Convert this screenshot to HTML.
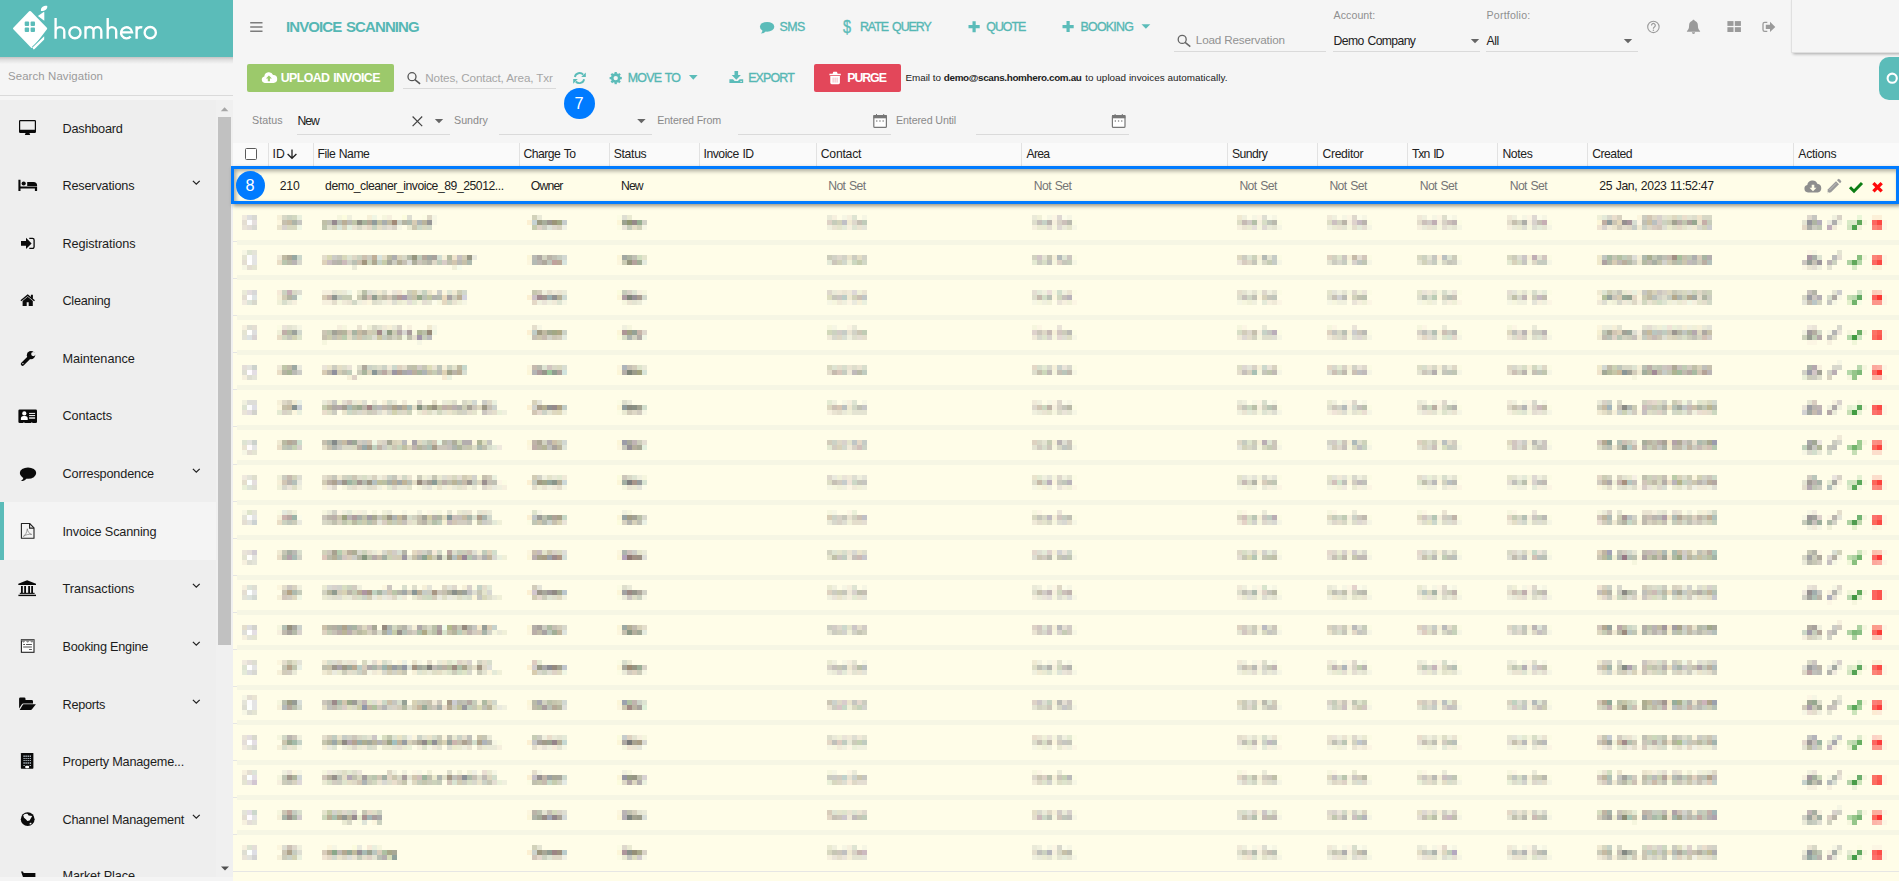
<!DOCTYPE html>
<html><head><meta charset="utf-8"><title>Invoice Scanning</title>
<style>
html,body{margin:0;padding:0;width:1899px;height:881px;overflow:hidden;}
body{background:#f5f5f5;font-family:"Liberation Sans",sans-serif;}
#root{position:absolute;left:0;top:0;width:1899px;height:881px;overflow:hidden;background:#f5f5f5;}
.t{position:absolute;white-space:nowrap;height:20px;line-height:20px;}
.a{position:absolute;}
svg{position:absolute;overflow:visible;}
</style></head><body><div id="root">
<div class="a" style="left:0;top:100px;width:233px;height:777px;background:#eeeeee;"></div>
<span class="t" style="left:8.00px;top:66.30px;font-size:11.4px;color:#9a9a9a;letter-spacing:0.116px;">Search Navigation</span>
<div class="a" style="left:0;top:95px;width:233px;height:1px;background:#dadada;"></div>
<div class="a" style="left:0;top:502px;width:217px;height:58px;background:#f4f4f4;"></div>
<div class="a" style="left:0;top:502px;width:4px;height:58px;background:#5bbcb9;"></div>
<div class="a" style="left:216px;top:100px;width:17px;height:777px;background:#f0f0f0;"></div>
<div class="a" style="left:218px;top:117px;width:13px;height:528px;background:#c1c1c1;"></div>
<svg style="left:220px;top:106px" width="10" height="6"><path d="M0.800 5.300L4.600 1.300L8.400 5.300Z" fill="#a6a6a6"/></svg>
<svg style="left:220px;top:866px" width="10" height="6"><path d="M1 0.5L5 4.5L9 0.5Z" fill="#505050"/></svg>
<span class="t" style="left:62.50px;top:118.60px;font-size:12.7px;color:#1c1c1c;letter-spacing:-0.213px;">Dashboard</span>
<span class="t" style="left:62.50px;top:175.90px;font-size:12.7px;color:#1c1c1c;letter-spacing:-0.188px;">Reservations</span>
<svg style="left:192px;top:180.1px" width="9" height="6"><path d="M0.9 0.9L4.3 4.1L7.7 0.9" fill="none" stroke="#222" stroke-width="1.3"/></svg>
<span class="t" style="left:62.50px;top:233.70px;font-size:12.7px;color:#1c1c1c;letter-spacing:-0.089px;">Registrations</span>
<span class="t" style="left:62.50px;top:290.90px;font-size:12.7px;color:#1c1c1c;letter-spacing:-0.295px;">Cleaning</span>
<span class="t" style="left:62.50px;top:348.80px;font-size:12.7px;color:#1c1c1c;letter-spacing:-0.037px;">Maintenance</span>
<span class="t" style="left:62.50px;top:406.30px;font-size:12.7px;color:#1c1c1c;letter-spacing:-0.066px;">Contacts</span>
<span class="t" style="left:62.50px;top:463.60px;font-size:12.7px;color:#1c1c1c;letter-spacing:-0.166px;">Correspondence</span>
<svg style="left:192px;top:467.8px" width="9" height="6"><path d="M0.9 0.9L4.3 4.1L7.7 0.9" fill="none" stroke="#222" stroke-width="1.3"/></svg>
<span class="t" style="left:62.50px;top:521.50px;font-size:12.7px;color:#1c1c1c;letter-spacing:-0.172px;">Invoice Scanning</span>
<span class="t" style="left:62.50px;top:578.90px;font-size:12.7px;color:#1c1c1c;letter-spacing:-0.024px;">Transactions</span>
<svg style="left:192px;top:583.1px" width="9" height="6"><path d="M0.9 0.9L4.3 4.1L7.7 0.9" fill="none" stroke="#222" stroke-width="1.3"/></svg>
<span class="t" style="left:62.50px;top:636.60px;font-size:12.7px;color:#1c1c1c;letter-spacing:-0.233px;">Booking Engine</span>
<svg style="left:192px;top:640.8px" width="9" height="6"><path d="M0.9 0.9L4.3 4.1L7.7 0.9" fill="none" stroke="#222" stroke-width="1.3"/></svg>
<span class="t" style="left:62.50px;top:694.50px;font-size:12.7px;color:#1c1c1c;letter-spacing:-0.258px;">Reports</span>
<svg style="left:192px;top:698.7px" width="9" height="6"><path d="M0.9 0.9L4.3 4.1L7.7 0.9" fill="none" stroke="#222" stroke-width="1.3"/></svg>
<span class="t" style="left:62.50px;top:751.90px;font-size:12.7px;color:#1c1c1c;letter-spacing:-0.200px;">Property Manageme...</span>
<span class="t" style="left:62.50px;top:809.50px;font-size:12.7px;color:#1c1c1c;letter-spacing:-0.175px;">Channel Management</span>
<svg style="left:192px;top:813.7px" width="9" height="6"><path d="M0.9 0.9L4.3 4.1L7.7 0.9" fill="none" stroke="#222" stroke-width="1.3"/></svg>
<span class="t" style="left:62.50px;top:866.40px;font-size:12.7px;color:#1c1c1c;letter-spacing:-0.143px;">Market Place</span>
<svg style="left:0;top:0" width="240" height="881" ><path d="M20.3 120h14.4a1.3 1.3 0 0 1 1.3 1.3v10.4a1.3 1.3 0 0 1-1.3 1.3h-14.4a1.3 1.3 0 0 1-1.3-1.3v-10.4a1.3 1.3 0 0 1 1.3-1.3zM20.2 121.2v8.6h14.6v-8.6z" fill="#0a0a0a" fill-rule="evenodd"/><path d="M25.6 133h3.8l0.8 1.9h-5.4z" fill="#0a0a0a"/><path d="M18.4 179.8h2.1v6.6h16.6v4.5h-2.2v-2.3h-14.4v2.3h-2.1z" fill="#0a0a0a"/><circle cx="23.7" cy="183.5" r="2.1" fill="#0a0a0a"/><path d="M27.2 182h6.3a3.6 3.6 0 0 1 3.6 3.6v0.5h-9.9z" fill="#0a0a0a"/><path d="M21 241h5v-3.2l5.6 5.6l-5.6 5.6v-3.2h-5z" fill="#0a0a0a"/><path d="M29.3 238.4h3.2a1.6 1.6 0 0 1 1.6 1.6v6.8a1.6 1.6 0 0 1-1.6 1.6h-3.2" fill="none" stroke="#0a0a0a" stroke-width="1.3"/><path d="M20.9 300.8l6.8-5.6l6.8 5.6" fill="none" stroke="#0a0a0a" stroke-width="1.4"/><path d="M22.6 300.9l5.1-4.2l5.1 4.2v5.1h-4.1v-3.8h-2v3.8h-4.1z" fill="#0a0a0a"/><path d="M30.9 294.8h2v4.2l-2-1.6z" fill="#0a0a0a"/><path d="M22.6 364l5.8-5.8" stroke="#0a0a0a" stroke-width="3.6" stroke-linecap="round" fill="none"/><circle cx="31" cy="355.150" r="4.150" fill="#0a0a0a"/><circle cx="33.300" cy="354.100" r="2.150" fill="#eee"/><circle cx="22.9" cy="363.6" r=".7" fill="#eee"/><rect x="18.4" y="409.4" width="18.6" height="13.7" rx="1.3" fill="#0a0a0a"/><circle cx="24.3" cy="413.4" r="2.1" fill="#fff"/><path d="M20.9 419.9v-1.4a2.6 2.6 0 0 1 2.6-2.6h1.6a2.6 2.6 0 0 1 2.6 2.6v1.4z" fill="#fff"/><path d="M29.1 413.4h6M29.1 415.6h6" stroke="#fff" stroke-width="1"/><path d="M29.1 418h6" stroke="#bbb" stroke-width="1.9"/><rect x="23.4" y="422.3" width="1" height="1" fill="#eee"/><rect x="31.3" y="422.3" width="1" height="1" fill="#eee"/><ellipse cx="28" cy="473.1" rx="8.2" ry="5.7" fill="#0a0a0a"/><path d="M23.5 476.5c0 2-1 3.6-2.7 4.5c2.6 0 4.6-1 6-2.6z" fill="#0a0a0a"/><path d="M21.4 523.5h8.2l4.4 4.4v10.3h-12.6z" fill="none" stroke="#222" stroke-width="1.1" stroke-linejoin="round"/><path d="M29.6 523.5v4.6h4.4" fill="none" stroke="#222" stroke-width="1.1"/><path d="M23.3 536.4c2.2-1.4 3.6-4 4-7.6c.4 3 2 5 4.4 5.6c-3-.4-5.6.2-8.4 2z" fill="none" stroke="#777" stroke-width=".7"/><path d="M27.1 580.2l8.9 3.6v1.2h-17.7v-1.2z" fill="#0a0a0a"/><path d="M21.9 586v7M25.1 586v7M29.1 586v7M32.1 586v7" stroke="#0a0a0a" stroke-width="1.8"/><rect x="19.8" y="592.8" width="14.8" height="1.1" fill="#0a0a0a"/><rect x="18.4" y="594.7" width="17.6" height="1.4" fill="#0a0a0a"/><rect x="21.4" y="639.7" width="12.6" height="12.6" fill="#fff" stroke="#222" stroke-width="1.1"/><path d="M21.4 639.7h12.6v1l-2.1 2l-2.1-2l-2.1 2l-2.1-2l-2.1 2l-2.1-2z" fill="#888"/><path d="M23.2 644.5h1.8M26.1 644.5h5.8" stroke="#444" stroke-width=".9"/><path d="M23.2 647h8.7" stroke="#999" stroke-width="1.7"/><path d="M29.1 649.5h2.8" stroke="#444" stroke-width=".9"/><path d="M19.1 698.7a1.3 1.3 0 0 1 1.3-1.3h3.8a1.3 1.3 0 0 1 1.3 1.3v1.2h6.2a1.3 1.3 0 0 1 1.3 1.3v2.2h-9.6a2 2 0 0 0-1.7 1l-2.6 4.2z" fill="#0a0a0a"/><path d="M23.6 704.2h12.3l-4.1 5.2a1.4 1.4 0 0 1-1 .5h-11.1l3-5a1.2 1.2 0 0 1 .9-.7z" fill="#0a0a0a"/><rect x="20.9" y="753" width="12.5" height="15.7" rx=".6" fill="#0a0a0a"/><rect x="23.5" y="755.5" width="1.2" height="1.4" fill="#d4e2ee"/><rect x="25.5" y="755.5" width="1.2" height="1.4" fill="#d4e2ee"/><rect x="27.6" y="755.5" width="1.2" height="1.4" fill="#d4e2ee"/><rect x="29.7" y="755.5" width="1.2" height="1.4" fill="#d4e2ee"/><rect x="23.5" y="758.0" width="1.2" height="0.9" fill="#d4e2ee"/><rect x="25.5" y="758.0" width="1.2" height="0.9" fill="#d4e2ee"/><rect x="27.6" y="758.0" width="1.2" height="0.9" fill="#d4e2ee"/><rect x="29.7" y="758.0" width="1.2" height="0.9" fill="#d4e2ee"/><rect x="23.5" y="760.1" width="1.2" height="0.9" fill="#d4e2ee"/><rect x="25.5" y="760.1" width="1.2" height="0.9" fill="#d4e2ee"/><rect x="27.6" y="760.1" width="1.2" height="0.9" fill="#d4e2ee"/><rect x="29.7" y="760.1" width="1.2" height="0.9" fill="#d4e2ee"/><rect x="23.5" y="762.3" width="1.2" height="1.4" fill="#d4e2ee"/><rect x="25.5" y="762.3" width="1.2" height="1.4" fill="#d4e2ee"/><rect x="27.6" y="762.3" width="1.2" height="1.4" fill="#d4e2ee"/><rect x="29.7" y="762.3" width="1.2" height="1.4" fill="#d4e2ee"/><rect x="23.5" y="765.0" width="1.2" height="0.9" fill="#d4e2ee"/><rect x="29.7" y="765.0" width="1.2" height="0.9" fill="#d4e2ee"/><rect x="25.2" y="765.7" width="3.9" height="2.6" rx="1" fill="#fff"/><circle cx="27.7" cy="819.2" r="6.9" fill="#0a0a0a"/><path d="M23.2 815.2c1.4-1.2 3-1.6 4.4-1.2l1 1.4l3.6 .6l-2.6 4.4l-2.2 .6l-1.6-1.8l-1.8-1.4z" fill="#f2f2f2"/><path d="M29.4 823.6l1.6-1l.6 .9l-1.6 1.3z" fill="#f2f2f2"/><path d="M21 871.4h2l.6 1.5h11.8v8h-11z" fill="#0a0a0a"/></svg>
<div class="a" style="left:0;top:876.5px;width:233px;height:5px;background:#f4f4f4;"></div>
<div class="a" style="left:0;top:0;width:233px;height:57px;background:#5bbcb9;"></div>
<div class="a" style="left:0;top:57px;width:233px;height:7px;background:linear-gradient(rgba(0,0,0,.2),rgba(0,0,0,.09) 40%,rgba(0,0,0,0));"></div>
<svg style="left:0;top:0" width="240" height="60"><path d="M14.2 28.5L30 12.2L46 28.6L32 46.8Z" fill="#fff" stroke="#fff" stroke-width="2.4" stroke-linejoin="round"/><rect x="24.7" y="21.6" width="4.4" height="4.4" rx=".9" fill="#5bbcb9"/><rect x="30.6" y="21.6" width="4.4" height="4.4" rx=".9" fill="#5bbcb9"/><rect x="24.7" y="27.6" width="4.4" height="4.4" rx=".9" fill="#5bbcb9"/><rect x="30.6" y="27.6" width="4.4" height="4.4" rx=".9" fill="#5bbcb9"/><path d="M44.6 35.2L32.2 47.4" stroke="#5bbcb9" stroke-width="1.1" fill="none"/><path d="M44.2 36.3v3.3L34.6 49a1 1 0 0 1-1.5-.1l-.5-1.300z" fill="#fff"/><path d="M37.900 15.900L43.600 12.100c.4-.2.700 0 .7.400v8.200z" fill="#fff"/><path d="M40.900 10.900C40.600 7.400 43.600 5.600 47.300 5.900C47.500 9.500 44.800 11.100 40.900 10.900Z" fill="#fff"/><path d="M55.6 17.9V38.8M55.6 31.4A4.35 4.35 0 0 1 64.3 31.4V38.8M80.55 32.65A5.6 5.6 0 1 1 69.35 32.65A5.6 5.6 0 1 1 80.55 32.65ZM85.5 26.2V38.8M85.5 31A4 4 0 0 1 93.5 31V38.8M93.5 31A3.9 3.9 0 0 1 101.3 31V38.8M107.7 17.9V38.8M107.7 31.3A4.25 4.25 0 0 1 116.2 31.3V38.8M121.2 32.3H132.1A5.55 5.55 0 1 0 130.7 36.5M136.6 26.2V38.8M136.6 31.2C136.6 28.4 139 26.7 142.3 27.4M155.85 32.65A5.6 5.6 0 1 1 144.65 32.65A5.6 5.6 0 1 1 155.85 32.65Z" fill="none" stroke="#fff" stroke-width="2.35"/></svg>
<svg style="left:250px;top:21px" width="13" height="12"><path d="M0.200 1.750h12.300M0.200 6h12.300M0.200 10.250h12.300" stroke="#7c7c7c" stroke-width="1.700"/></svg>
<span class="t" style="left:286.00px;top:16.60px;font-size:15px;color:#55b7b4;font-weight:bold;letter-spacing:-0.910px;word-spacing:1.46px;">INVOICE SCANNING</span>
<span class="t" style="left:779.60px;top:16.70px;font-size:12.4px;color:#55b7b4;-webkit-text-stroke:0.35px #55b7b4;letter-spacing:-0.604px;">SMS</span>
<span class="t" style="left:859.90px;top:16.70px;font-size:12.4px;color:#55b7b4;-webkit-text-stroke:0.35px #55b7b4;letter-spacing:-1.011px;word-spacing:1.62px;">RATE QUERY</span>
<span class="t" style="left:986.30px;top:16.70px;font-size:12.4px;color:#55b7b4;-webkit-text-stroke:0.35px #55b7b4;letter-spacing:-1.036px;">QUOTE</span>
<span class="t" style="left:1080.50px;top:16.70px;font-size:12.4px;color:#55b7b4;-webkit-text-stroke:0.35px #55b7b4;letter-spacing:-0.735px;">BOOKING</span>
<span class="t" style="left:1195.80px;top:29.60px;font-size:11.7px;color:#929292;letter-spacing:-0.162px;">Load Reservation</span>
<div class="a" style="left:1174px;top:51px;width:152px;height:1px;background:#dadada;"></div>
<span class="t" style="left:1333.60px;top:5.30px;font-size:10.6px;color:#8f8f8f;letter-spacing:0.067px;">Account:</span>
<span class="t" style="left:1333.60px;top:30.50px;font-size:12.2px;color:#212121;letter-spacing:-0.605px;word-spacing:0.97px;">Demo Company</span>
<div class="a" style="left:1333px;top:51px;width:147px;height:1px;background:#dadada;"></div>
<span class="t" style="left:1486.50px;top:5.30px;font-size:10.6px;color:#8f8f8f;letter-spacing:0.214px;">Portfolio:</span>
<span class="t" style="left:1486.50px;top:30.50px;font-size:12.2px;color:#212121;letter-spacing:-0.421px;">All</span>
<div class="a" style="left:1486px;top:51px;width:152px;height:1px;background:#dadada;"></div>
<svg style="left:0;top:0" width="1899" height="60"><ellipse cx="767.1" cy="26.8" rx="7.2" ry="4.9" fill="#5bbcb9"/><path d="M762.6 29.6c0 1.8-.6 3-1.8 4c2.2-.2 3.8-1 5-2.4z" fill="#5bbcb9"/><path d="M968.5 26.7h11.2M974.1 21.2v11" stroke="#5bbcb9" stroke-width="3.2"/><path d="M1062.5 26.6h11.2M1068.1 21.1v11" stroke="#5bbcb9" stroke-width="3.2"/><path d="M1141.5 24.2h8.8l-4.4 4.6z" fill="#5bbcb9"/><circle cx="1182.2" cy="39.4" r="4" fill="none" stroke="#666" stroke-width="1.3"/><path d="M1185.1 42.4l5.2 4.2" stroke="#666" stroke-width="1.5"/><path d="M1470.8 39h8.4l-4.2 4.2z" fill="#666"/><path d="M1623.8 39h8.4l-4.2 4.2z" fill="#666"/><circle cx="1653.4" cy="26.9" r="5.7" fill="none" stroke="#9a9a9a" stroke-width="1.1"/><path d="M1651.5 25.4a1.9 1.9 0 1 1 2.9 1.6c-.7.5-1 .8-1 1.7" fill="none" stroke="#9a9a9a" stroke-width="1.2"/><circle cx="1653.4" cy="30.3" r=".75" fill="#9a9a9a"/><path d="M1693.5 19.8c.7 0 1.1.4 1.1 1c2.2.6 3.3 2.4 3.3 4.8c0 2.8.8 4.4 2.2 5.6v.6h-13.2v-.6c1.4-1.2 2.2-2.8 2.2-5.6c0-2.4 1.100-4.200 3.300-4.800c0-.6.4-1 1.100-1z" fill="#9a9a9a"/><path d="M1691.9 32.300h3.200a1.600 1.600 0 0 1-3.200 0z" fill="#9a9a9a"/><rect x="1727.4" y="21.1" width="6.1" height="4.8" fill="#9a9a9a"/><rect x="1727.4" y="27.2" width="6.1" height="4.8" fill="#9a9a9a"/><rect x="1734.8" y="21.1" width="6.1" height="4.8" fill="#9a9a9a"/><rect x="1734.8" y="27.2" width="6.1" height="4.8" fill="#9a9a9a"/><path d="M1767.3 22.4h-2.600a1.700 1.700 0 0 0-1.700 1.700v5.600a1.700 1.700 0 0 0 1.700 1.700h2.600" fill="none" stroke="#9a9a9a" stroke-width="1.3"/><path d="M1765.8 24.700h4.200v-3l5.300 5.200l-5.300 5.200v-3h-4.200z" fill="#9a9a9a"/></svg><span class="t" style="left:843.2px;top:16.6px;font-size:17.5px;color:#5bbcb9;-webkit-text-stroke:.4px #5bbcb9;transform:scaleX(.82);transform-origin:0 0;">$</span>
<div class="a" style="left:1791px;top:-5px;width:120px;height:56px;background:#f5f5f5;border:1px solid #e0e0e0;box-shadow:0 3px 3px -2px rgba(0,0,0,.32);"></div>
<div class="a" style="left:1879px;top:57px;width:30px;height:43px;background:#5bbcb9;border-radius:10px;"></div>
<svg style="left:1885px;top:72px" width="13" height="13"><circle cx="7.2" cy="6.2" r="4.6" fill="none" stroke="#fff" stroke-width="2.1"/></svg>
<div class="a" style="left:247px;top:64px;width:147px;height:28px;background:#9cc96b;border-radius:2px;"></div>
<span class="t" style="left:280.70px;top:67.60px;font-size:12.4px;color:#fff;font-weight:bold;letter-spacing:-0.611px;word-spacing:0.98px;">UPLOAD INVOICE</span>
<span class="t" style="left:425.30px;top:68.00px;font-size:11.7px;color:#a6a6a6;letter-spacing:-0.144px;">Notes, Contact, Area, Txr</span>
<div class="a" style="left:403px;top:88px;width:153px;height:1px;background:#dadada;"></div>
<span class="t" style="left:627.80px;top:67.50px;font-size:12.4px;color:#55b7b4;-webkit-text-stroke:0.35px #55b7b4;letter-spacing:-0.794px;word-spacing:1.27px;">MOVE TO</span>
<span class="t" style="left:748.20px;top:67.50px;font-size:12.4px;color:#55b7b4;-webkit-text-stroke:0.35px #55b7b4;letter-spacing:-0.843px;">EXPORT</span>
<div class="a" style="left:814px;top:64px;width:87px;height:28px;background:#e3475a;border-radius:2px;"></div>
<span class="t" style="left:847.30px;top:67.60px;font-size:12.4px;color:#fff;font-weight:bold;letter-spacing:-1.111px;">PURGE</span>
<span class="t" style="left:905.50px;top:68.00px;font-size:9.9px;color:#212121;letter-spacing:-0.034px;">Email to</span>
<span class="t" style="left:943.80px;top:68.00px;font-size:9.9px;color:#212121;font-weight:bold;letter-spacing:-0.342px;">demo@scans.homhero.com.au</span>
<span class="t" style="left:1085.30px;top:68.00px;font-size:9.9px;color:#212121;letter-spacing:0.023px;">to upload invoices automatically.</span>
<svg style="left:0;top:0" width="1899" height="120"><path d="M264.800 82.900a3.300 3.300 0 0 1-.5-6.500a4.600 4.600 0 0 1 8.800-1.300a3.900 3.900 0 0 1 .4 7.800z" fill="#fff"/><path d="M268.900 75.400l3 3.100h-1.900v2.800h-2.200v-2.800h-1.900z" fill="#9cc96b"/><circle cx="412" cy="76.700" r="4" fill="none" stroke="#555" stroke-width="1.300"/><path d="M414.900 79.700l5.200 4.200" stroke="#555" stroke-width="1.500"/><path d="M574.900 77a4.800 4.800 0 0 1 8.300-2.300" fill="none" stroke="#5bbcb9" stroke-width="1.900"/><path d="M585.800 72.500v4.600h-4.600z" fill="#5bbcb9"/><path d="M584.100 79.200a4.800 4.800 0 0 1-8.300 2.300" fill="none" stroke="#5bbcb9" stroke-width="1.900"/><path d="M573.200 83.700v-4.600h4.600z" fill="#5bbcb9"/><circle cx="615.7" cy="78.1" r="3.500" fill="none" stroke="#5bbcb9" stroke-width="2.600"/><path d="M619.90 78.10L621.80 78.10" stroke="#5bbcb9" stroke-width="2.300"/><path d="M618.67 81.07L620.01 82.41" stroke="#5bbcb9" stroke-width="2.300"/><path d="M615.70 82.30L615.70 84.20" stroke="#5bbcb9" stroke-width="2.300"/><path d="M612.73 81.07L611.39 82.41" stroke="#5bbcb9" stroke-width="2.300"/><path d="M611.50 78.10L609.60 78.10" stroke="#5bbcb9" stroke-width="2.300"/><path d="M612.73 75.13L611.39 73.79" stroke="#5bbcb9" stroke-width="2.300"/><path d="M615.70 73.90L615.70 72.00" stroke="#5bbcb9" stroke-width="2.300"/><path d="M618.67 75.13L620.01 73.79" stroke="#5bbcb9" stroke-width="2.300"/><path d="M689 75.100h8.600l-4.300 4.700z" fill="#5bbcb9"/><path d="M734.500 71.100h3.600v4h2.800l-4.600 4.600l-4.600-4.600h2.800z" fill="#5bbcb9"/><path d="M729.400 79.300h3.600l1.700 1.700h3.200l1.700-1.700h3.600v3.600h-13.800z" fill="#5bbcb9"/><rect x="740.300" y="80.900" width="1.600" height=".9" fill="#f5f5f5"/><path d="M829.400 73.800h3.200l.6-1.700a.5.500 0 0 1 .5-.3h2.800a.5.500 0 0 1 .5.300l.6 1.700h3.200v1.400h-11.400z" fill="#fff"/><path d="M830.300 76.100h9.600v6.700a1.400 1.400 0 0 1-1.400 1.400h-6.800a1.400 1.400 0 0 1-1.400-1.400z" fill="#fff"/><path d="M833.100 77.600v5M835.100 77.600v5M837.100 77.600v5" stroke="#f1a3ad" stroke-width=".8"/></svg>
<div class="a" style="left:564.2px;top:88px;width:30.8px;height:30.8px;border-radius:16px;background:#007bff;"></div>
<span class="t" style="left:574.60px;top:93.20px;font-size:16.3px;color:#fff;">7</span>
<span class="t" style="left:252.00px;top:110.20px;font-size:10.7px;color:#8a8a8a;letter-spacing:0.084px;">Status</span>
<span class="t" style="left:297.40px;top:110.60px;font-size:12.2px;color:#212121;letter-spacing:-0.961px;">New</span>
<div class="a" style="left:297px;top:134px;width:153px;height:1px;background:#dadada;"></div>
<span class="t" style="left:454.00px;top:110.20px;font-size:10.7px;color:#8a8a8a;letter-spacing:0.016px;">Sundry</span>
<div class="a" style="left:499px;top:134px;width:153px;height:1px;background:#dadada;"></div>
<span class="t" style="left:657.30px;top:110.20px;font-size:10.7px;color:#8a8a8a;letter-spacing:-0.125px;">Entered From</span>
<div class="a" style="left:738px;top:134px;width:153px;height:1px;background:#dadada;"></div>
<span class="t" style="left:896.00px;top:110.20px;font-size:10.7px;color:#8a8a8a;letter-spacing:-0.137px;">Entered Until</span>
<div class="a" style="left:976px;top:134px;width:153px;height:1px;background:#dadada;"></div>
<svg style="left:0;top:0" width="1899" height="140"><path d="M412.600 116.500l9.600 9.600M422.200 116.500l-9.600 9.600" stroke="#444" stroke-width="1.200"/><path d="M434.800 119h8.400l-4.200 4.200z" fill="#666"/><path d="M637.200 119h8.400l-4.200 4.200z" fill="#666"/><rect x="873.8000000000001" y="115.600" width="12.600" height="11.800" rx="1" fill="#fff" stroke="#777" stroke-width="1.200"/><rect x="873.4000000000001" y="115" width="13.400" height="3.300" fill="#777"/><rect x="876.0" y="114" width="1" height="1.200" fill="#777"/><rect x="883.2" y="114" width="1" height="1.200" fill="#777"/><rect x="876.1" y="120.300" width="1.300" height="1.400" fill="#888"/><rect x="879.3" y="120.300" width="1.300" height="1.400" fill="#888"/><rect x="882.5" y="120.300" width="1.300" height="1.400" fill="#888"/><rect x="1112.3999999999999" y="115.600" width="12.600" height="11.800" rx="1" fill="#fff" stroke="#777" stroke-width="1.200"/><rect x="1112.0" y="115" width="13.400" height="3.300" fill="#777"/><rect x="1114.6" y="114" width="1" height="1.200" fill="#777"/><rect x="1121.8" y="114" width="1" height="1.200" fill="#777"/><rect x="1114.7" y="120.300" width="1.300" height="1.400" fill="#888"/><rect x="1117.9" y="120.300" width="1.300" height="1.400" fill="#888"/><rect x="1121.1" y="120.300" width="1.300" height="1.400" fill="#888"/></svg>
<div class="a" style="left:233px;top:143px;width:1666px;height:23px;background:#fafafa;"></div>
<span class="t" style="left:272.60px;top:143.80px;font-size:12.2px;color:#212121;">ID</span>
<span class="t" style="left:317.60px;top:143.80px;font-size:12.2px;color:#212121;letter-spacing:-0.521px;word-spacing:0.83px;">File Name</span>
<span class="t" style="left:523.60px;top:143.80px;font-size:12.2px;color:#212121;letter-spacing:-0.550px;word-spacing:0.88px;">Charge To</span>
<span class="t" style="left:613.70px;top:143.80px;font-size:12.2px;color:#212121;letter-spacing:-0.305px;">Status</span>
<span class="t" style="left:703.60px;top:143.80px;font-size:12.2px;color:#212121;letter-spacing:-0.499px;word-spacing:0.80px;">Invoice ID</span>
<span class="t" style="left:820.80px;top:143.80px;font-size:12.2px;color:#212121;letter-spacing:-0.232px;">Contact</span>
<span class="t" style="left:1026.50px;top:143.80px;font-size:12.2px;color:#212121;letter-spacing:-0.721px;">Area</span>
<span class="t" style="left:1232.00px;top:143.80px;font-size:12.2px;color:#212121;letter-spacing:-0.535px;">Sundry</span>
<span class="t" style="left:1322.40px;top:143.80px;font-size:12.2px;color:#212121;letter-spacing:-0.305px;">Creditor</span>
<span class="t" style="left:1411.90px;top:143.80px;font-size:12.2px;color:#212121;letter-spacing:-0.991px;word-spacing:1.58px;">Txn ID</span>
<span class="t" style="left:1502.40px;top:143.80px;font-size:12.2px;color:#212121;letter-spacing:-0.335px;">Notes</span>
<span class="t" style="left:1592.30px;top:143.80px;font-size:12.2px;color:#212121;letter-spacing:-0.522px;">Created</span>
<span class="t" style="left:1798.30px;top:143.80px;font-size:12.2px;color:#212121;letter-spacing:-0.286px;">Actions</span>
<div class="a" style="left:268px;top:143px;width:1px;height:23px;background:#e2e2e2;"></div>
<div class="a" style="left:312.6px;top:143px;width:1px;height:23px;background:#e2e2e2;"></div>
<div class="a" style="left:518.8px;top:143px;width:1px;height:23px;background:#e2e2e2;"></div>
<div class="a" style="left:609px;top:143px;width:1px;height:23px;background:#e2e2e2;"></div>
<div class="a" style="left:699.1px;top:143px;width:1px;height:23px;background:#e2e2e2;"></div>
<div class="a" style="left:816px;top:143px;width:1px;height:23px;background:#e2e2e2;"></div>
<div class="a" style="left:1021.3px;top:143px;width:1px;height:23px;background:#e2e2e2;"></div>
<div class="a" style="left:1227.2px;top:143px;width:1px;height:23px;background:#e2e2e2;"></div>
<div class="a" style="left:1317.2px;top:143px;width:1px;height:23px;background:#e2e2e2;"></div>
<div class="a" style="left:1407.2px;top:143px;width:1px;height:23px;background:#e2e2e2;"></div>
<div class="a" style="left:1497.1px;top:143px;width:1px;height:23px;background:#e2e2e2;"></div>
<div class="a" style="left:1587.1px;top:143px;width:1px;height:23px;background:#e2e2e2;"></div>
<div class="a" style="left:1793.1px;top:143px;width:1px;height:23px;background:#e2e2e2;"></div>
<div class="a" style="left:245px;top:148px;width:9.6px;height:9.6px;border:1.2px solid #5a5a5a;background:#fff;border-radius:1.5px;"></div>
<svg style="left:286px;top:149px" width="12" height="11"><path d="M6 0.5v8.6M1.6 5L6 9.3L10.4 5" fill="none" stroke="#212121" stroke-width="1.3"/></svg>
<div class="a" style="left:233px;top:166px;width:1666px;height:715px;background:#fffde8;"></div>
<div class="a" style="left:233px;top:871px;width:1666px;height:1px;background:#e6e6e4;"></div>
<div class="a" style="left:233px;top:241px;width:6px;height:1px;background:#e6e6e4;"></div>
<div class="a" style="left:233px;top:278px;width:6px;height:1px;background:#e6e6e4;"></div>
<div class="a" style="left:233px;top:315px;width:6px;height:1px;background:#e6e6e4;"></div>
<div class="a" style="left:233px;top:352px;width:6px;height:1px;background:#e6e6e4;"></div>
<div class="a" style="left:233px;top:389px;width:6px;height:1px;background:#e6e6e4;"></div>
<div class="a" style="left:233px;top:426px;width:6px;height:1px;background:#e6e6e4;"></div>
<div class="a" style="left:233px;top:464px;width:6px;height:1px;background:#e6e6e4;"></div>
<div class="a" style="left:233px;top:501px;width:6px;height:1px;background:#e6e6e4;"></div>
<div class="a" style="left:233px;top:538px;width:6px;height:1px;background:#e6e6e4;"></div>
<div class="a" style="left:233px;top:575px;width:6px;height:1px;background:#e6e6e4;"></div>
<div class="a" style="left:233px;top:612px;width:6px;height:1px;background:#e6e6e4;"></div>
<div class="a" style="left:233px;top:649px;width:6px;height:1px;background:#e6e6e4;"></div>
<div class="a" style="left:233px;top:686px;width:6px;height:1px;background:#e6e6e4;"></div>
<div class="a" style="left:233px;top:723px;width:6px;height:1px;background:#e6e6e4;"></div>
<div class="a" style="left:233px;top:760px;width:6px;height:1px;background:#e6e6e4;"></div>
<div class="a" style="left:233px;top:797px;width:6px;height:1px;background:#e6e6e4;"></div>
<div class="a" style="left:233px;top:834px;width:6px;height:1px;background:#e6e6e4;"></div>
<!--MOSAIC-->
<svg style="left:0;top:0" width="1899" height="881" shape-rendering="crispEdges"><path fill="#f0eade" d="M242 215h5v5h-5zM242 300h5v5h-5zM1807 325h5v5h-5zM497 445h5v5h-5zM242 475h5v5h-5zM327 485h5v5h-5zM1342 485h5v5h-5zM1812 510h5v5h-5zM1802 590h5v5h-5zM242 660h5v5h-5zM1832 670h5v5h-5zM242 745h5v5h-5zM1252 745h5v5h-5zM1602 745h5v5h-5zM1627 745h5v5h-5zM327 770h5v5h-5z"/><path fill="#dedede" d="M247 215h5v5h-5zM252 330h5v5h-5zM247 625h5v5h-5zM247 670h5v5h-5z"/><path fill="#d8d8d2" d="M252 215h5v5h-5zM252 225h5v5h-5zM402 330h5v5h-5zM1062 520h5v5h-5zM1272 520h5v5h-5zM852 550h5v5h-5zM492 555h5v5h-5zM327 585h5v5h-5zM487 590h5v5h-5zM252 670h5v5h-5zM642 740h5v5h-5zM252 745h5v5h-5zM382 780h5v5h-5z"/><path fill="#f6f0d8" d="M277 215h5v5h-5zM367 215h5v5h-5zM442 255h5v5h-5zM1052 255h5v5h-5zM1257 255h5v5h-5zM1347 255h5v5h-5zM1527 255h5v5h-5zM1637 255h5v5h-5zM1637 290h5v5h-5zM277 295h5v5h-5zM857 300h5v5h-5zM387 325h5v5h-5zM1612 325h5v5h-5zM1682 325h5v5h-5zM1697 325h5v5h-5zM1052 330h5v5h-5zM1347 330h5v5h-5zM1437 330h5v5h-5zM1527 330h5v5h-5zM442 365h5v5h-5zM1052 365h5v5h-5zM1257 365h5v5h-5zM1347 365h5v5h-5zM1437 365h5v5h-5zM1527 365h5v5h-5zM1637 365h5v5h-5zM347 375h5v5h-5zM277 400h5v5h-5zM382 400h5v5h-5zM1612 410h5v5h-5zM1052 440h5v5h-5zM1257 440h5v5h-5zM1347 440h5v5h-5zM1437 440h5v5h-5zM1527 440h5v5h-5zM277 480h5v5h-5zM322 485h5v5h-5zM447 485h5v5h-5zM1042 485h5v5h-5zM1702 510h5v5h-5zM277 515h5v5h-5zM1052 515h5v5h-5zM1257 515h5v5h-5zM377 550h5v5h-5zM477 550h5v5h-5zM1052 550h5v5h-5zM1257 550h5v5h-5zM1347 550h5v5h-5zM1437 550h5v5h-5zM1527 550h5v5h-5zM422 585h5v5h-5zM462 585h5v5h-5zM277 595h5v5h-5zM1612 595h5v5h-5zM412 625h5v5h-5zM1052 625h5v5h-5zM1257 625h5v5h-5zM1347 625h5v5h-5zM1437 625h5v5h-5zM1527 625h5v5h-5zM277 670h5v5h-5zM377 670h5v5h-5zM412 670h5v5h-5zM1612 670h5v5h-5zM477 700h5v5h-5zM1052 700h5v5h-5zM1257 700h5v5h-5zM1437 700h5v5h-5zM277 705h5v5h-5zM277 745h5v5h-5zM322 745h5v5h-5zM1052 775h5v5h-5zM1257 775h5v5h-5zM1437 775h5v5h-5zM1527 775h5v5h-5zM1052 810h5v5h-5zM1257 810h5v5h-5zM1347 810h5v5h-5zM1437 810h5v5h-5zM1527 810h5v5h-5zM277 815h5v5h-5zM277 855h5v5h-5zM847 855h5v5h-5zM1612 855h5v5h-5z"/><path fill="#d8d8c6" d="M282 215h5v5h-5zM1702 215h10v5h-10zM357 225h5v5h-5zM402 255h5v5h-5zM1262 260h5v5h-5zM1442 260h5v5h-5zM292 290h5v5h-5zM1612 290h5v5h-5zM1802 295h5v5h-5zM372 325h5v5h-5zM1337 330h5v5h-5zM1832 335h5v5h-5zM552 365h5v5h-5zM1432 365h5v5h-5zM1622 365h10v5h-10zM462 400h5v5h-5zM1617 400h5v5h-5zM1442 405h5v5h-5zM287 410h5v5h-5zM397 410h5v5h-5zM1652 410h5v5h-5zM1037 440h5v5h-5zM342 445h10v5h-10zM1057 445h5v5h-5zM1247 445h5v5h-5zM1532 445h5v5h-5zM627 475h5v5h-5zM1247 480h5v5h-5zM1042 515h5v5h-5zM1517 515h5v5h-5zM322 520h5v5h-5zM1047 520h5v5h-5zM1342 520h5v5h-5zM1702 520h5v5h-5zM1432 550h5v5h-5zM1452 550h5v5h-5zM1507 550h5v5h-5zM1522 550h5v5h-5zM1802 555h5v5h-5zM1647 585h5v5h-5zM427 625h5v5h-5zM1442 630h5v5h-5zM1812 635h5v5h-5zM1707 660h5v5h-5zM1807 660h5v5h-5zM1672 670h5v5h-5zM352 705h5v5h-5zM1042 705h5v5h-5zM1057 705h5v5h-5zM1262 705h5v5h-5zM1337 705h5v5h-5zM357 735h5v5h-5zM1427 740h5v5h-5zM397 775h5v5h-5zM1432 780h5v5h-5zM1682 780h5v5h-5zM1272 810h5v5h-5zM1522 810h5v5h-5zM1517 815h5v5h-5zM347 820h5v5h-5zM1617 845h5v5h-5zM1812 845h5v5h-5zM1057 850h5v5h-5zM1352 850h5v5h-5z"/><path fill="#ccd2c0" d="M287 215h5v5h-5zM1662 220h5v5h-5zM357 255h5v5h-5zM1422 255h5v5h-5zM1832 260h5v5h-5zM282 290h5v5h-5zM832 330h5v5h-5zM447 365h5v5h-5zM1337 370h5v5h-5zM347 475h5v5h-5zM282 520h5v5h-5zM347 585h5v5h-5zM637 595h5v5h-5zM542 670h5v5h-5zM1332 705h5v5h-5zM1422 705h5v5h-5zM1657 735h5v5h-5zM1687 735h5v5h-5zM377 810h5v5h-5zM377 820h5v5h-5zM1042 850h5v5h-5zM542 855h5v5h-5z"/><path fill="#d2d8c0" d="M292 215h5v5h-5zM1057 295h5v5h-5zM1642 300h5v5h-5zM282 335h5v5h-5zM1532 365h5v5h-5zM437 410h5v5h-5zM1677 410h5v5h-5zM387 445h5v5h-5zM1337 555h5v5h-5zM1427 555h5v5h-5zM1057 590h5v5h-5zM422 595h5v5h-5zM392 625h5v5h-5zM1057 665h5v5h-5zM1517 665h5v5h-5zM372 780h5v5h-5zM1627 780h5v5h-5zM1642 845h5v5h-5z"/><path fill="#eaf0de" d="M297 215h5v5h-5zM1632 290h5v5h-5zM862 300h5v5h-5zM1662 325h5v5h-5zM447 375h5v5h-5zM492 400h5v5h-5zM297 410h5v5h-5zM492 475h5v5h-5zM497 555h5v5h-5zM397 595h5v5h-5zM1517 735h5v5h-5zM642 780h5v5h-5zM372 845h5v5h-5zM297 855h5v5h-5z"/><path fill="#f6f6de" d="M337 215h5v5h-5zM382 215h5v5h-5zM1862 220h5v5h-5zM1052 225h5v5h-5zM1257 225h5v5h-5zM1347 225h5v5h-5zM1437 225h5v5h-5zM1527 225h5v5h-5zM1862 255h5v5h-5zM1052 260h5v5h-5zM1257 260h5v5h-5zM1347 260h5v5h-5zM1437 260h5v5h-5zM1527 260h5v5h-5zM402 290h5v5h-5zM642 290h5v5h-5zM1052 290h5v5h-5zM1257 290h5v5h-5zM1347 290h5v5h-5zM1437 290h5v5h-5zM1527 290h5v5h-5zM337 300h5v5h-5zM417 300h5v5h-5zM437 300h5v5h-5zM622 300h5v5h-5zM832 300h5v5h-5zM1037 300h5v5h-5zM1242 300h5v5h-5zM1332 300h5v5h-5zM1422 300h5v5h-5zM1512 300h5v5h-5zM1607 300h5v5h-5zM342 325h5v5h-5zM627 325h5v5h-5zM827 325h5v5h-5zM1032 325h5v5h-5zM1237 325h5v5h-5zM1327 325h5v5h-5zM1417 325h5v5h-5zM1507 325h5v5h-5zM412 330h5v5h-5zM1847 330h5v5h-5zM1862 330h5v5h-5zM1052 335h5v5h-5zM1257 335h5v5h-5zM1347 335h5v5h-5zM1437 335h5v5h-5zM1527 335h5v5h-5zM322 340h5v5h-5zM1862 365h5v5h-5zM1052 370h5v5h-5zM1257 370h5v5h-5zM1347 370h5v5h-5zM1437 370h5v5h-5zM1527 370h5v5h-5zM1632 375h5v5h-5zM1847 375h5v5h-5zM1857 400h5v5h-5zM1862 405h5v5h-5zM1052 410h5v5h-5zM1257 410h5v5h-5zM1347 410h5v5h-5zM1437 410h5v5h-5zM1527 410h5v5h-5zM1862 440h5v5h-5zM1052 445h5v5h-5zM1257 445h5v5h-5zM1347 445h5v5h-5zM1437 445h5v5h-5zM1527 445h5v5h-5zM642 475h5v5h-5zM1052 475h5v5h-5zM1257 475h5v5h-5zM1347 475h5v5h-5zM1437 475h5v5h-5zM1527 475h5v5h-5zM1862 480h5v5h-5zM342 485h5v5h-5zM417 485h5v5h-5zM432 485h5v5h-5zM467 485h5v5h-5zM622 485h5v5h-5zM832 485h5v5h-5zM1037 485h5v5h-5zM1242 485h5v5h-5zM1332 485h5v5h-5zM1422 485h5v5h-5zM1512 485h5v5h-5zM322 510h5v5h-5zM352 510h5v5h-5zM372 510h5v5h-5zM437 510h5v5h-5zM627 510h5v5h-5zM827 510h5v5h-5zM1032 510h5v5h-5zM1237 510h5v5h-5zM1327 510h5v5h-5zM1417 510h5v5h-5zM1507 510h5v5h-5zM1597 510h5v5h-5zM1862 515h5v5h-5zM1052 520h5v5h-5zM1257 520h5v5h-5zM1347 520h5v5h-5zM1437 520h5v5h-5zM1527 520h5v5h-5zM1667 520h5v5h-5zM1862 550h5v5h-5zM1052 555h5v5h-5zM1257 555h5v5h-5zM1347 555h5v5h-5zM1437 555h5v5h-5zM1527 555h5v5h-5zM1632 560h5v5h-5zM1852 590h5v5h-5zM1862 590h5v5h-5zM1052 595h5v5h-5zM1257 595h5v5h-5zM1347 595h5v5h-5zM1437 595h5v5h-5zM1527 595h5v5h-5zM1852 600h5v5h-5zM277 625h5v5h-5zM1862 625h5v5h-5zM492 630h5v5h-5zM1052 630h5v5h-5zM1257 630h5v5h-5zM1347 630h5v5h-5zM1437 630h5v5h-5zM1527 630h5v5h-5zM1862 665h5v5h-5zM1052 670h5v5h-5zM1257 670h5v5h-5zM1347 670h5v5h-5zM1437 670h5v5h-5zM1527 670h5v5h-5zM277 700h5v5h-5zM1862 700h5v5h-5zM1052 705h5v5h-5zM1257 705h5v5h-5zM1347 705h5v5h-5zM1437 705h5v5h-5zM1527 705h5v5h-5zM277 735h5v5h-5zM642 735h5v5h-5zM1052 735h5v5h-5zM1257 735h5v5h-5zM1347 735h5v5h-5zM1437 735h5v5h-5zM1527 735h5v5h-5zM1837 740h5v5h-5zM622 745h5v5h-5zM832 745h5v5h-5zM1037 745h5v5h-5zM1242 745h5v5h-5zM1332 745h5v5h-5zM1422 745h5v5h-5zM1512 745h5v5h-5zM322 770h5v5h-5zM627 770h5v5h-5zM827 770h5v5h-5zM1032 770h5v5h-5zM1237 770h5v5h-5zM1327 770h5v5h-5zM1417 770h5v5h-5zM1507 770h5v5h-5zM1597 770h5v5h-5zM277 775h5v5h-5zM1862 775h5v5h-5zM1052 780h5v5h-5zM1257 780h5v5h-5zM1347 780h5v5h-5zM1437 780h5v5h-5zM1527 780h5v5h-5zM1667 780h5v5h-5zM277 810h5v5h-5zM1862 810h5v5h-5zM1052 815h5v5h-5zM1257 815h5v5h-5zM1347 815h5v5h-5zM1437 815h5v5h-5zM1527 815h5v5h-5zM1632 820h5v5h-5zM1847 820h5v5h-5zM377 845h5v5h-5zM1862 850h5v5h-5zM1052 855h5v5h-5zM1257 855h5v5h-5zM1347 855h5v5h-5zM1437 855h5v5h-5zM1527 855h5v5h-5z"/><path fill="#fcfcde" d="M342 215h5v5h-5zM402 215h5v5h-5zM617 290h5v5h-5zM617 335h5v5h-5zM477 475h5v5h-5zM617 475h5v5h-5zM617 520h5v5h-5zM617 735h5v5h-5zM617 780h5v5h-5zM352 845h5v5h-5z"/><path fill="#f0f0de" d="M347 215h5v5h-5zM1242 215h5v5h-5zM1332 215h5v5h-5zM1422 215h5v5h-5zM1512 215h5v5h-5zM1832 215h5v5h-5zM1837 220h5v5h-5zM827 225h5v5h-5zM1327 225h5v5h-5zM1817 265h5v5h-5zM542 290h5v5h-5zM1042 290h5v5h-5zM1062 290h5v5h-5zM1247 290h5v5h-5zM1267 290h5v5h-5zM1337 290h5v5h-5zM1447 290h5v5h-5zM1537 290h5v5h-5zM357 300h5v5h-5zM382 300h5v5h-5zM537 300h5v5h-5zM547 300h5v5h-5zM842 300h5v5h-5zM1042 300h5v5h-5zM1252 300h5v5h-5zM1337 300h10v5h-10zM1432 300h5v5h-5zM1517 300h10v5h-10zM1542 300h5v5h-5zM1672 300h5v5h-5zM622 325h5v5h-5zM1602 325h10v5h-10zM1687 325h5v5h-5zM1802 330h5v5h-5zM847 335h5v5h-5zM242 400h5v5h-5zM832 400h5v5h-5zM1037 400h5v5h-5zM1242 400h5v5h-5zM1332 400h5v5h-5zM1422 400h5v5h-5zM1512 400h5v5h-5zM1827 405h5v5h-5zM1837 405h5v5h-5zM502 410h5v5h-5zM562 410h5v5h-5zM1032 410h5v5h-5zM1237 410h5v5h-5zM1417 410h5v5h-5zM1692 410h5v5h-5zM377 475h5v5h-5zM542 475h5v5h-5zM637 475h5v5h-5zM857 475h5v5h-5zM1042 475h5v5h-5zM1062 475h5v5h-5zM1247 475h5v5h-5zM1267 475h5v5h-5zM1357 475h5v5h-5zM1447 475h5v5h-5zM1517 475h5v5h-5zM1537 475h5v5h-5zM297 485h5v5h-5zM377 485h5v5h-5zM442 485h5v5h-5zM497 485h5v5h-5zM547 485h5v5h-5zM842 485h5v5h-5zM862 485h5v5h-5zM1047 485h5v5h-5zM1252 485h5v5h-5zM1272 485h5v5h-5zM1362 485h5v5h-5zM1427 485h10v5h-10zM1452 485h5v5h-5zM1517 485h10v5h-10zM1542 485h5v5h-5zM1682 485h5v5h-5zM1707 485h5v5h-5zM1832 485h5v5h-5zM342 510h5v5h-5zM362 510h5v5h-5zM417 510h5v5h-5zM622 510h5v5h-5zM1687 510h5v5h-5zM1807 525h5v5h-5zM297 585h5v5h-5zM357 585h5v5h-5zM832 585h5v5h-5zM1037 585h5v5h-5zM1242 585h5v5h-5zM1332 585h5v5h-5zM1422 585h5v5h-5zM1682 585h5v5h-5zM562 595h5v5h-5zM827 595h5v5h-5zM1327 595h5v5h-5zM1507 595h5v5h-5zM1692 595h5v5h-5zM1817 625h5v5h-5zM832 660h5v5h-5zM1037 660h5v5h-5zM1242 660h5v5h-5zM1332 660h5v5h-5zM1422 660h5v5h-5zM1512 660h5v5h-5zM1832 660h5v5h-5zM1837 665h5v5h-5zM827 670h5v5h-5zM1032 670h5v5h-5zM1237 670h5v5h-5zM1327 670h5v5h-5zM1417 670h5v5h-5zM1507 670h5v5h-5zM1692 670h5v5h-5zM502 705h5v5h-5zM1817 710h5v5h-5zM297 735h5v5h-5zM542 735h5v5h-5zM1062 735h5v5h-5zM1247 735h5v5h-5zM1267 735h5v5h-5zM1337 735h5v5h-5zM1357 735h5v5h-5zM1427 735h5v5h-5zM1447 735h5v5h-5zM1537 735h5v5h-5zM1632 735h5v5h-5zM342 745h5v5h-5zM462 745h5v5h-5zM547 745h5v5h-5zM842 745h5v5h-5zM857 745h10v5h-10zM1047 745h5v5h-5zM1067 745h5v5h-5zM1272 745h5v5h-5zM1342 745h5v5h-5zM1432 745h5v5h-5zM1517 745h10v5h-10zM1542 745h5v5h-5zM1682 745h5v5h-5zM282 770h5v5h-5zM392 770h5v5h-5zM402 770h5v5h-5zM622 770h5v5h-5zM1697 770h5v5h-5zM1807 770h5v5h-5zM502 780h5v5h-5zM297 845h5v5h-5zM832 845h5v5h-5zM1037 845h5v5h-5zM1242 845h5v5h-5zM1332 845h5v5h-5zM1422 845h5v5h-5zM1512 845h5v5h-5zM1682 845h5v5h-5zM1032 855h5v5h-5zM1237 855h5v5h-5zM1327 855h5v5h-5zM1507 855h5v5h-5z"/><path fill="#f0f6e4" d="M372 215h5v5h-5zM297 225h5v5h-5zM347 290h5v5h-5zM1687 300h5v5h-5zM432 330h5v5h-5zM642 335h5v5h-5zM372 440h5v5h-5zM297 595h5v5h-5zM1682 660h5v5h-5zM562 670h5v5h-5z"/><path fill="#f6f0de" d="M387 215h5v5h-5zM832 215h5v5h-5zM847 215h5v5h-5zM1052 220h5v5h-5zM1257 220h5v5h-5zM1347 220h5v5h-5zM1437 220h5v5h-5zM1527 220h5v5h-5zM847 225h5v5h-5zM1032 225h5v5h-5zM1237 225h5v5h-5zM1417 225h5v5h-5zM1507 225h5v5h-5zM322 290h10v5h-10zM637 290h5v5h-5zM292 300h5v5h-5zM322 300h10v5h-10zM362 300h5v5h-5zM387 300h5v5h-5zM1062 300h5v5h-5zM1267 300h5v5h-5zM1357 300h5v5h-5zM1447 300h5v5h-5zM1537 300h5v5h-5zM1637 300h5v5h-5zM1692 300h5v5h-5zM242 325h5v5h-5zM337 325h5v5h-5zM407 325h5v5h-5zM1257 330h5v5h-5zM1637 330h5v5h-5zM1827 340h5v5h-5zM1817 365h5v5h-5zM242 375h5v5h-5zM847 400h5v5h-5zM1832 400h5v5h-5zM1052 405h5v5h-5zM1257 405h5v5h-5zM1347 405h5v5h-5zM1437 405h5v5h-5zM1527 405h5v5h-5zM827 410h5v5h-5zM1327 410h5v5h-5zM1507 410h5v5h-5zM1837 480h5v5h-5zM502 485h5v5h-5zM1062 485h5v5h-5zM1267 485h5v5h-5zM1357 485h5v5h-5zM1447 485h5v5h-5zM1537 485h5v5h-5zM357 510h5v5h-5zM1652 510h5v5h-5zM1347 515h5v5h-5zM1437 515h5v5h-5zM1527 515h5v5h-5zM242 560h5v5h-5zM242 585h5v5h-5zM847 585h5v5h-5zM1052 590h5v5h-5zM1257 590h5v5h-5zM1347 590h5v5h-5zM1437 590h5v5h-5zM1527 590h5v5h-5zM1827 590h5v5h-5zM847 595h5v5h-5zM1032 595h5v5h-5zM1237 595h5v5h-5zM1417 595h5v5h-5zM1837 620h5v5h-5zM277 630h5v5h-5zM242 635h5v5h-5zM1802 635h5v5h-5zM847 660h5v5h-5zM1052 665h5v5h-5zM1257 665h5v5h-5zM1347 665h5v5h-5zM1437 665h5v5h-5zM1527 665h5v5h-5zM847 670h5v5h-5zM1347 700h5v5h-5zM1527 700h5v5h-5zM637 735h5v5h-5zM417 745h5v5h-5zM497 745h5v5h-5zM537 745h5v5h-5zM1062 745h5v5h-5zM1267 745h5v5h-5zM1357 745h5v5h-5zM1447 745h5v5h-5zM1537 745h5v5h-5zM1832 745h5v5h-5zM242 770h5v5h-5zM1652 770h5v5h-5zM1347 775h5v5h-5zM1802 775h5v5h-5zM277 780h5v5h-5zM1807 785h10v5h-10zM1827 785h5v5h-5zM1817 810h5v5h-5zM242 820h5v5h-5zM242 845h5v5h-5zM847 845h5v5h-5zM1052 850h5v5h-5zM1257 850h5v5h-5zM1347 850h5v5h-5zM1437 850h5v5h-5zM1527 850h5v5h-5zM1827 850h5v5h-5zM827 855h5v5h-5zM1417 855h5v5h-5z"/><path fill="#deded2" d="M407 215h5v5h-5zM622 215h5v5h-5zM1262 215h5v5h-5zM1522 225h5v5h-5zM1532 225h5v5h-5zM1662 225h5v5h-5zM1517 255h5v5h-5zM297 290h5v5h-5zM367 290h5v5h-5zM392 300h5v5h-5zM1602 300h5v5h-5zM247 325h5v5h-5zM1632 330h5v5h-5zM372 335h5v5h-5zM1062 335h5v5h-5zM1272 335h5v5h-5zM1352 335h5v5h-5zM1662 335h5v5h-5zM242 370h5v5h-5zM1327 370h5v5h-5zM247 375h5v5h-5zM362 400h5v5h-5zM377 410h5v5h-5zM1272 410h5v5h-5zM1342 410h5v5h-5zM1062 440h5v5h-5zM1537 440h5v5h-5zM297 475h5v5h-5zM442 475h5v5h-5zM852 475h5v5h-5zM252 485h5v5h-5zM1712 485h5v5h-5zM842 520h5v5h-5zM1057 520h5v5h-5zM1267 520h5v5h-5zM1447 520h5v5h-5zM1517 520h5v5h-5zM1537 520h5v5h-5zM472 550h5v5h-5zM1037 550h5v5h-5zM1032 555h5v5h-5zM1507 555h5v5h-5zM247 560h5v5h-5zM252 585h5v5h-5zM1697 585h5v5h-5zM472 590h5v5h-5zM337 595h5v5h-5zM1057 595h5v5h-5zM1262 595h5v5h-5zM1627 595h5v5h-5zM1357 625h5v5h-5zM1517 625h5v5h-5zM252 660h5v5h-5zM332 660h5v5h-5zM1697 660h5v5h-5zM547 670h5v5h-5zM1262 670h5v5h-5zM1432 670h5v5h-5zM1627 670h5v5h-5zM372 700h5v5h-5zM1042 700h5v5h-5zM1247 700h5v5h-5zM1517 700h5v5h-5zM1837 700h5v5h-5zM242 705h5v5h-5zM247 710h5v5h-5zM852 735h5v5h-5zM447 745h5v5h-5zM1712 745h5v5h-5zM842 780h5v5h-5zM1537 780h5v5h-5zM562 810h5v5h-5zM1237 815h5v5h-5zM1817 820h5v5h-5zM282 845h5v5h-5zM1262 845h5v5h-5zM1532 845h5v5h-5zM1697 845h5v5h-5zM242 850h5v5h-5zM297 850h5v5h-5zM1352 855h5v5h-5zM1442 855h5v5h-5z"/><path fill="#fcfce4" d="M422 215h5v5h-5zM617 215h5v5h-5zM1072 220h5v5h-5zM1277 220h5v5h-5zM1367 220h5v5h-5zM1457 220h5v5h-5zM1547 220h5v5h-5zM617 225h5v5h-5zM1072 255h5v5h-5zM1277 255h5v5h-5zM1367 255h5v5h-5zM1457 255h5v5h-5zM1547 255h5v5h-5zM1072 290h5v5h-5zM1277 290h5v5h-5zM1367 290h5v5h-5zM1457 290h5v5h-5zM1547 290h5v5h-5zM1862 290h5v5h-5zM1862 295h5v5h-5zM277 325h5v5h-5zM1072 330h5v5h-5zM1277 330h5v5h-5zM1367 330h5v5h-5zM1457 330h5v5h-5zM1547 330h5v5h-5zM1852 330h5v5h-5zM527 335h5v5h-5zM1072 365h5v5h-5zM1277 365h5v5h-5zM1367 365h5v5h-5zM1457 365h5v5h-5zM1547 365h5v5h-5zM357 375h5v5h-5zM617 400h5v5h-5zM1667 400h5v5h-5zM1692 400h5v5h-5zM1072 405h5v5h-5zM1277 405h5v5h-5zM1367 405h5v5h-5zM1457 405h5v5h-5zM1547 405h5v5h-5zM1612 405h5v5h-5zM477 410h5v5h-5zM617 410h5v5h-5zM1667 410h5v5h-5zM1072 440h5v5h-5zM1277 440h5v5h-5zM1367 440h5v5h-5zM1457 440h5v5h-5zM1547 440h5v5h-5zM1637 440h5v5h-5zM1072 475h5v5h-5zM1277 475h5v5h-5zM1367 475h5v5h-5zM1457 475h5v5h-5zM1547 475h5v5h-5zM1637 475h5v5h-5zM502 480h5v5h-5zM1612 485h5v5h-5zM277 510h5v5h-5zM1682 510h5v5h-5zM1072 515h5v5h-5zM1277 515h5v5h-5zM1367 515h5v5h-5zM1457 515h5v5h-5zM1547 515h5v5h-5zM1637 515h5v5h-5zM472 520h5v5h-5zM527 520h5v5h-5zM442 550h5v5h-5zM1072 550h5v5h-5zM1277 550h5v5h-5zM1367 550h5v5h-5zM1457 550h5v5h-5zM1547 550h5v5h-5zM1637 550h5v5h-5zM472 585h5v5h-5zM617 585h5v5h-5zM1667 585h5v5h-5zM1692 585h5v5h-5zM1072 590h5v5h-5zM1277 590h5v5h-5zM1367 590h5v5h-5zM1457 590h5v5h-5zM1547 590h5v5h-5zM1612 590h5v5h-5zM617 595h5v5h-5zM1667 595h5v5h-5zM1072 625h5v5h-5zM1277 625h5v5h-5zM1367 625h5v5h-5zM1457 625h5v5h-5zM1547 625h5v5h-5zM1637 625h5v5h-5zM1847 635h5v5h-5zM617 660h5v5h-5zM1667 660h5v5h-5zM1692 660h5v5h-5zM1072 665h5v5h-5zM1277 665h5v5h-5zM1367 665h5v5h-5zM1457 665h5v5h-5zM1547 665h5v5h-5zM1612 665h5v5h-5zM617 670h5v5h-5zM1667 670h5v5h-5zM442 700h5v5h-5zM1072 700h5v5h-5zM1277 700h5v5h-5zM1367 700h5v5h-5zM1457 700h5v5h-5zM1547 700h5v5h-5zM1637 700h5v5h-5zM1802 700h5v5h-5zM1072 735h5v5h-5zM1277 735h5v5h-5zM1367 735h5v5h-5zM1457 735h5v5h-5zM1547 735h5v5h-5zM1637 735h5v5h-5zM1862 735h5v5h-5zM497 740h5v5h-5zM1862 740h5v5h-5zM377 745h5v5h-5zM1612 745h5v5h-5zM1682 770h5v5h-5zM1072 775h5v5h-5zM1277 775h5v5h-5zM1367 775h5v5h-5zM1457 775h5v5h-5zM1547 775h5v5h-5zM1637 775h5v5h-5zM1847 775h10v5h-10zM527 780h5v5h-5zM357 810h5v5h-5zM1072 810h5v5h-5zM1277 810h5v5h-5zM1367 810h5v5h-5zM1457 810h5v5h-5zM1547 810h5v5h-5zM1637 810h5v5h-5zM357 820h5v5h-5zM617 845h5v5h-5zM1667 845h5v5h-5zM1692 845h5v5h-5zM1857 845h5v5h-5zM1072 850h5v5h-5zM1277 850h5v5h-5zM1367 850h5v5h-5zM1457 850h5v5h-5zM1547 850h5v5h-5zM1612 850h5v5h-5zM617 855h5v5h-5zM1667 855h5v5h-5z"/><path fill="#ded8c6" d="M427 215h5v5h-5zM1652 215h5v5h-5zM1627 225h5v5h-5zM1647 225h5v5h-5zM352 255h5v5h-5zM432 260h5v5h-5zM1247 260h5v5h-5zM1532 260h5v5h-5zM1697 290h5v5h-5zM1632 300h5v5h-5zM1042 330h5v5h-5zM837 335h5v5h-5zM1452 365h5v5h-5zM1507 365h5v5h-5zM1542 365h5v5h-5zM282 400h5v5h-5zM487 400h5v5h-5zM1677 400h5v5h-5zM1237 405h5v5h-5zM1507 405h5v5h-5zM362 410h5v5h-5zM402 410h5v5h-5zM632 410h5v5h-5zM377 440h5v5h-5zM837 440h5v5h-5zM1237 440h5v5h-5zM1687 485h5v5h-5zM1237 550h5v5h-5zM442 585h5v5h-5zM1057 585h5v5h-5zM1677 585h5v5h-5zM352 595h5v5h-5zM392 595h5v5h-5zM417 595h5v5h-5zM1647 595h5v5h-5zM1507 625h5v5h-5zM1247 630h5v5h-5zM1532 630h5v5h-5zM337 660h5v5h-5zM1647 660h5v5h-5zM1687 660h5v5h-5zM482 665h5v5h-5zM1417 665h5v5h-5zM1802 670h5v5h-5zM837 700h5v5h-5zM1352 705h5v5h-5zM1532 705h5v5h-5zM1517 740h5v5h-5zM387 770h5v5h-5zM1712 770h5v5h-5zM1417 775h5v5h-5zM1427 775h5v5h-5zM352 780h5v5h-5zM622 780h5v5h-5zM837 780h5v5h-5zM852 780h5v5h-5zM1037 780h5v5h-5zM1332 780h5v5h-5zM1047 810h5v5h-5zM342 855h5v5h-5zM552 855h10v5h-10z"/><path fill="#f6f6e4" d="M432 215h5v5h-5zM842 215h5v5h-5zM862 215h5v5h-5zM1047 215h5v5h-5zM1067 215h5v5h-5zM1252 215h5v5h-5zM1272 215h5v5h-5zM1342 215h5v5h-5zM1362 215h5v5h-5zM1432 215h5v5h-5zM1452 215h5v5h-5zM1522 215h5v5h-5zM1542 215h5v5h-5zM432 220h5v5h-5zM397 225h5v5h-5zM642 225h5v5h-5zM1072 225h5v5h-5zM1277 225h5v5h-5zM1367 225h5v5h-5zM1457 225h5v5h-5zM1547 225h5v5h-5zM237 240h1665v5h-1665zM242 250h5v5h-5zM1812 250h5v5h-5zM1072 260h5v5h-5zM1277 260h5v5h-5zM1367 260h5v5h-5zM1457 260h5v5h-5zM1547 260h5v5h-5zM242 265h5v5h-5zM237 275h1665v5h-1665zM1837 295h5v5h-5zM462 300h5v5h-5zM562 300h5v5h-5zM827 300h5v5h-5zM1032 300h5v5h-5zM1237 300h5v5h-5zM1327 300h5v5h-5zM1417 300h5v5h-5zM1507 300h5v5h-5zM1832 300h5v5h-5zM237 315h1665v5h-1665zM297 325h5v5h-5zM432 325h5v5h-5zM537 325h5v5h-5zM832 325h5v5h-5zM1827 330h5v5h-5zM1072 335h5v5h-5zM1277 335h5v5h-5zM1367 335h5v5h-5zM1457 335h5v5h-5zM1547 335h5v5h-5zM417 340h5v5h-5zM237 350h1665v5h-1665zM1837 360h5v5h-5zM1072 370h5v5h-5zM1277 370h5v5h-5zM1367 370h5v5h-5zM1457 370h5v5h-5zM1547 370h5v5h-5zM237 385h1665v5h-1665zM842 400h5v5h-5zM862 400h5v5h-5zM1047 400h5v5h-5zM1067 400h5v5h-5zM1252 400h5v5h-5zM1272 400h5v5h-5zM1342 400h5v5h-5zM1362 400h5v5h-5zM1432 400h5v5h-5zM1452 400h5v5h-5zM1522 400h5v5h-5zM1542 400h5v5h-5zM642 410h5v5h-5zM1072 410h5v5h-5zM1277 410h5v5h-5zM1367 410h5v5h-5zM1457 410h5v5h-5zM1547 410h5v5h-5zM237 425h1665v5h-1665zM1072 445h5v5h-5zM1277 445h5v5h-5zM1367 445h5v5h-5zM1457 445h5v5h-5zM1547 445h5v5h-5zM242 450h5v5h-5zM1802 450h5v5h-5zM237 460h1665v5h-1665zM562 485h5v5h-5zM827 485h5v5h-5zM1032 485h5v5h-5zM1237 485h5v5h-5zM1327 485h5v5h-5zM1417 485h5v5h-5zM1507 485h5v5h-5zM237 500h1665v5h-1665zM242 510h5v5h-5zM402 510h5v5h-5zM432 510h5v5h-5zM537 510h5v5h-5zM832 510h5v5h-5zM1807 510h5v5h-5zM1802 515h5v5h-5zM1072 520h5v5h-5zM1277 520h5v5h-5zM1367 520h5v5h-5zM1457 520h5v5h-5zM1547 520h5v5h-5zM1817 525h5v5h-5zM237 535h1665v5h-1665zM1072 555h5v5h-5zM1277 555h5v5h-5zM1367 555h5v5h-5zM1457 555h5v5h-5zM1547 555h5v5h-5zM1837 555h5v5h-5zM1832 560h5v5h-5zM237 575h1665v5h-1665zM842 585h5v5h-5zM862 585h5v5h-5zM1047 585h5v5h-5zM1067 585h5v5h-5zM1252 585h5v5h-5zM1272 585h5v5h-5zM1342 585h5v5h-5zM1362 585h5v5h-5zM1432 585h5v5h-5zM1452 585h5v5h-5zM1522 585h5v5h-5zM1542 585h5v5h-5zM1832 585h5v5h-5zM642 595h5v5h-5zM1072 595h5v5h-5zM1277 595h5v5h-5zM1367 595h5v5h-5zM1457 595h5v5h-5zM1547 595h5v5h-5zM237 610h1665v5h-1665zM1072 630h5v5h-5zM1277 630h5v5h-5zM1367 630h5v5h-5zM1457 630h5v5h-5zM1547 630h5v5h-5zM237 645h1665v5h-1665zM367 660h5v5h-5zM417 660h5v5h-5zM842 660h5v5h-5zM862 660h5v5h-5zM1047 660h5v5h-5zM1067 660h5v5h-5zM1252 660h5v5h-5zM1272 660h5v5h-5zM1342 660h5v5h-5zM1362 660h5v5h-5zM1432 660h5v5h-5zM1452 660h5v5h-5zM1522 660h5v5h-5zM1542 660h5v5h-5zM367 670h5v5h-5zM642 670h5v5h-5zM1072 670h5v5h-5zM1277 670h5v5h-5zM1367 670h5v5h-5zM1457 670h5v5h-5zM1547 670h5v5h-5zM237 685h1665v5h-1665zM242 695h5v5h-5zM1812 695h5v5h-5zM1072 705h5v5h-5zM1277 705h5v5h-5zM1367 705h5v5h-5zM1457 705h5v5h-5zM1547 705h5v5h-5zM242 710h5v5h-5zM1802 710h5v5h-5zM237 720h1665v5h-1665zM492 740h5v5h-5zM297 745h5v5h-5zM427 745h5v5h-5zM562 745h5v5h-5zM827 745h5v5h-5zM1032 745h5v5h-5zM1237 745h5v5h-5zM1327 745h5v5h-5zM1417 745h5v5h-5zM1507 745h5v5h-5zM237 760h1665v5h-1665zM297 770h5v5h-5zM417 770h5v5h-5zM492 770h5v5h-5zM537 770h5v5h-5zM832 770h5v5h-5zM1827 775h5v5h-5zM407 780h5v5h-5zM1072 780h5v5h-5zM1277 780h5v5h-5zM1367 780h5v5h-5zM1457 780h5v5h-5zM1547 780h5v5h-5zM237 795h1665v5h-1665zM1837 805h5v5h-5zM1072 815h5v5h-5zM1277 815h5v5h-5zM1367 815h5v5h-5zM1457 815h5v5h-5zM1547 815h5v5h-5zM237 830h1665v5h-1665zM332 845h5v5h-5zM842 845h5v5h-5zM862 845h5v5h-5zM1047 845h5v5h-5zM1067 845h5v5h-5zM1252 845h5v5h-5zM1272 845h5v5h-5zM1342 845h5v5h-5zM1362 845h5v5h-5zM1432 845h5v5h-5zM1452 845h5v5h-5zM1522 845h5v5h-5zM1542 845h5v5h-5zM1832 845h5v5h-5zM642 855h5v5h-5zM1072 855h5v5h-5zM1277 855h5v5h-5zM1367 855h5v5h-5zM1457 855h5v5h-5zM1547 855h5v5h-5z"/><path fill="#d2d2ba" d="M532 215h5v5h-5zM837 220h5v5h-5zM332 225h5v5h-5zM637 225h5v5h-5zM1702 225h5v5h-5zM837 260h5v5h-5zM1422 260h5v5h-5zM852 295h5v5h-5zM1352 295h5v5h-5zM1422 440h5v5h-5zM1242 445h5v5h-5zM292 475h5v5h-5zM1657 475h5v5h-5zM427 520h5v5h-5zM1657 520h5v5h-5zM1707 520h5v5h-5zM322 550h5v5h-5zM1837 550h5v5h-5zM1647 735h5v5h-5zM337 810h5v5h-5zM532 845h5v5h-5z"/><path fill="#eaead8" d="M537 215h5v5h-5zM827 215h5v5h-5zM1032 215h5v5h-5zM1062 225h5v5h-5zM1267 225h5v5h-5zM1422 225h5v5h-5zM1447 225h5v5h-5zM1512 225h5v5h-5zM1687 225h5v5h-5zM352 265h5v5h-5zM242 290h5v5h-5zM342 290h5v5h-5zM562 290h5v5h-5zM832 290h5v5h-5zM287 300h5v5h-5zM637 300h5v5h-5zM1442 300h5v5h-5zM1627 300h5v5h-5zM292 325h5v5h-5zM392 325h5v5h-5zM852 325h5v5h-5zM1262 325h5v5h-5zM1442 325h5v5h-5zM1532 325h5v5h-5zM1652 325h5v5h-5zM1677 325h5v5h-5zM1702 325h5v5h-5zM642 365h5v5h-5zM1447 365h5v5h-5zM322 400h5v5h-5zM352 400h5v5h-5zM372 400h5v5h-5zM392 400h5v5h-5zM442 400h5v5h-5zM627 400h5v5h-5zM1237 400h5v5h-5zM1417 400h5v5h-5zM1597 400h5v5h-5zM432 410h5v5h-5zM842 410h5v5h-5zM1037 410h5v5h-5zM1267 410h5v5h-5zM1447 410h5v5h-5zM1832 410h5v5h-5zM1817 450h5v5h-5zM427 475h5v5h-5zM552 475h5v5h-5zM362 485h5v5h-5zM397 485h10v5h-10zM422 485h5v5h-5zM452 485h5v5h-5zM472 485h5v5h-5zM1262 485h5v5h-5zM1442 485h5v5h-5zM1627 485h5v5h-5zM327 510h5v5h-5zM387 510h5v5h-5zM487 510h5v5h-5zM1262 510h5v5h-5zM1352 510h5v5h-5zM1602 510h5v5h-5zM1657 510h5v5h-5zM1707 510h5v5h-5zM827 520h5v5h-5zM1327 520h5v5h-5zM372 550h5v5h-5zM642 550h5v5h-5zM1357 550h5v5h-5zM1447 550h5v5h-5zM1802 560h5v5h-5zM627 585h5v5h-5zM1032 585h5v5h-5zM1327 585h5v5h-5zM1507 585h5v5h-5zM1837 590h5v5h-5zM347 595h5v5h-5zM452 595h5v5h-5zM492 595h5v5h-5zM622 595h5v5h-5zM842 595h5v5h-5zM1037 595h5v5h-5zM1062 595h5v5h-5zM1267 595h5v5h-5zM1447 595h5v5h-5zM1512 595h5v5h-5zM1537 595h5v5h-5zM497 630h5v5h-5zM342 660h5v5h-5zM387 660h5v5h-5zM437 660h5v5h-5zM1417 660h5v5h-5zM1507 660h5v5h-5zM292 670h5v5h-5zM427 670h5v5h-5zM622 670h5v5h-5zM832 670h5v5h-5zM1247 670h5v5h-5zM1267 670h5v5h-5zM1357 670h5v5h-5zM1537 670h5v5h-5zM1837 695h5v5h-5zM487 735h5v5h-5zM552 735h5v5h-5zM832 735h5v5h-5zM847 740h5v5h-5zM487 745h10v5h-10zM1532 745h5v5h-5zM1647 745h5v5h-5zM332 770h5v5h-5zM852 770h5v5h-5zM1057 770h5v5h-5zM1262 770h5v5h-5zM1442 770h5v5h-5zM1532 770h5v5h-5zM1657 770h5v5h-5zM1707 770h5v5h-5zM1327 780h5v5h-5zM642 810h5v5h-5zM1042 810h5v5h-5zM1062 810h5v5h-5zM1357 810h5v5h-5zM1447 810h5v5h-5zM1537 810h5v5h-5zM1802 820h5v5h-5zM1032 845h5v5h-5zM1417 845h5v5h-5zM1802 850h5v5h-5zM1037 855h5v5h-5zM1267 855h5v5h-5z"/><path fill="#eaead2" d="M627 215h5v5h-5zM407 225h5v5h-5zM1037 225h10v5h-10zM1247 225h5v5h-5zM1332 225h5v5h-5zM1517 225h5v5h-5zM337 290h5v5h-5zM357 290h5v5h-5zM1622 290h5v5h-5zM397 300h5v5h-5zM1677 300h5v5h-5zM447 400h5v5h-5zM1327 400h5v5h-5zM417 410h5v5h-5zM622 410h5v5h-5zM1357 410h5v5h-5zM1512 410h5v5h-5zM1507 445h5v5h-5zM437 475h5v5h-5zM1627 475h5v5h-5zM632 485h5v5h-5zM1352 485h5v5h-5zM1652 485h5v5h-5zM1672 485h5v5h-5zM457 510h5v5h-5zM1337 550h5v5h-5zM322 585h5v5h-5zM827 585h5v5h-5zM1417 585h5v5h-5zM322 595h5v5h-5zM342 595h5v5h-5zM412 595h5v5h-5zM1242 595h5v5h-5zM1337 595h5v5h-5zM1357 595h5v5h-5zM1422 595h5v5h-5zM627 660h5v5h-5zM827 660h5v5h-5zM337 670h5v5h-5zM442 670h5v5h-5zM1042 670h5v5h-5zM1242 670h5v5h-5zM1332 670h5v5h-5zM1427 670h5v5h-5zM1447 670h5v5h-5zM452 735h5v5h-5zM1362 735h5v5h-5zM347 745h5v5h-5zM357 745h5v5h-5zM382 745h10v5h-10zM402 745h5v5h-5zM457 745h5v5h-5zM482 745h5v5h-5zM1057 745h5v5h-5zM1672 745h5v5h-5zM487 770h5v5h-5zM1352 770h5v5h-5zM322 780h5v5h-5zM342 820h5v5h-5zM627 845h5v5h-5zM827 845h5v5h-5zM622 855h5v5h-5zM1042 855h5v5h-5z"/><path fill="#dee4d2" d="M852 215h5v5h-5zM852 225h5v5h-5zM247 250h5v5h-5zM347 255h5v5h-5zM1062 255h5v5h-5zM1247 255h5v5h-5zM1447 255h5v5h-5zM1817 255h5v5h-5zM447 290h5v5h-5zM632 290h5v5h-5zM1602 290h5v5h-5zM557 300h5v5h-5zM1662 300h5v5h-5zM1537 335h5v5h-5zM542 365h5v5h-5zM832 365h5v5h-5zM1632 365h5v5h-5zM852 400h5v5h-5zM242 405h5v5h-5zM1262 410h5v5h-5zM1522 410h5v5h-5zM1682 410h5v5h-5zM242 440h5v5h-5zM1267 440h5v5h-5zM1337 440h5v5h-5zM632 475h5v5h-5zM832 550h5v5h-5zM852 585h5v5h-5zM462 595h5v5h-5zM547 595h5v5h-5zM1682 595h5v5h-5zM1042 625h5v5h-5zM242 665h5v5h-5zM417 670h5v5h-5zM1047 670h5v5h-5zM1522 670h5v5h-5zM642 700h5v5h-5zM1267 700h5v5h-5zM1537 700h5v5h-5zM392 735h5v5h-5zM332 745h5v5h-5zM1247 780h5v5h-5zM1517 780h5v5h-5zM832 810h5v5h-5zM852 810h5v5h-5zM247 845h5v5h-5zM852 845h5v5h-5zM547 855h5v5h-5zM1252 855h5v5h-5zM1627 855h5v5h-5z"/><path fill="#f0f0d8" d="M1037 215h5v5h-5zM1597 215h5v5h-5zM1857 225h5v5h-5zM847 260h5v5h-5zM452 265h5v5h-5zM857 290h5v5h-5zM1357 290h5v5h-5zM1517 290h5v5h-5zM277 300h5v5h-5zM402 300h5v5h-5zM457 300h5v5h-5zM1047 300h5v5h-5zM1067 300h5v5h-5zM1247 300h5v5h-5zM1362 300h5v5h-5zM1427 300h5v5h-5zM1452 300h5v5h-5zM1612 300h5v5h-5zM1667 300h5v5h-5zM367 325h5v5h-5zM1657 325h5v5h-5zM1692 325h5v5h-5zM277 330h5v5h-5zM847 410h5v5h-5zM277 475h5v5h-5zM422 475h5v5h-5zM837 475h5v5h-5zM1612 480h5v5h-5zM277 485h5v5h-5zM537 485h5v5h-5zM837 485h5v5h-5zM857 485h5v5h-5zM1067 485h5v5h-5zM1247 485h5v5h-5zM1337 485h5v5h-5zM1602 485h5v5h-5zM292 510h5v5h-5zM382 510h5v5h-5zM1697 510h5v5h-5zM497 520h5v5h-5zM847 520h5v5h-5zM1827 525h5v5h-5zM502 555h5v5h-5zM1512 585h5v5h-5zM497 595h5v5h-5zM502 630h5v5h-5zM847 630h5v5h-5zM497 670h5v5h-5zM847 705h5v5h-5zM837 735h5v5h-5zM1042 735h5v5h-5zM1612 740h5v5h-5zM1042 745h5v5h-5zM1247 745h5v5h-5zM1337 745h5v5h-5zM1427 745h5v5h-5zM1452 745h5v5h-5zM1702 745h10v5h-10zM427 770h5v5h-5zM457 770h5v5h-5zM467 770h5v5h-5zM1687 770h5v5h-5zM1702 770h5v5h-5zM1837 850h5v5h-5z"/><path fill="#fcf6e4" d="M1052 215h5v5h-5zM1257 215h5v5h-5zM1347 215h5v5h-5zM1437 215h5v5h-5zM1527 215h5v5h-5zM1637 220h5v5h-5zM1882 220h5v5h-5zM1882 225h5v5h-5zM1807 250h5v5h-5zM1882 255h5v5h-5zM1882 260h5v5h-5zM1802 265h5v5h-5zM387 290h5v5h-5zM1882 295h5v5h-5zM847 300h5v5h-5zM1072 300h5v5h-5zM1277 300h5v5h-5zM1367 300h5v5h-5zM1457 300h5v5h-5zM1547 300h5v5h-5zM1882 300h5v5h-5zM847 325h5v5h-5zM1037 325h5v5h-5zM1242 325h5v5h-5zM1332 325h5v5h-5zM1422 325h5v5h-5zM1512 325h5v5h-5zM1882 330h5v5h-5zM1882 335h5v5h-5zM1807 340h10v5h-10zM1882 365h5v5h-5zM1882 375h5v5h-5zM1052 400h5v5h-5zM1257 400h5v5h-5zM1347 400h5v5h-5zM1437 400h5v5h-5zM1527 400h5v5h-5zM1882 405h5v5h-5zM1882 410h5v5h-5zM1882 440h5v5h-5zM1882 445h5v5h-5zM497 480h5v5h-5zM1882 480h5v5h-5zM847 485h5v5h-5zM1072 485h5v5h-5zM1277 485h5v5h-5zM1367 485h5v5h-5zM1457 485h5v5h-5zM1547 485h5v5h-5zM1637 485h5v5h-5zM1882 485h5v5h-5zM337 510h5v5h-5zM427 510h5v5h-5zM847 510h5v5h-5zM1037 510h5v5h-5zM1242 510h5v5h-5zM1332 510h5v5h-5zM1422 510h5v5h-5zM1512 510h5v5h-5zM1827 515h5v5h-5zM1882 515h5v5h-5zM1882 520h5v5h-5zM1817 550h5v5h-5zM1882 550h5v5h-5zM1882 560h5v5h-5zM1052 585h5v5h-5zM1257 585h5v5h-5zM1347 585h5v5h-5zM1437 585h5v5h-5zM1527 585h5v5h-5zM1882 590h5v5h-5zM1882 595h5v5h-5zM1827 600h5v5h-5zM1882 625h5v5h-5zM1052 660h5v5h-5zM1257 660h5v5h-5zM1347 660h5v5h-5zM1437 660h5v5h-5zM1527 660h5v5h-5zM1882 665h5v5h-5zM1882 670h5v5h-5zM1807 695h5v5h-5zM1882 700h5v5h-5zM1882 705h5v5h-5zM1882 740h5v5h-5zM847 745h5v5h-5zM1072 745h5v5h-5zM1277 745h5v5h-5zM1367 745h5v5h-5zM1457 745h5v5h-5zM1547 745h5v5h-5zM1637 745h5v5h-5zM1882 745h5v5h-5zM412 770h5v5h-5zM847 770h5v5h-5zM1037 770h5v5h-5zM1242 770h5v5h-5zM1332 770h5v5h-5zM1422 770h5v5h-5zM1512 770h5v5h-5zM1882 775h5v5h-5zM1882 780h5v5h-5zM1882 810h5v5h-5zM1882 820h5v5h-5zM1052 845h5v5h-5zM1257 845h5v5h-5zM1347 845h5v5h-5zM1437 845h5v5h-5zM1527 845h5v5h-5zM1872 845h10v5h-10zM1882 850h5v5h-5zM1882 855h5v5h-5z"/><path fill="#ded8d2" d="M1057 215h5v5h-5zM1532 215h5v5h-5zM1057 225h5v5h-5zM1262 225h5v5h-5zM1242 335h5v5h-5zM1357 335h5v5h-5zM1242 365h5v5h-5zM1517 440h5v5h-5zM1532 475h5v5h-5zM1357 520h5v5h-5zM1827 555h5v5h-5zM837 670h5v5h-5zM1422 810h5v5h-5z"/><path fill="#fcfcea" d="M1062 215h5v5h-5zM1267 215h5v5h-5zM1357 215h5v5h-5zM1447 215h5v5h-5zM1537 215h5v5h-5zM432 300h5v5h-5zM642 300h5v5h-5zM1062 400h5v5h-5zM1267 400h5v5h-5zM1357 400h5v5h-5zM1447 400h5v5h-5zM1537 400h5v5h-5zM642 485h5v5h-5zM297 515h5v5h-5zM1062 585h5v5h-5zM1267 585h5v5h-5zM1357 585h5v5h-5zM1447 585h5v5h-5zM1537 585h5v5h-5zM1062 660h5v5h-5zM1267 660h5v5h-5zM1357 660h5v5h-5zM1447 660h5v5h-5zM1537 660h5v5h-5zM642 745h5v5h-5zM1062 845h5v5h-5zM1267 845h5v5h-5zM1357 845h5v5h-5zM1447 845h5v5h-5zM1537 845h5v5h-5z"/><path fill="#f0ead2" d="M1237 215h5v5h-5zM847 220h5v5h-5zM1637 225h5v5h-5zM1692 225h5v5h-5zM1637 260h5v5h-5zM377 290h5v5h-5zM452 290h5v5h-5zM1597 290h5v5h-5zM847 295h5v5h-5zM427 325h5v5h-5zM1597 335h5v5h-5zM1637 335h5v5h-5zM1637 370h5v5h-5zM292 400h5v5h-5zM357 400h5v5h-5zM847 405h5v5h-5zM1597 410h5v5h-5zM277 440h5v5h-5zM1612 445h5v5h-5zM337 475h5v5h-5zM1612 520h5v5h-5zM277 550h5v5h-5zM1692 550h5v5h-5zM1332 595h5v5h-5zM1597 595h5v5h-5zM1612 630h5v5h-5zM322 660h5v5h-5zM442 660h5v5h-5zM1032 660h5v5h-5zM1597 660h5v5h-5zM847 665h5v5h-5zM322 670h5v5h-5zM1037 670h5v5h-5zM1647 770h5v5h-5zM1612 780h5v5h-5zM1692 810h5v5h-5zM1597 845h5v5h-5zM847 850h5v5h-5zM1242 855h5v5h-5z"/><path fill="#f0ead8" d="M1327 215h5v5h-5zM1417 215h5v5h-5zM1507 215h5v5h-5zM1607 225h5v5h-5zM1832 225h5v5h-5zM277 255h5v5h-5zM552 290h5v5h-5zM837 290h5v5h-5zM847 290h5v5h-5zM1427 290h5v5h-5zM1627 290h5v5h-5zM342 300h5v5h-5zM552 300h5v5h-5zM837 300h5v5h-5zM1272 300h5v5h-5zM1597 300h5v5h-5zM1622 300h5v5h-5zM1682 300h5v5h-5zM382 325h5v5h-5zM827 335h5v5h-5zM1032 335h5v5h-5zM1237 335h5v5h-5zM1327 335h5v5h-5zM1417 335h5v5h-5zM1507 335h5v5h-5zM277 365h5v5h-5zM387 365h5v5h-5zM847 370h5v5h-5zM402 400h5v5h-5zM1032 400h5v5h-5zM1507 400h5v5h-5zM382 410h5v5h-5zM1837 435h5v5h-5zM847 445h5v5h-5zM397 475h5v5h-5zM562 475h5v5h-5zM847 475h5v5h-5zM1337 475h5v5h-5zM357 485h5v5h-5zM552 485h5v5h-5zM852 485h5v5h-5zM1697 485h10v5h-10zM1032 520h5v5h-5zM1237 520h5v5h-5zM1417 520h5v5h-5zM1507 520h5v5h-5zM1812 525h5v5h-5zM847 555h5v5h-5zM1237 585h5v5h-5zM847 590h5v5h-5zM402 595h5v5h-5zM1237 660h5v5h-5zM1327 660h5v5h-5zM372 670h5v5h-5zM1597 670h5v5h-5zM432 700h5v5h-5zM847 735h5v5h-5zM857 735h5v5h-5zM362 745h5v5h-5zM432 745h5v5h-5zM837 745h5v5h-5zM1362 745h5v5h-5zM1697 745h5v5h-5zM1032 780h5v5h-5zM847 815h5v5h-5zM1237 845h5v5h-5zM1327 845h5v5h-5zM1507 845h5v5h-5zM1597 855h5v5h-5z"/><path fill="#ded8cc" d="M1352 215h5v5h-5zM1807 215h5v5h-5zM852 220h5v5h-5zM552 225h5v5h-5zM837 255h5v5h-5zM827 290h5v5h-5zM1262 290h5v5h-5zM1352 290h5v5h-5zM642 330h5v5h-5zM1247 330h5v5h-5zM1517 330h5v5h-5zM1542 335h5v5h-5zM1362 365h5v5h-5zM417 400h5v5h-5zM1057 400h5v5h-5zM1352 400h5v5h-5zM1442 400h5v5h-5zM1032 405h5v5h-5zM487 410h5v5h-5zM1632 440h5v5h-5zM1337 445h5v5h-5zM827 475h5v5h-5zM1057 475h5v5h-5zM332 485h5v5h-5zM392 485h5v5h-5zM482 485h5v5h-5zM1657 485h5v5h-5zM1262 520h5v5h-5zM1332 520h5v5h-5zM1452 520h5v5h-5zM1332 550h5v5h-5zM1512 550h5v5h-5zM452 585h5v5h-5zM1442 585h5v5h-5zM1532 585h5v5h-5zM1837 585h5v5h-5zM837 625h5v5h-5zM1337 625h5v5h-5zM1517 630h5v5h-5zM1352 660h5v5h-5zM1247 705h5v5h-5zM1352 735h5v5h-5zM352 745h5v5h-5zM1837 770h5v5h-5zM1032 775h5v5h-5zM1242 780h5v5h-5zM1362 780h5v5h-5zM1532 780h5v5h-5zM342 810h5v5h-5zM862 810h5v5h-5zM1327 810h5v5h-5zM292 845h5v5h-5zM622 845h5v5h-5z"/><path fill="#dedecc" d="M1442 215h5v5h-5zM1692 215h5v5h-5zM1032 220h5v5h-5zM327 225h5v5h-5zM382 290h5v5h-5zM1032 295h5v5h-5zM1237 295h5v5h-5zM1327 295h5v5h-5zM1417 295h5v5h-5zM1507 295h5v5h-5zM1662 295h5v5h-5zM372 300h5v5h-5zM852 335h5v5h-5zM1262 335h10v5h-10zM1337 335h5v5h-5zM1362 335h5v5h-5zM1512 335h5v5h-5zM1532 335h5v5h-5zM342 365h5v5h-5zM357 365h5v5h-5zM377 365h5v5h-5zM852 365h5v5h-5zM1032 370h5v5h-5zM1817 375h5v5h-5zM452 400h5v5h-5zM622 400h5v5h-5zM1327 405h5v5h-5zM1057 410h5v5h-5zM1357 440h5v5h-5zM1427 440h5v5h-5zM252 475h5v5h-5zM357 475h5v5h-5zM1682 475h5v5h-5zM1032 480h5v5h-5zM1237 480h5v5h-5zM1327 480h5v5h-5zM367 485h5v5h-5zM1622 485h5v5h-5zM1632 485h5v5h-5zM1352 520h5v5h-5zM1422 520h5v5h-5zM1442 520h5v5h-5zM1532 520h5v5h-5zM1542 520h5v5h-5zM452 550h5v5h-5zM862 550h5v5h-5zM407 555h5v5h-5zM412 585h5v5h-5zM622 585h5v5h-5zM1652 585h5v5h-5zM1032 590h5v5h-5zM1237 590h5v5h-5zM1417 590h5v5h-5zM332 595h5v5h-5zM487 595h5v5h-5zM552 595h5v5h-5zM1442 595h5v5h-5zM1532 595h5v5h-5zM1657 595h5v5h-5zM1247 625h5v5h-5zM1267 625h5v5h-5zM1427 625h5v5h-5zM377 630h5v5h-5zM1057 660h5v5h-5zM1262 660h5v5h-5zM1532 660h5v5h-5zM352 670h5v5h-5zM1602 670h5v5h-5zM1817 700h5v5h-5zM407 705h5v5h-5zM827 735h5v5h-5zM1682 735h5v5h-5zM1032 740h5v5h-5zM372 745h5v5h-5zM1622 745h5v5h-5zM1657 745h5v5h-5zM352 770h5v5h-5zM447 770h5v5h-5zM477 775h5v5h-5zM387 780h5v5h-5zM1067 780h5v5h-5zM1267 780h5v5h-5zM1352 780h5v5h-5zM1422 780h5v5h-5zM1452 780h5v5h-5zM1512 780h5v5h-5zM1237 810h5v5h-5zM1652 845h5v5h-5zM1237 850h5v5h-5zM1327 850h5v5h-5zM1647 855h5v5h-5z"/><path fill="#e4ead8" d="M1602 215h5v5h-5zM842 225h5v5h-5zM1357 225h5v5h-5zM1537 225h5v5h-5zM827 260h5v5h-5zM1037 290h5v5h-5zM1542 290h5v5h-5zM1262 300h5v5h-5zM1537 365h5v5h-5zM1247 410h5v5h-5zM492 445h5v5h-5zM1522 475h5v5h-5zM1532 485h5v5h-5zM347 510h5v5h-5zM492 520h5v5h-5zM1042 550h5v5h-5zM1267 550h5v5h-5zM487 585h5v5h-5zM242 670h5v5h-5zM492 670h5v5h-5zM842 670h5v5h-5zM562 735h5v5h-5zM1832 735h5v5h-5zM1262 745h5v5h-5zM1442 745h5v5h-5zM1267 810h5v5h-5zM1062 855h5v5h-5zM1447 855h5v5h-5z"/><path fill="#d8d8cc" d="M1607 215h5v5h-5zM382 225h5v5h-5zM1697 225h5v5h-5zM297 260h5v5h-5zM1337 260h5v5h-5zM1427 260h5v5h-5zM1687 290h5v5h-5zM1517 295h5v5h-5zM252 300h5v5h-5zM1617 300h5v5h-5zM1837 325h5v5h-5zM1427 330h5v5h-5zM832 335h5v5h-5zM1037 335h5v5h-5zM1432 335h5v5h-5zM1047 365h5v5h-5zM1067 365h5v5h-5zM1332 365h5v5h-5zM1512 365h5v5h-5zM1832 365h10v5h-10zM1532 400h5v5h-5zM1687 400h5v5h-5zM357 410h5v5h-5zM387 410h5v5h-5zM1837 440h5v5h-5zM1427 445h5v5h-5zM1517 445h5v5h-5zM1807 450h5v5h-5zM1262 475h5v5h-5zM1352 475h5v5h-5zM1427 480h5v5h-5zM282 485h5v5h-5zM642 515h5v5h-5zM1427 515h5v5h-5zM832 520h5v5h-5zM357 550h5v5h-5zM382 550h5v5h-5zM1272 550h5v5h-5zM1362 550h5v5h-5zM1422 550h5v5h-5zM1542 550h5v5h-5zM1617 585h5v5h-5zM407 625h5v5h-5zM562 625h5v5h-5zM1042 630h5v5h-5zM1617 660h5v5h-5zM1237 665h5v5h-5zM382 670h5v5h-5zM467 670h5v5h-5zM537 670h5v5h-5zM1427 705h5v5h-5zM252 735h5v5h-5zM1057 735h5v5h-5zM1337 740h5v5h-5zM472 780h5v5h-5zM1272 780h5v5h-5zM1692 780h5v5h-5zM1702 780h5v5h-5zM1037 810h5v5h-5zM1432 810h5v5h-5zM1512 810h5v5h-5zM1542 810h5v5h-5zM1057 845h5v5h-5zM1837 845h5v5h-5z"/><path fill="#eadecc" d="M1612 215h5v5h-5zM1682 215h5v5h-5zM322 410h5v5h-5zM422 410h5v5h-5zM1702 410h5v5h-5zM442 705h5v5h-5zM547 735h5v5h-5zM1032 735h5v5h-5zM1417 735h5v5h-5zM1597 735h5v5h-5zM392 780h5v5h-5zM1702 845h5v5h-5z"/><path fill="#d8d2c0" d="M1617 215h5v5h-5zM557 225h5v5h-5zM1272 365h5v5h-5zM1247 370h5v5h-5zM1827 375h5v5h-5zM1422 445h5v5h-5zM327 475h5v5h-5zM372 475h5v5h-5zM1617 475h5v5h-5zM1237 515h5v5h-5zM337 520h5v5h-5zM622 520h5v5h-5zM1647 520h5v5h-5zM292 585h5v5h-5zM1602 585h5v5h-5zM1672 585h5v5h-5zM1327 625h5v5h-5zM367 630h5v5h-5zM1807 635h5v5h-5zM1247 665h5v5h-5zM1337 665h5v5h-5zM1677 670h5v5h-5zM1507 700h5v5h-5zM292 780h5v5h-5zM397 780h5v5h-5zM1362 810h5v5h-5zM1262 850h5v5h-5z"/><path fill="#fcf6de" d="M1637 215h5v5h-5zM277 220h5v5h-5zM527 260h5v5h-5zM617 260h5v5h-5zM432 290h5v5h-5zM442 290h5v5h-5zM1052 295h5v5h-5zM1257 295h5v5h-5zM1347 295h5v5h-5zM1437 295h5v5h-5zM1527 295h5v5h-5zM1597 295h5v5h-5zM1637 295h5v5h-5zM367 300h5v5h-5zM1597 325h5v5h-5zM527 365h5v5h-5zM617 365h5v5h-5zM1872 400h10v5h-10zM277 405h5v5h-5zM292 410h5v5h-5zM1637 410h5v5h-5zM407 440h5v5h-5zM472 440h5v5h-5zM527 445h5v5h-5zM617 445h5v5h-5zM1637 445h5v5h-5zM1667 475h5v5h-5zM1692 475h5v5h-5zM1052 480h5v5h-5zM1257 480h5v5h-5zM1347 480h5v5h-5zM1437 480h5v5h-5zM1527 480h5v5h-5zM382 485h5v5h-5zM1597 485h5v5h-5zM1637 520h5v5h-5zM1877 525h5v5h-5zM527 550h5v5h-5zM617 550h5v5h-5zM1637 555h5v5h-5zM277 585h5v5h-5zM382 585h5v5h-5zM1637 595h5v5h-5zM527 630h5v5h-5zM617 630h5v5h-5zM1637 630h5v5h-5zM277 660h5v5h-5zM397 660h5v5h-5zM487 670h5v5h-5zM1637 670h5v5h-5zM527 705h5v5h-5zM617 705h5v5h-5zM1637 705h5v5h-5zM412 735h5v5h-5zM442 735h5v5h-5zM1667 735h5v5h-5zM1692 735h5v5h-5zM1052 740h5v5h-5zM1257 740h5v5h-5zM1347 740h5v5h-5zM1437 740h5v5h-5zM1527 740h5v5h-5zM1597 745h5v5h-5zM292 770h5v5h-5zM1637 780h5v5h-5zM527 810h5v5h-5zM617 810h5v5h-5zM1637 815h5v5h-5zM372 820h5v5h-5zM277 845h5v5h-5zM327 845h5v5h-5zM1637 855h5v5h-5z"/><path fill="#ccccc0" d="M1642 215h5v5h-5zM542 225h5v5h-5zM1812 225h5v5h-5zM367 255h5v5h-5zM852 255h5v5h-5zM1242 255h5v5h-5zM392 260h5v5h-5zM1037 260h5v5h-5zM1332 260h5v5h-5zM1452 260h5v5h-5zM1632 260h5v5h-5zM1707 295h5v5h-5zM1447 330h5v5h-5zM1532 330h10v5h-10zM332 365h5v5h-5zM1812 375h5v5h-5zM332 410h5v5h-5zM1662 410h5v5h-5zM1832 440h5v5h-5zM1252 445h5v5h-5zM1452 445h5v5h-5zM1692 445h5v5h-5zM282 475h5v5h-5zM1057 480h5v5h-5zM1687 480h5v5h-5zM1817 485h5v5h-5zM1447 515h5v5h-5zM1662 585h5v5h-5zM427 590h5v5h-5zM832 590h5v5h-5zM1617 590h5v5h-5zM1607 595h5v5h-5zM542 625h5v5h-5zM827 625h5v5h-5zM1332 625h5v5h-5zM832 630h5v5h-5zM1252 630h5v5h-5zM1272 630h5v5h-5zM1362 630h5v5h-5zM1542 630h5v5h-5zM1692 630h5v5h-5zM1672 660h5v5h-5zM1687 670h5v5h-5zM1712 670h5v5h-5zM862 700h5v5h-5zM1252 700h5v5h-5zM452 705h5v5h-5zM832 705h5v5h-5zM1067 705h5v5h-5zM1692 705h5v5h-5zM537 735h5v5h-5zM1677 735h5v5h-5zM827 775h5v5h-5zM337 780h5v5h-5zM462 780h5v5h-5zM1672 845h5v5h-5zM1607 855h5v5h-5z"/><path fill="#d2c6b4" d="M1647 215h5v5h-5zM387 295h5v5h-5zM1612 330h5v5h-5zM1647 335h5v5h-5zM1697 370h5v5h-5zM1037 405h5v5h-5zM532 410h5v5h-5zM367 440h5v5h-5zM432 440h5v5h-5zM282 480h5v5h-5zM452 520h5v5h-5zM387 590h5v5h-5zM1597 700h5v5h-5zM377 775h5v5h-5zM357 780h5v5h-5z"/><path fill="#d8d2cc" d="M1657 215h5v5h-5zM1532 220h5v5h-5zM282 225h5v5h-5zM1602 225h5v5h-5zM1352 260h5v5h-5zM1047 335h5v5h-5zM1837 400h5v5h-5zM842 440h5v5h-5zM297 445h5v5h-5zM1532 480h5v5h-5zM1342 550h5v5h-5zM332 585h5v5h-5zM467 585h5v5h-5zM1707 585h5v5h-5zM852 590h5v5h-5zM297 630h5v5h-5zM1057 630h5v5h-5zM467 660h5v5h-5zM1837 660h5v5h-5zM1067 810h5v5h-5zM1332 810h5v5h-5zM1832 810h5v5h-5zM1657 845h5v5h-5z"/><path fill="#e4e4d2" d="M1662 215h5v5h-5zM1687 215h5v5h-5zM1802 220h5v5h-5zM1272 225h5v5h-5zM1342 225h5v5h-5zM1432 225h5v5h-5zM1452 225h5v5h-5zM1542 225h5v5h-5zM1837 250h5v5h-5zM242 255h5v5h-5zM1042 255h5v5h-5zM1267 255h5v5h-5zM1427 255h5v5h-5zM1537 255h5v5h-5zM1327 260h5v5h-5zM1417 260h5v5h-5zM252 265h5v5h-5zM1827 265h5v5h-5zM332 290h5v5h-5zM372 290h5v5h-5zM417 290h5v5h-5zM1242 290h5v5h-5zM1252 290h5v5h-5zM1272 290h5v5h-5zM1342 290h5v5h-5zM1432 290h5v5h-5zM1522 290h5v5h-5zM1832 290h5v5h-5zM377 300h5v5h-5zM427 300h5v5h-5zM632 300h5v5h-5zM287 325h5v5h-5zM377 325h5v5h-5zM1617 325h5v5h-5zM1642 325h5v5h-5zM242 330h5v5h-5zM1517 365h5v5h-5zM1417 370h5v5h-5zM1807 400h5v5h-5zM442 410h5v5h-5zM547 410h5v5h-5zM852 410h15v5h-15zM1067 410h5v5h-5zM1252 410h5v5h-5zM1352 410h5v5h-5zM1432 410h5v5h-5zM1542 410h5v5h-5zM1042 440h5v5h-5zM1032 445h5v5h-5zM1417 445h5v5h-5zM252 450h5v5h-5zM367 475h5v5h-5zM1067 475h5v5h-5zM1362 475h5v5h-5zM1432 475h5v5h-5zM1452 475h5v5h-5zM1512 475h5v5h-5zM1542 475h5v5h-5zM1622 475h5v5h-5zM1802 480h5v5h-5zM347 485h5v5h-5zM1617 485h5v5h-5zM287 510h5v5h-5zM447 510h5v5h-5zM462 510h5v5h-5zM477 510h5v5h-5zM1617 510h5v5h-5zM1662 510h5v5h-5zM1247 550h5v5h-5zM1632 550h5v5h-5zM242 555h5v5h-5zM327 595h5v5h-5zM1252 595h5v5h-5zM1272 595h5v5h-5zM1342 595h5v5h-5zM1432 595h5v5h-5zM1702 595h5v5h-5zM827 630h5v5h-5zM1237 630h5v5h-5zM252 635h5v5h-5zM1817 635h5v5h-5zM852 660h5v5h-5zM1702 660h5v5h-5zM482 670h5v5h-5zM852 670h5v5h-5zM1362 670h5v5h-5zM1452 670h5v5h-5zM1682 670h5v5h-5zM1702 670h5v5h-5zM1032 705h5v5h-5zM1237 705h5v5h-5zM1417 705h5v5h-5zM1507 705h5v5h-5zM252 710h5v5h-5zM1827 710h5v5h-5zM367 735h5v5h-5zM422 735h5v5h-5zM557 735h5v5h-5zM632 735h5v5h-5zM862 735h5v5h-5zM1252 735h5v5h-5zM1422 735h5v5h-5zM1432 735h5v5h-5zM1507 735h5v5h-5zM1622 735h5v5h-5zM1827 740h5v5h-5zM392 745h5v5h-5zM437 745h5v5h-5zM557 745h5v5h-5zM1802 745h5v5h-5zM337 770h5v5h-5zM407 775h5v5h-5zM242 780h5v5h-5zM542 810h5v5h-5zM637 810h5v5h-5zM1507 815h5v5h-5zM537 845h5v5h-5zM372 855h5v5h-5zM852 855h10v5h-10zM1047 855h5v5h-5zM1057 855h5v5h-5zM1067 855h5v5h-5zM1272 855h5v5h-5zM1342 855h5v5h-5zM1362 855h5v5h-5zM1432 855h5v5h-5zM1522 855h5v5h-5zM1542 855h5v5h-5zM1682 855h5v5h-5zM1702 855h5v5h-5z"/><path fill="#e4e4cc" d="M1667 215h5v5h-5zM837 225h5v5h-5zM1067 225h5v5h-5zM1682 225h5v5h-5zM642 255h5v5h-5zM1327 290h5v5h-5zM1417 290h5v5h-5zM1697 300h5v5h-5zM452 365h5v5h-5zM467 400h5v5h-5zM1702 400h5v5h-5zM472 410h5v5h-5zM1047 410h5v5h-5zM847 440h5v5h-5zM547 475h5v5h-5zM1237 475h5v5h-5zM1327 475h5v5h-5zM1507 475h5v5h-5zM407 485h5v5h-5zM457 485h5v5h-5zM1677 485h5v5h-5zM412 520h5v5h-5zM1042 520h5v5h-5zM542 550h5v5h-5zM637 550h5v5h-5zM837 550h5v5h-5zM827 555h5v5h-5zM1702 585h5v5h-5zM482 590h5v5h-5zM1352 595h5v5h-5zM847 625h5v5h-5zM422 670h5v5h-5zM1442 670h5v5h-5zM492 705h5v5h-5zM292 745h5v5h-5zM322 810h5v5h-5zM837 810h5v5h-5zM1262 855h5v5h-5z"/><path fill="#ded8c0" d="M1672 215h5v5h-5zM1237 255h5v5h-5zM1667 290h5v5h-5zM1507 330h5v5h-5zM1697 330h5v5h-5zM1667 335h5v5h-5zM477 405h5v5h-5zM827 405h5v5h-5zM552 410h5v5h-5zM397 440h5v5h-5zM417 440h5v5h-5zM1507 440h5v5h-5zM467 475h5v5h-5zM477 480h5v5h-5zM1327 515h5v5h-5zM1417 515h5v5h-5zM292 595h5v5h-5zM557 595h5v5h-5zM1677 595h5v5h-5zM362 625h5v5h-5zM1597 630h5v5h-5zM557 670h5v5h-5zM1237 700h5v5h-5zM487 775h5v5h-5zM1327 775h5v5h-5zM412 780h5v5h-5zM632 780h5v5h-5zM1442 850h5v5h-5z"/><path fill="#d8decc" d="M1677 215h5v5h-5zM1442 290h5v5h-5zM1532 290h5v5h-5zM1427 295h5v5h-5zM1827 295h5v5h-5zM282 300h5v5h-5zM842 365h5v5h-5zM862 365h5v5h-5zM1037 365h5v5h-5zM1422 365h5v5h-5zM387 400h5v5h-5zM1262 400h5v5h-5zM487 445h5v5h-5zM1042 445h5v5h-5zM1827 450h5v5h-5zM1442 475h5v5h-5zM1517 480h5v5h-5zM407 515h5v5h-5zM472 515h5v5h-5zM297 550h5v5h-5zM842 550h5v5h-5zM402 585h5v5h-5zM1657 585h5v5h-5zM467 595h5v5h-5zM1672 595h5v5h-5zM1632 625h5v5h-5zM1337 630h5v5h-5zM327 660h5v5h-5zM382 660h5v5h-5zM487 660h5v5h-5zM622 660h5v5h-5zM1442 660h5v5h-5zM1657 660h5v5h-5zM397 700h5v5h-5zM362 735h5v5h-5zM402 735h5v5h-5zM432 735h5v5h-5zM1262 735h5v5h-5zM282 745h5v5h-5zM367 745h5v5h-5zM1662 745h5v5h-5zM1337 775h5v5h-5zM1447 780h5v5h-5zM297 810h5v5h-5zM1242 810h5v5h-5zM1352 845h5v5h-5z"/><path fill="#f0e4cc" d="M1697 215h5v5h-5zM452 255h5v5h-5zM1597 370h5v5h-5zM1667 555h5v5h-5zM1667 815h5v5h-5z"/><path fill="#c6c6c0" d="M1812 215h5v5h-5zM297 220h5v5h-5zM1432 255h5v5h-5zM1522 260h5v5h-5zM1642 290h5v5h-5zM1827 300h5v5h-5zM1267 330h5v5h-5zM1332 330h5v5h-5zM332 400h5v5h-5zM362 440h5v5h-5zM487 440h5v5h-5zM337 445h5v5h-5zM1657 445h5v5h-5zM1812 445h5v5h-5zM862 480h5v5h-5zM1702 480h5v5h-5zM1817 590h5v5h-5zM477 595h5v5h-5zM472 625h5v5h-5zM1542 625h5v5h-5zM1267 630h5v5h-5zM1357 630h5v5h-5zM1707 630h5v5h-5zM392 700h5v5h-5zM852 700h5v5h-5zM1452 705h5v5h-5zM1807 735h5v5h-5zM1062 740h5v5h-5zM862 775h5v5h-5zM1447 775h5v5h-5zM1617 775h5v5h-5zM627 855h5v5h-5z"/><path fill="#d8d2c6" d="M1837 215h5v5h-5zM1057 220h5v5h-5zM1442 220h5v5h-5zM392 225h5v5h-5zM627 290h5v5h-5zM1662 290h5v5h-5zM397 325h5v5h-5zM1417 330h5v5h-5zM1342 335h5v5h-5zM1522 335h5v5h-5zM1252 365h5v5h-5zM1342 365h5v5h-5zM1602 400h5v5h-5zM1057 405h5v5h-5zM1532 405h5v5h-5zM282 410h5v5h-5zM382 440h5v5h-5zM852 445h5v5h-5zM1837 475h5v5h-5zM1607 510h5v5h-5zM837 515h5v5h-5zM837 520h5v5h-5zM1692 520h5v5h-5zM552 550h5v5h-5zM1442 590h5v5h-5zM1632 595h5v5h-5zM1602 660h5v5h-5zM642 665h5v5h-5zM827 665h5v5h-5zM852 665h5v5h-5zM1352 665h5v5h-5zM1327 700h5v5h-5zM392 705h5v5h-5zM1442 705h5v5h-5zM557 810h5v5h-5zM1252 810h5v5h-5zM1452 810h5v5h-5zM1337 815h5v5h-5zM1707 845h5v5h-5zM642 850h5v5h-5zM852 850h5v5h-5zM1247 850h5v5h-5zM1532 850h5v5h-5z"/><path fill="#eaf6d8" d="M1857 215h5v5h-5zM1852 405h5v5h-5z"/><path fill="#fcf0d8" d="M1872 215h10v5h-10zM1437 255h5v5h-5zM1872 265h10v5h-10zM377 660h5v5h-5zM1872 660h10v5h-10z"/><path fill="#e4ded2" d="M242 220h5v5h-5zM387 225h5v5h-5zM1047 225h5v5h-5zM1362 225h5v5h-5zM1442 225h5v5h-5zM1357 255h5v5h-5zM1837 255h5v5h-5zM242 260h5v5h-5zM247 265h5v5h-5zM1812 265h5v5h-5zM1032 290h5v5h-5zM1507 290h5v5h-5zM242 295h5v5h-5zM422 300h5v5h-5zM252 325h5v5h-5zM1647 325h5v5h-5zM857 335h5v5h-5zM1427 335h5v5h-5zM342 400h5v5h-5zM1532 410h5v5h-5zM642 440h5v5h-5zM247 450h5v5h-5zM457 475h5v5h-5zM1507 480h5v5h-5zM1672 510h5v5h-5zM242 520h5v5h-5zM862 520h5v5h-5zM1362 520h5v5h-5zM1237 555h5v5h-5zM1327 555h5v5h-5zM1417 555h5v5h-5zM1812 585h5v5h-5zM242 590h5v5h-5zM1522 595h5v5h-5zM1832 595h5v5h-5zM1062 625h5v5h-5zM372 660h5v5h-5zM1067 670h5v5h-5zM1252 670h5v5h-5zM1342 670h5v5h-5zM1352 670h5v5h-5zM1532 670h5v5h-5zM1542 670h5v5h-5zM247 695h5v5h-5zM1062 700h5v5h-5zM1237 740h5v5h-5zM1417 740h5v5h-5zM1507 740h5v5h-5zM397 745h5v5h-5zM1607 745h5v5h-5zM247 770h5v5h-5zM1662 770h5v5h-5zM1672 770h5v5h-5zM242 775h5v5h-5zM492 780h5v5h-5zM857 780h10v5h-10zM242 815h5v5h-5zM1417 815h5v5h-5zM1452 855h5v5h-5z"/><path fill="#fcfcfc" d="M247 220h5v5h-5zM247 255h5v5h-5zM247 405h5v5h-5zM247 515h5v5h-5zM247 700h5v5h-5z"/><path fill="#e4dede" d="M252 220h5v5h-5zM247 290h5v5h-5zM247 410h5v5h-5zM252 480h5v5h-5zM247 735h5v5h-5zM247 780h5v5h-5z"/><path fill="#c6c0ae" d="M282 220h5v5h-5zM1512 220h5v5h-5zM1682 255h5v5h-5zM1252 330h5v5h-5zM322 335h5v5h-5zM1707 365h5v5h-5zM1037 370h5v5h-5zM1512 405h5v5h-5zM322 440h5v5h-5zM327 445h5v5h-5zM482 475h5v5h-5zM417 515h5v5h-5zM372 520h5v5h-5zM417 520h5v5h-5zM552 520h5v5h-5zM1422 555h5v5h-5zM282 590h5v5h-5zM442 590h5v5h-5zM1037 590h5v5h-5zM622 630h5v5h-5zM1692 665h5v5h-5zM427 700h5v5h-5zM412 740h5v5h-5zM457 740h5v5h-5zM1512 740h5v5h-5zM1242 815h5v5h-5zM1357 850h5v5h-5zM1692 850h5v5h-5z"/><path fill="#c6baa2" d="M287 220h5v5h-5zM357 330h5v5h-5zM287 405h5v5h-5zM1602 405h5v5h-5zM342 440h5v5h-5zM462 515h5v5h-5zM1677 550h5v5h-5zM1602 590h5v5h-5zM1602 665h5v5h-5zM1602 850h5v5h-5z"/><path fill="#aeb4a8" d="M292 220h5v5h-5zM1657 255h5v5h-5zM1807 365h5v5h-5zM327 440h5v5h-5zM1662 445h5v5h-5zM1642 630h5v5h-5zM437 665h5v5h-5zM532 815h5v5h-5z"/><path fill="#c0c0a8" d="M322 220h5v5h-5zM1657 260h5v5h-5zM1512 295h5v5h-5zM412 365h5v5h-5zM1692 365h5v5h-5zM362 515h5v5h-5zM832 555h5v5h-5zM1272 555h5v5h-5zM1647 555h5v5h-5zM1622 625h5v5h-5zM437 740h5v5h-5zM1272 775h5v5h-5zM1632 815h5v5h-5z"/><path fill="#c0c0b4" d="M327 220h5v5h-5zM1642 220h5v5h-5zM552 255h5v5h-5zM632 255h5v5h-5zM1662 255h5v5h-5zM407 295h5v5h-5zM1252 295h5v5h-5zM332 335h5v5h-5zM1692 335h5v5h-5zM857 405h5v5h-5zM1422 405h5v5h-5zM492 480h5v5h-5zM1067 515h5v5h-5zM637 520h5v5h-5zM1687 520h5v5h-5zM427 550h5v5h-5zM1617 550h5v5h-5zM1697 550h5v5h-5zM1447 555h5v5h-5zM1242 590h5v5h-5zM1332 590h5v5h-5zM1357 590h5v5h-5zM1037 665h5v5h-5zM462 700h5v5h-5zM1832 700h5v5h-5zM482 705h5v5h-5zM447 735h5v5h-5zM1642 735h5v5h-5zM1672 735h5v5h-5zM1242 740h5v5h-5zM1332 740h5v5h-5zM1432 740h5v5h-5zM1537 740h5v5h-5zM1662 780h5v5h-5zM1687 810h5v5h-5zM1537 850h5v5h-5z"/><path fill="#968a90" d="M332 220h5v5h-5zM352 815h5v5h-5z"/><path fill="#bac0b4" d="M337 220h5v5h-5zM352 260h5v5h-5zM422 295h5v5h-5zM1047 295h5v5h-5zM1422 295h5v5h-5zM1447 295h5v5h-5zM1342 330h5v5h-5zM1607 335h5v5h-5zM1642 365h5v5h-5zM287 445h5v5h-5zM1607 445h5v5h-5zM407 480h5v5h-5zM1542 555h5v5h-5zM1702 625h5v5h-5zM1672 630h5v5h-5zM547 705h5v5h-5zM337 775h5v5h-5zM1702 775h5v5h-5zM1047 815h5v5h-5zM1542 815h5v5h-5zM1272 850h5v5h-5zM377 855h5v5h-5z"/><path fill="#baae96" d="M342 220h5v5h-5zM457 295h5v5h-5zM457 370h5v5h-5zM402 405h5v5h-5zM392 480h5v5h-5zM357 590h5v5h-5zM417 590h5v5h-5zM447 705h5v5h-5zM327 815h5v5h-5zM327 850h5v5h-5z"/><path fill="#babab4" d="M347 220h5v5h-5zM532 255h5v5h-5zM457 260h5v5h-5zM1692 260h5v5h-5zM1342 295h5v5h-5zM1067 330h5v5h-5zM1362 330h5v5h-5zM1452 330h5v5h-5zM1827 335h5v5h-5zM292 370h5v5h-5zM437 370h5v5h-5zM1532 440h5v5h-5zM1452 480h5v5h-5zM1542 515h5v5h-5zM1657 515h5v5h-5zM292 550h5v5h-5zM1432 555h5v5h-5zM1832 630h5v5h-5zM1252 665h5v5h-5zM1817 670h5v5h-5zM1057 700h5v5h-5zM1652 700h5v5h-5zM1697 705h5v5h-5zM1432 775h5v5h-5zM1342 815h5v5h-5z"/><path fill="#c0c6a8" d="M352 220h5v5h-5zM282 365h5v5h-5zM1652 850h5v5h-5z"/><path fill="#909084" d="M357 220h5v5h-5z"/><path fill="#a8b49c" d="M362 220h5v5h-5zM362 370h5v5h-5zM417 370h5v5h-5z"/><path fill="#b4a896" d="M367 220h5v5h-5zM287 440h5v5h-5zM1677 515h5v5h-5zM552 705h5v5h-5z"/><path fill="#909c9c" d="M372 220h5v5h-5zM1607 220h5v5h-5zM622 405h5v5h-5z"/><path fill="#c0c0a2" d="M377 220h5v5h-5zM437 405h5v5h-5zM402 445h5v5h-5zM382 515h5v5h-5zM337 740h5v5h-5z"/><path fill="#a8aeae" d="M382 220h5v5h-5z"/><path fill="#c0baa2" d="M387 220h5v5h-5zM282 255h5v5h-5zM1647 295h5v5h-5zM542 330h5v5h-5zM457 365h5v5h-5zM1657 625h5v5h-5z"/><path fill="#a28a78" d="M392 220h5v5h-5z"/><path fill="#ccd2c6" d="M397 220h5v5h-5zM1642 225h5v5h-5zM562 330h5v5h-5zM367 365h5v5h-5zM382 365h5v5h-5zM1607 400h5v5h-5zM542 410h5v5h-5zM832 440h5v5h-5zM862 445h5v5h-5zM1682 445h5v5h-5zM387 475h5v5h-5zM832 515h5v5h-5zM1352 515h5v5h-5zM1607 585h5v5h-5zM362 595h5v5h-5zM1512 625h5v5h-5zM1682 630h5v5h-5zM1042 665h5v5h-5zM357 670h5v5h-5zM637 700h5v5h-5zM417 735h5v5h-5zM457 735h5v5h-5zM1262 740h5v5h-5zM1657 740h5v5h-5zM482 780h5v5h-5zM1427 850h5v5h-5zM287 855h5v5h-5z"/><path fill="#b4b4a2" d="M402 220h5v5h-5zM287 295h5v5h-5zM1677 330h5v5h-5zM282 370h5v5h-5zM1622 520h5v5h-5zM357 555h5v5h-5zM327 625h5v5h-5z"/><path fill="#aebaae" d="M407 220h5v5h-5zM1642 255h5v5h-5zM467 260h5v5h-5zM1697 440h5v5h-5zM477 445h5v5h-5zM337 555h5v5h-5zM292 590h5v5h-5zM1252 590h5v5h-5z"/><path fill="#d8ccb4" d="M412 220h5v5h-5zM1612 260h5v5h-5zM322 295h5v5h-5zM1617 295h5v5h-5zM322 370h5v5h-5zM827 515h5v5h-5zM487 625h5v5h-5z"/><path fill="#aeb4b4" d="M417 220h5v5h-5zM422 370h5v5h-5zM392 515h5v5h-5zM362 780h5v5h-5z"/><path fill="#bab49c" d="M422 220h5v5h-5zM327 405h5v5h-5zM557 445h5v5h-5zM1687 555h5v5h-5zM487 705h5v5h-5zM372 740h5v5h-5zM347 815h5v5h-5z"/><path fill="#969696" d="M427 220h5v5h-5z"/><path fill="#fcf0d2" d="M527 220h5v5h-5zM527 295h5v5h-5zM527 330h5v5h-5zM527 405h5v5h-5zM527 480h5v5h-5zM527 515h5v5h-5zM527 590h5v5h-5zM527 665h5v5h-5zM527 740h5v5h-5zM527 775h5v5h-5zM527 850h5v5h-5z"/><path fill="#c6d2d2" d="M532 220h5v5h-5z"/><path fill="#9c9c84" d="M537 220h5v5h-5zM287 700h5v5h-5z"/><path fill="#a8ae9c" d="M542 220h5v5h-5zM1642 440h5v5h-5z"/><path fill="#9c9690" d="M547 220h5v5h-5zM1672 330h5v5h-5zM467 480h5v5h-5z"/><path fill="#9c9678" d="M552 220h5v5h-5z"/><path fill="#a2a884" d="M557 220h5v5h-5zM552 330h5v5h-5z"/><path fill="#c6cccc" d="M562 220h5v5h-5zM842 480h5v5h-5zM622 735h5v5h-5z"/><path fill="#fcf6d8" d="M617 220h5v5h-5zM1597 220h5v5h-5zM527 255h5v5h-5zM617 255h5v5h-5zM617 295h5v5h-5zM617 330h5v5h-5zM527 370h5v5h-5zM617 370h5v5h-5zM617 405h5v5h-5zM527 440h5v5h-5zM617 440h5v5h-5zM617 480h5v5h-5zM617 515h5v5h-5zM527 555h5v5h-5zM617 555h5v5h-5zM617 590h5v5h-5zM472 595h5v5h-5zM527 625h5v5h-5zM617 625h5v5h-5zM617 665h5v5h-5zM527 700h5v5h-5zM617 700h5v5h-5zM617 740h5v5h-5zM617 775h5v5h-5zM527 815h5v5h-5zM617 815h5v5h-5zM617 850h5v5h-5z"/><path fill="#9ca290" d="M622 220h5v5h-5zM547 740h5v5h-5zM367 850h5v5h-5z"/><path fill="#909672" d="M627 220h5v5h-5z"/><path fill="#968a8a" d="M632 220h5v5h-5zM552 405h5v5h-5z"/><path fill="#96ae90" d="M637 220h5v5h-5z"/><path fill="#d2d2c6" d="M642 220h5v5h-5zM832 255h5v5h-5zM842 255h5v5h-5zM862 255h5v5h-5zM347 260h5v5h-5zM1657 295h5v5h-5zM852 330h5v5h-5zM547 335h5v5h-5zM1352 365h5v5h-5zM1442 365h5v5h-5zM1427 370h5v5h-5zM1802 370h5v5h-5zM1827 370h5v5h-5zM1662 400h5v5h-5zM1337 405h5v5h-5zM462 410h5v5h-5zM1327 440h5v5h-5zM537 475h5v5h-5zM1702 475h5v5h-5zM332 510h5v5h-5zM1632 515h5v5h-5zM487 520h5v5h-5zM1832 520h5v5h-5zM422 550h5v5h-5zM1252 550h5v5h-5zM1442 550h5v5h-5zM297 555h5v5h-5zM1517 555h5v5h-5zM642 590h5v5h-5zM1247 590h5v5h-5zM1337 590h5v5h-5zM1532 590h5v5h-5zM1802 595h5v5h-5zM487 630h5v5h-5zM852 630h5v5h-5zM1512 630h5v5h-5zM1827 635h5v5h-5zM1607 660h5v5h-5zM1262 665h5v5h-5zM1427 665h5v5h-5zM392 670h5v5h-5zM387 705h5v5h-5zM347 735h5v5h-5zM1532 740h5v5h-5zM1647 780h5v5h-5zM1352 810h5v5h-5zM1442 810h5v5h-5zM1532 810h5v5h-5zM1837 810h5v5h-5zM1247 815h5v5h-5zM1802 815h5v5h-5zM1712 845h5v5h-5zM1517 850h5v5h-5zM1652 855h5v5h-5zM1802 855h5v5h-5z"/><path fill="#ded2c6" d="M827 220h5v5h-5zM537 225h5v5h-5zM1057 260h5v5h-5zM1612 335h5v5h-5zM352 375h5v5h-5zM1647 400h5v5h-5zM1657 410h5v5h-5zM1262 590h5v5h-5zM1032 625h5v5h-5zM457 660h5v5h-5zM552 670h5v5h-5zM1032 700h5v5h-5zM1042 775h5v5h-5zM1342 780h5v5h-5zM1827 815h5v5h-5zM1647 845h5v5h-5zM367 855h5v5h-5z"/><path fill="#c6ccba" d="M832 220h5v5h-5zM1707 220h5v5h-5zM627 225h5v5h-5zM1067 260h5v5h-5zM622 290h5v5h-5zM352 335h5v5h-5zM362 335h5v5h-5zM422 335h5v5h-5zM1652 365h5v5h-5zM1657 405h5v5h-5zM1332 515h5v5h-5zM1537 515h5v5h-5zM392 520h5v5h-5zM1672 520h5v5h-5zM1802 520h5v5h-5zM457 550h5v5h-5zM297 590h5v5h-5zM1362 625h5v5h-5zM1812 630h5v5h-5zM1632 665h5v5h-5zM472 700h5v5h-5zM1332 700h5v5h-5zM337 705h5v5h-5zM1252 705h5v5h-5zM1657 705h5v5h-5zM1647 740h5v5h-5zM1702 740h5v5h-5zM417 780h5v5h-5zM437 780h5v5h-5zM1657 810h5v5h-5zM1702 810h5v5h-5zM357 855h5v5h-5z"/><path fill="#c0c0c6" d="M842 220h5v5h-5zM862 515h5v5h-5z"/><path fill="#c6c0b4" d="M857 220h5v5h-5zM1537 220h5v5h-5zM402 260h5v5h-5zM1812 260h5v5h-5zM1332 295h5v5h-5zM1452 295h5v5h-5zM532 335h5v5h-5zM627 365h5v5h-5zM1057 370h5v5h-5zM1532 370h5v5h-5zM487 405h5v5h-5zM1617 405h5v5h-5zM1662 475h5v5h-5zM487 480h5v5h-5zM832 480h5v5h-5zM1662 520h5v5h-5zM1332 555h5v5h-5zM862 590h5v5h-5zM357 625h5v5h-5zM552 625h5v5h-5zM332 630h5v5h-5zM407 630h5v5h-5zM377 665h5v5h-5zM1242 665h5v5h-5zM1037 740h5v5h-5zM1422 740h5v5h-5zM472 775h5v5h-5zM1697 780h5v5h-5zM547 810h5v5h-5zM1617 810h5v5h-5zM832 815h5v5h-5zM1422 815h5v5h-5zM1267 850h5v5h-5zM1617 850h5v5h-5z"/><path fill="#c0ccba" d="M862 220h5v5h-5zM417 255h5v5h-5zM1622 255h5v5h-5zM437 260h5v5h-5zM347 370h5v5h-5zM437 520h5v5h-5zM1712 520h5v5h-5zM482 550h5v5h-5zM1662 595h5v5h-5zM467 705h5v5h-5zM1627 705h5v5h-5zM1682 775h5v5h-5zM862 815h5v5h-5zM1447 850h5v5h-5z"/><path fill="#c6c0ba" d="M1037 220h5v5h-5zM1807 290h5v5h-5zM1062 295h5v5h-5zM1242 295h5v5h-5zM1632 335h5v5h-5zM1677 365h5v5h-5zM1242 370h5v5h-5zM1357 405h5v5h-5zM447 445h5v5h-5zM1342 445h5v5h-5zM1632 480h5v5h-5zM457 515h5v5h-5zM402 520h5v5h-5zM1812 520h5v5h-5zM1652 550h5v5h-5zM852 555h5v5h-5zM1597 590h5v5h-5zM832 665h5v5h-5zM1062 665h5v5h-5zM1537 705h5v5h-5zM1827 705h5v5h-5zM1812 740h5v5h-5z"/><path fill="#c6d2c6" d="M1042 220h5v5h-5zM377 260h5v5h-5zM1262 330h5v5h-5zM477 585h5v5h-5zM297 740h5v5h-5zM1607 845h5v5h-5z"/><path fill="#bab4ae" d="M1047 220h5v5h-5zM1362 220h5v5h-5zM332 260h5v5h-5zM537 260h5v5h-5zM1522 370h5v5h-5zM1812 405h5v5h-5zM1642 445h5v5h-5zM287 480h5v5h-5zM1697 480h5v5h-5zM1812 480h5v5h-5zM1652 515h5v5h-5zM1832 515h5v5h-5zM1652 630h5v5h-5zM287 735h5v5h-5zM1817 855h5v5h-5z"/><path fill="#ccc0ba" d="M1062 220h5v5h-5zM1422 220h5v5h-5zM1447 220h5v5h-5zM1667 365h5v5h-5zM1432 445h5v5h-5zM452 515h5v5h-5zM627 550h5v5h-5zM1062 590h5v5h-5zM367 625h5v5h-5zM1537 665h5v5h-5zM1442 815h5v5h-5zM1687 850h5v5h-5z"/><path fill="#babaae" d="M1067 220h5v5h-5zM1272 220h5v5h-5zM1642 330h5v5h-5zM537 365h5v5h-5zM377 370h5v5h-5zM1272 405h5v5h-5zM337 440h5v5h-5zM1687 440h5v5h-5zM422 445h5v5h-5zM1047 555h5v5h-5zM1807 560h5v5h-5zM1362 590h5v5h-5zM1697 630h5v5h-5zM327 700h5v5h-5zM457 700h5v5h-5zM1262 700h5v5h-5zM487 740h5v5h-5zM1542 775h5v5h-5zM1522 815h5v5h-5zM1067 850h5v5h-5z"/><path fill="#dedec6" d="M1237 220h5v5h-5zM1327 220h5v5h-5zM1672 225h5v5h-5zM1652 300h5v5h-5zM1067 335h5v5h-5zM1237 365h5v5h-5zM1417 365h5v5h-5zM1657 400h5v5h-5zM327 410h5v5h-5zM427 410h5v5h-5zM452 410h5v5h-5zM1647 410h5v5h-5zM472 445h5v5h-5zM1597 445h5v5h-5zM827 480h5v5h-5zM292 485h5v5h-5zM1327 590h5v5h-5zM442 595h5v5h-5zM457 595h5v5h-5zM632 595h5v5h-5zM1427 630h5v5h-5zM292 660h5v5h-5zM1032 665h5v5h-5zM1327 665h5v5h-5zM1507 665h5v5h-5zM432 670h5v5h-5zM1442 735h5v5h-5zM342 770h5v5h-5zM442 775h5v5h-5zM1057 780h5v5h-5zM372 810h5v5h-5zM1657 855h5v5h-5z"/><path fill="#c6bab4" d="M1242 220h5v5h-5zM1047 330h5v5h-5zM1652 335h5v5h-5zM1687 405h5v5h-5zM1697 445h5v5h-5zM1242 480h5v5h-5zM1647 550h5v5h-5zM1262 815h5v5h-5z"/><path fill="#d2ccc6" d="M1247 220h5v5h-5zM1427 220h5v5h-5zM837 330h5v5h-5zM1707 335h5v5h-5zM417 365h5v5h-5zM1332 440h5v5h-5zM392 550h5v5h-5zM1682 550h5v5h-5zM1042 590h5v5h-5zM832 625h5v5h-5zM862 625h5v5h-5zM1067 625h5v5h-5zM1422 625h5v5h-5zM352 810h5v5h-5zM1057 810h5v5h-5z"/><path fill="#b4c0a8" d="M1252 220h5v5h-5zM352 480h5v5h-5zM432 520h5v5h-5z"/><path fill="#d8dec6" d="M1262 220h5v5h-5zM1042 260h5v5h-5zM1517 260h5v5h-5zM1237 330h5v5h-5zM622 335h5v5h-5zM1682 335h5v5h-5zM1522 365h5v5h-5zM362 475h5v5h-5zM1247 515h5v5h-5zM1242 550h5v5h-5zM357 595h5v5h-5zM1632 700h5v5h-5zM1532 735h5v5h-5zM1042 740h5v5h-5zM1247 740h5v5h-5zM1247 775h5v5h-5zM1517 775h5v5h-5zM327 780h5v5h-5zM467 780h5v5h-5z"/><path fill="#c0c6ba" d="M1267 220h5v5h-5zM547 260h5v5h-5zM337 295h5v5h-5zM1272 295h5v5h-5zM437 365h5v5h-5zM1617 365h5v5h-5zM1447 370h5v5h-5zM1537 370h5v5h-5zM1062 480h5v5h-5zM287 520h5v5h-5zM1607 520h5v5h-5zM1522 625h5v5h-5zM1702 665h5v5h-5zM1697 810h5v5h-5zM1062 815h5v5h-5zM1692 815h5v5h-5zM1807 820h5v5h-5z"/><path fill="#ccc0c0" d="M1332 220h5v5h-5zM327 260h5v5h-5zM1047 630h5v5h-5zM1342 705h5v5h-5zM1442 775h5v5h-5zM1352 815h5v5h-5z"/><path fill="#d2d2c0" d="M1337 220h5v5h-5zM1517 220h5v5h-5zM542 255h5v5h-5zM1032 255h5v5h-5zM1332 255h5v5h-5zM1677 290h5v5h-5zM1817 300h5v5h-5zM392 335h5v5h-5zM632 335h5v5h-5zM1252 335h5v5h-5zM1622 335h5v5h-5zM1677 335h5v5h-5zM1697 335h5v5h-5zM1517 370h5v5h-5zM1642 400h5v5h-5zM1262 405h5v5h-5zM352 410h5v5h-5zM457 410h5v5h-5zM1607 410h5v5h-5zM542 440h5v5h-5zM342 475h5v5h-5zM1607 475h5v5h-5zM1442 480h5v5h-5zM412 515h5v5h-5zM852 515h5v5h-5zM327 520h5v5h-5zM827 550h5v5h-5zM322 590h5v5h-5zM1352 590h5v5h-5zM1517 590h5v5h-5zM837 630h5v5h-5zM862 630h5v5h-5zM1332 630h5v5h-5zM477 660h5v5h-5zM1617 670h5v5h-5zM542 700h5v5h-5zM1037 705h5v5h-5zM1702 735h5v5h-5zM1352 740h5v5h-5zM557 780h5v5h-5zM1657 780h5v5h-5zM1827 820h5v5h-5zM1337 850h5v5h-5zM1617 855h5v5h-5z"/><path fill="#bab4a8" d="M1342 220h5v5h-5zM547 255h5v5h-5zM327 370h5v5h-5zM452 370h5v5h-5zM362 405h5v5h-5zM327 515h5v5h-5zM422 520h5v5h-5zM347 590h5v5h-5zM1817 595h5v5h-5zM1607 630h5v5h-5zM1817 665h5v5h-5zM1657 700h5v5h-5zM1697 700h5v5h-5zM467 740h5v5h-5zM532 810h5v5h-5zM1687 815h5v5h-5zM1832 815h5v5h-5z"/><path fill="#ded2cc" d="M1352 220h5v5h-5zM1032 330h5v5h-5zM1817 515h5v5h-5zM1047 550h5v5h-5zM1687 845h5v5h-5z"/><path fill="#c6bac0" d="M1357 220h5v5h-5zM1537 295h5v5h-5zM1827 745h5v5h-5z"/><path fill="#e4decc" d="M1417 220h5v5h-5zM1507 220h5v5h-5zM1352 225h5v5h-5zM1622 225h5v5h-5zM322 255h5v5h-5zM547 290h5v5h-5zM1237 290h5v5h-5zM1697 295h5v5h-5zM332 300h5v5h-5zM1702 300h5v5h-5zM532 325h5v5h-5zM412 335h5v5h-5zM862 335h5v5h-5zM1247 335h5v5h-5zM1332 335h5v5h-5zM402 365h5v5h-5zM837 365h5v5h-5zM827 370h5v5h-5zM1237 370h5v5h-5zM1507 370h5v5h-5zM327 400h5v5h-5zM1417 405h5v5h-5zM467 410h5v5h-5zM492 410h5v5h-5zM837 410h5v5h-5zM1707 410h5v5h-5zM1447 440h5v5h-5zM1692 440h5v5h-5zM322 475h5v5h-5zM447 475h5v5h-5zM1417 475h5v5h-5zM242 480h5v5h-5zM352 485h5v5h-5zM372 485h5v5h-5zM532 485h5v5h-5zM557 485h5v5h-5zM1607 485h5v5h-5zM1802 485h5v5h-5zM1837 510h5v5h-5zM407 520h5v5h-5zM852 520h10v5h-10zM1037 520h5v5h-5zM1067 520h5v5h-5zM1337 520h5v5h-5zM367 550h5v5h-5zM282 585h5v5h-5zM482 585h5v5h-5zM1507 590h5v5h-5zM1452 595h5v5h-5zM242 625h5v5h-5zM642 625h5v5h-5zM857 625h5v5h-5zM1447 625h5v5h-5zM282 660h5v5h-5zM427 660h5v5h-5zM462 660h5v5h-5zM482 660h5v5h-5zM1652 660h5v5h-5zM347 670h5v5h-5zM1647 670h5v5h-5zM1707 670h5v5h-5zM1337 700h5v5h-5zM1427 700h5v5h-5zM1812 710h5v5h-5zM322 735h5v5h-5zM462 735h5v5h-5zM1237 735h5v5h-5zM1327 740h5v5h-5zM477 745h5v5h-5zM532 745h5v5h-5zM1632 745h5v5h-5zM1677 745h5v5h-5zM532 770h5v5h-5zM1262 780h5v5h-5zM1337 780h5v5h-5zM1427 780h5v5h-5zM1542 780h5v5h-5zM1597 780h5v5h-5zM1032 815h5v5h-5zM1327 815h5v5h-5zM1032 850h5v5h-5zM1507 850h5v5h-5zM362 855h5v5h-5zM837 855h5v5h-5zM1602 855h5v5h-5zM1707 855h5v5h-5z"/><path fill="#c0aeb4" d="M1432 220h5v5h-5zM1532 255h5v5h-5z"/><path fill="#c0b4b4" d="M1452 220h5v5h-5zM1522 295h5v5h-5zM1817 405h5v5h-5zM632 440h5v5h-5zM1047 590h5v5h-5zM1272 665h5v5h-5zM1332 665h5v5h-5zM362 700h5v5h-5zM1807 810h5v5h-5z"/><path fill="#aeaea8" d="M1522 220h5v5h-5zM1807 225h5v5h-5zM457 405h5v5h-5zM417 555h5v5h-5zM1677 775h5v5h-5z"/><path fill="#c6aeb4" d="M1542 220h5v5h-5zM287 290h5v5h-5z"/><path fill="#c0aea2" d="M1602 220h5v5h-5z"/><path fill="#ccc6b4" d="M1612 220h5v5h-5zM322 330h5v5h-5zM857 330h5v5h-5zM1667 330h5v5h-5zM552 335h5v5h-5zM1657 335h5v5h-5zM392 445h5v5h-5zM352 475h5v5h-5zM1682 515h5v5h-5zM1652 520h5v5h-5zM1677 520h5v5h-5zM1037 555h5v5h-5zM1597 555h5v5h-5zM407 590h5v5h-5zM1647 590h5v5h-5zM352 630h5v5h-5zM362 670h5v5h-5zM827 700h5v5h-5zM1707 735h5v5h-5zM1632 740h5v5h-5zM1692 740h5v5h-5zM1037 775h5v5h-5zM282 810h5v5h-5zM282 850h5v5h-5zM1642 850h5v5h-5zM1642 855h5v5h-5z"/><path fill="#e4d8ba" d="M1617 220h5v5h-5z"/><path fill="#969090" d="M1622 220h5v5h-5zM1807 590h5v5h-5zM537 775h5v5h-5z"/><path fill="#a8969c" d="M1627 220h5v5h-5z"/><path fill="#d8ded2" d="M1632 220h5v5h-5zM842 335h5v5h-5zM562 365h5v5h-5zM462 370h5v5h-5zM1627 410h5v5h-5zM1662 485h5v5h-5zM397 550h5v5h-5zM1832 550h5v5h-5zM407 665h5v5h-5zM1357 780h5v5h-5zM1832 780h5v5h-5z"/><path fill="#ccc0a2" d="M1647 220h5v5h-5z"/><path fill="#bac0c0" d="M1652 220h5v5h-5zM1442 255h5v5h-5zM842 405h5v5h-5zM1442 440h5v5h-5zM1447 480h5v5h-5zM1627 515h5v5h-5zM862 665h5v5h-5zM1672 665h5v5h-5zM1442 700h5v5h-5zM1672 705h5v5h-5z"/><path fill="#d8ccc6" d="M1657 220h5v5h-5zM442 260h5v5h-5zM1642 485h5v5h-5zM342 705h5v5h-5zM1512 705h5v5h-5z"/><path fill="#ccccb4" d="M1667 220h5v5h-5zM622 260h5v5h-5zM457 290h5v5h-5zM1607 290h5v5h-5zM357 295h5v5h-5zM1642 295h5v5h-5zM372 330h5v5h-5zM392 330h5v5h-5zM1672 400h5v5h-5zM462 405h5v5h-5zM1632 405h5v5h-5zM557 440h5v5h-5zM1602 475h5v5h-5zM1687 475h5v5h-5zM1647 480h5v5h-5zM1617 515h5v5h-5zM432 555h5v5h-5zM837 590h5v5h-5zM287 660h5v5h-5zM557 700h5v5h-5zM1357 705h5v5h-5zM1542 705h5v5h-5zM1707 705h5v5h-5zM1537 775h5v5h-5zM1622 810h5v5h-5z"/><path fill="#a2a290" d="M1672 220h5v5h-5zM637 405h5v5h-5zM457 590h5v5h-5zM557 665h5v5h-5zM632 815h5v5h-5z"/><path fill="#baaea8" d="M1677 220h5v5h-5zM1647 365h5v5h-5zM1657 440h5v5h-5zM442 480h5v5h-5zM332 515h5v5h-5zM337 630h5v5h-5zM532 630h5v5h-5zM1652 740h5v5h-5z"/><path fill="#c0c6ae" d="M1682 220h5v5h-5zM322 225h5v5h-5zM327 330h5v5h-5zM1267 370h5v5h-5zM1542 370h5v5h-5zM342 520h5v5h-5zM1267 555h5v5h-5zM292 665h5v5h-5zM387 735h5v5h-5zM1332 815h5v5h-5z"/><path fill="#aea29c" d="M1687 220h5v5h-5zM557 370h5v5h-5z"/><path fill="#96a890" d="M1692 220h5v5h-5zM1812 700h5v5h-5z"/><path fill="#eae4cc" d="M1697 220h5v5h-5zM277 225h5v5h-5zM1612 225h5v5h-5zM847 255h5v5h-5zM427 290h5v5h-5zM327 365h5v5h-5zM342 410h5v5h-5zM447 410h5v5h-5zM1032 475h5v5h-5zM437 485h5v5h-5zM857 550h5v5h-5zM377 595h5v5h-5zM837 595h5v5h-5zM1697 595h5v5h-5zM1692 625h5v5h-5zM1327 630h5v5h-5zM412 660h5v5h-5zM1697 670h5v5h-5zM847 700h5v5h-5zM1692 700h5v5h-5zM337 735h5v5h-5zM427 735h5v5h-5zM1617 770h5v5h-5zM1642 770h5v5h-5zM477 780h5v5h-5zM337 855h5v5h-5zM1697 855h5v5h-5z"/><path fill="#c6aea8" d="M1702 220h5v5h-5z"/><path fill="#96969c" d="M1807 220h5v5h-5zM462 705h5v5h-5z"/><path fill="#aeb4a2" d="M1812 220h5v5h-5zM627 255h5v5h-5zM1702 295h5v5h-5zM1697 405h5v5h-5zM437 515h5v5h-5zM422 665h5v5h-5zM1812 850h5v5h-5z"/><path fill="#b4aeba" d="M1817 220h5v5h-5z"/><path fill="#eaeade" d="M1827 220h5v5h-5zM472 255h5v5h-5zM852 300h5v5h-5zM297 365h5v5h-5zM832 475h5v5h-5zM297 480h5v5h-5zM492 485h5v5h-5zM297 520h5v5h-5zM372 595h5v5h-5zM382 595h5v5h-5zM437 595h5v5h-5zM447 595h5v5h-5zM1827 665h5v5h-5zM332 670h5v5h-5zM497 705h5v5h-5zM327 745h5v5h-5zM1237 780h5v5h-5zM357 845h5v5h-5z"/><path fill="#aeaeae" d="M1832 220h5v5h-5zM392 255h5v5h-5zM1692 255h5v5h-5zM482 555h5v5h-5zM1617 815h5v5h-5zM1342 850h5v5h-5zM1712 850h5v5h-5z"/><path fill="#d8eac6" d="M1847 220h5v5h-5zM1852 265h5v5h-5zM1857 595h5v5h-5z"/><path fill="#deeacc" d="M1852 220h5v5h-5zM1847 485h5v5h-5zM1847 665h5v5h-5zM1857 735h5v5h-5z"/><path fill="#60a85a" d="M1857 220h5v5h-5zM1852 260h5v5h-5zM1857 590h5v5h-5z"/><path fill="#fc6660" d="M1872 220h5v5h-5zM1872 260h5v5h-5zM1872 370h5v5h-5zM1877 410h5v5h-5zM1877 515h5v5h-5zM1872 555h5v5h-5zM1872 590h5v5h-5zM1872 595h5v5h-5zM1872 630h5v5h-5zM1872 665h5v5h-5zM1872 740h5v5h-5zM1872 850h5v5h-5zM1877 855h5v5h-5z"/><path fill="#fc4842" d="M1877 220h5v5h-5zM1877 260h5v5h-5zM1877 405h5v5h-5zM1877 520h5v5h-5zM1877 665h5v5h-5z"/><path fill="#eae4d8" d="M242 225h5v5h-5zM622 225h5v5h-5zM1237 260h5v5h-5zM392 290h5v5h-5zM1362 290h5v5h-5zM1422 290h5v5h-5zM1452 290h5v5h-5zM542 300h5v5h-5zM1057 300h5v5h-5zM1352 300h5v5h-5zM282 325h5v5h-5zM1057 325h5v5h-5zM1352 325h5v5h-5zM1812 325h5v5h-5zM1837 330h5v5h-5zM322 365h5v5h-5zM347 365h5v5h-5zM1062 365h5v5h-5zM1267 365h5v5h-5zM1357 365h5v5h-5zM1802 405h5v5h-5zM242 410h5v5h-5zM1062 410h5v5h-5zM1422 410h5v5h-5zM1537 410h5v5h-5zM842 475h5v5h-5zM287 485h5v5h-5zM1057 485h5v5h-5zM1647 485h5v5h-5zM1057 510h5v5h-5zM1532 510h5v5h-5zM562 520h5v5h-5zM242 550h5v5h-5zM1062 550h5v5h-5zM1537 550h5v5h-5zM1807 585h5v5h-5zM387 595h5v5h-5zM832 595h5v5h-5zM1042 595h5v5h-5zM1427 595h5v5h-5zM1417 630h5v5h-5zM1507 630h5v5h-5zM352 660h5v5h-5zM1062 670h5v5h-5zM1422 670h5v5h-5zM242 735h5v5h-5zM842 735h5v5h-5zM1047 735h5v5h-5zM1332 735h5v5h-5zM542 745h5v5h-5zM287 770h5v5h-5zM357 770h5v5h-5zM1812 770h5v5h-5zM1837 775h5v5h-5zM1337 810h5v5h-5zM242 855h5v5h-5zM832 855h5v5h-5zM842 855h5v5h-5zM1332 855h5v5h-5zM1357 855h5v5h-5zM1422 855h5v5h-5z"/><path fill="#e4ded8" d="M247 225h5v5h-5zM1252 225h5v5h-5zM407 300h5v5h-5zM242 365h5v5h-5zM247 550h5v5h-5zM1047 595h5v5h-5zM1542 595h5v5h-5zM247 660h5v5h-5zM242 740h5v5h-5zM247 820h5v5h-5zM252 845h5v5h-5z"/><path fill="#d8d8c0" d="M287 225h10v5h-10zM422 225h5v5h-5zM1417 255h5v5h-5zM1507 255h5v5h-5zM1682 290h5v5h-5zM557 365h5v5h-5zM827 365h5v5h-5zM1707 400h5v5h-5zM352 445h5v5h-5zM1262 445h5v5h-5zM1352 445h5v5h-5zM452 475h5v5h-5zM1657 480h5v5h-5zM1032 515h5v5h-5zM557 550h5v5h-5zM1427 590h5v5h-5zM1262 630h5v5h-5zM362 660h5v5h-5zM1677 660h5v5h-5zM1442 665h5v5h-5zM1652 670h5v5h-5zM852 705h5v5h-5zM1597 705h5v5h-5zM357 775h5v5h-5zM1507 775h5v5h-5zM832 780h5v5h-5zM1627 810h5v5h-5zM1602 845h5v5h-5zM827 850h5v5h-5z"/><path fill="#d8e4d8" d="M337 225h5v5h-5zM642 370h5v5h-5z"/><path fill="#d8d2ba" d="M342 225h5v5h-5zM397 255h5v5h-5zM1512 260h5v5h-5zM1652 290h5v5h-5zM1262 295h5v5h-5zM1672 335h5v5h-5zM1697 365h5v5h-5zM367 370h5v5h-5zM532 400h5v5h-5zM392 440h5v5h-5zM407 445h5v5h-5zM837 445h5v5h-5zM1677 475h5v5h-5zM632 520h5v5h-5zM342 550h5v5h-5zM637 625h5v5h-5zM397 670h5v5h-5zM1632 670h5v5h-5zM487 700h5v5h-5zM407 740h5v5h-5z"/><path fill="#e4f0de" d="M347 225h5v5h-5zM642 445h5v5h-5z"/><path fill="#eae4d2" d="M352 225h5v5h-5zM362 225h5v5h-5zM832 225h5v5h-5zM857 225h5v5h-5zM1242 225h5v5h-5zM1337 225h5v5h-5zM1427 225h5v5h-5zM1807 265h5v5h-5zM557 290h5v5h-5zM842 290h5v5h-5zM862 290h5v5h-5zM1067 290h5v5h-5zM347 300h5v5h-5zM452 300h5v5h-5zM627 300h5v5h-5zM1647 300h5v5h-5zM357 325h5v5h-5zM847 330h5v5h-5zM432 365h5v5h-5zM847 365h5v5h-5zM857 365h5v5h-5zM1427 365h5v5h-5zM832 410h5v5h-5zM1042 410h5v5h-5zM1242 410h5v5h-5zM1337 410h5v5h-5zM1427 410h5v5h-5zM1452 410h5v5h-5zM242 445h5v5h-5zM382 475h5v5h-5zM407 475h5v5h-5zM462 485h5v5h-5zM487 485h5v5h-5zM542 485h5v5h-5zM627 485h5v5h-5zM467 510h5v5h-5zM482 510h5v5h-5zM1442 510h5v5h-5zM1642 510h10v5h-10zM1677 510h5v5h-5zM847 515h5v5h-5zM847 550h5v5h-5zM857 595h5v5h-5zM1362 595h5v5h-5zM1517 595h5v5h-5zM1032 630h5v5h-5zM347 660h5v5h-5zM857 670h5v5h-5zM1512 670h10v5h-10zM252 695h5v5h-5zM827 705h5v5h-5zM1037 735h5v5h-5zM1242 735h5v5h-5zM1272 735h5v5h-5zM1327 735h5v5h-5zM1342 735h5v5h-5zM1452 735h5v5h-5zM1542 735h5v5h-5zM1627 735h5v5h-5zM287 745h5v5h-5zM467 745h5v5h-5zM632 745h5v5h-5zM1352 745h5v5h-5zM1652 745h5v5h-5zM1602 770h5v5h-5zM1677 770h5v5h-5zM847 775h5v5h-5zM377 780h5v5h-5zM847 810h5v5h-5zM857 810h5v5h-5zM1427 810h5v5h-5zM1517 810h5v5h-5zM1807 845h5v5h-5zM352 855h5v5h-5zM1337 855h5v5h-5zM1427 855h5v5h-5zM1512 855h10v5h-10z"/><path fill="#e4d8c6" d="M367 225h5v5h-5zM1677 225h5v5h-5zM1802 225h5v5h-5zM1632 295h5v5h-5zM532 300h5v5h-5zM1422 335h5v5h-5zM1032 365h5v5h-5zM1327 365h5v5h-5zM857 440h5v5h-5zM1597 475h5v5h-5zM1507 515h5v5h-5zM1352 630h5v5h-5zM827 740h5v5h-5zM1687 745h5v5h-5zM387 775h5v5h-5zM1237 775h5v5h-5zM367 810h5v5h-5zM1507 810h5v5h-5zM827 815h5v5h-5zM327 855h5v5h-5z"/><path fill="#c6d2c0" d="M372 225h5v5h-5zM422 290h5v5h-5zM1362 445h5v5h-5zM1682 480h5v5h-5zM1047 700h5v5h-5zM1682 700h5v5h-5z"/><path fill="#e4dec6" d="M377 225h5v5h-5zM632 225h5v5h-5zM382 255h5v5h-5zM857 255h5v5h-5zM347 335h5v5h-5zM337 365h5v5h-5zM432 400h5v5h-5zM412 405h5v5h-5zM1602 410h5v5h-5zM322 445h5v5h-5zM412 480h5v5h-5zM1512 520h5v5h-5zM1707 595h5v5h-5zM472 665h5v5h-5zM327 670h5v5h-5zM437 670h5v5h-5zM322 705h5v5h-5zM342 775h5v5h-5zM347 780h5v5h-5zM1442 780h5v5h-5zM1032 810h5v5h-5zM1417 810h5v5h-5zM1417 850h5v5h-5z"/><path fill="#ccc6ae" d="M412 225h5v5h-5zM1682 260h5v5h-5zM337 335h5v5h-5zM537 335h5v5h-5zM1692 480h5v5h-5zM337 515h5v5h-5zM397 520h5v5h-5zM537 520h5v5h-5zM547 550h5v5h-5zM1657 550h5v5h-5zM1687 550h5v5h-5zM622 705h5v5h-5zM477 735h5v5h-5zM282 740h5v5h-5zM392 775h5v5h-5zM857 775h5v5h-5zM1687 780h5v5h-5z"/><path fill="#ccd8c6" d="M417 225h5v5h-5zM347 410h5v5h-5zM1712 475h5v5h-5zM852 480h5v5h-5zM1627 625h5v5h-5zM1802 630h5v5h-5zM382 700h5v5h-5zM1042 815h5v5h-5z"/><path fill="#d2d8c6" d="M427 225h5v5h-5zM862 260h5v5h-5zM1247 295h5v5h-5zM352 300h5v5h-5zM447 300h5v5h-5zM1707 300h5v5h-5zM1817 330h5v5h-5zM372 365h5v5h-5zM852 405h5v5h-5zM1672 410h5v5h-5zM422 440h5v5h-5zM402 475h5v5h-5zM1042 480h5v5h-5zM1712 510h5v5h-5zM1337 515h5v5h-5zM1682 520h5v5h-5zM437 550h5v5h-5zM1712 585h5v5h-5zM1657 670h5v5h-5zM1517 705h5v5h-5zM282 735h5v5h-5zM1252 780h5v5h-5zM347 810h5v5h-5zM1342 810h5v5h-5zM1712 855h5v5h-5z"/><path fill="#c6ccae" d="M532 225h5v5h-5zM857 260h5v5h-5zM322 405h5v5h-5zM1647 665h5v5h-5zM1647 705h5v5h-5zM1657 775h5v5h-5zM552 780h5v5h-5z"/><path fill="#dee4d8" d="M547 225h5v5h-5zM247 300h5v5h-5zM562 445h5v5h-5zM247 485h5v5h-5zM247 585h5v5h-5zM1537 625h5v5h-5zM1057 670h5v5h-5zM252 770h5v5h-5zM362 820h5v5h-5z"/><path fill="#f0f0e4" d="M562 225h5v5h-5zM1692 485h5v5h-5zM407 735h5v5h-5zM1692 745h5v5h-5zM472 770h5v5h-5zM562 855h5v5h-5zM1692 855h5v5h-5z"/><path fill="#e4e4d8" d="M862 225h5v5h-5zM252 250h5v5h-5zM1332 290h5v5h-5zM1512 290h5v5h-5zM1532 300h5v5h-5zM1802 300h5v5h-5zM1707 325h5v5h-5zM242 335h5v5h-5zM1247 365h5v5h-5zM252 375h5v5h-5zM537 400h5v5h-5zM1237 445h5v5h-5zM1327 445h5v5h-5zM247 475h5v5h-5zM862 475h5v5h-5zM1047 475h5v5h-5zM1242 475h5v5h-5zM1252 475h5v5h-5zM1272 475h5v5h-5zM1332 475h5v5h-5zM1342 475h5v5h-5zM1422 475h5v5h-5zM427 485h5v5h-5zM637 485h5v5h-5zM252 510h5v5h-5zM242 515h5v5h-5zM1837 515h5v5h-5zM377 520h5v5h-5zM1427 550h5v5h-5zM1517 550h5v5h-5zM252 560h5v5h-5zM427 585h5v5h-5zM447 585h5v5h-5zM537 585h5v5h-5zM242 595h5v5h-5zM862 595h5v5h-5zM1247 595h5v5h-5zM247 635h5v5h-5zM297 660h5v5h-5zM1802 665h5v5h-5zM862 670h5v5h-5zM1272 670h5v5h-5zM242 700h5v5h-5zM1327 705h5v5h-5zM1512 735h5v5h-5zM247 745h5v5h-5zM637 745h5v5h-5zM242 810h5v5h-5zM1247 810h5v5h-5zM252 820h5v5h-5zM862 855h5v5h-5zM1537 855h5v5h-5zM1832 855h5v5h-5z"/><path fill="#f0e4d2" d="M1597 225h5v5h-5zM397 290h5v5h-5zM1597 585h5v5h-5zM377 700h5v5h-5zM627 745h5v5h-5zM322 855h5v5h-5zM1247 855h5v5h-5z"/><path fill="#d2ccba" d="M1617 225h5v5h-5zM537 290h5v5h-5zM1242 330h5v5h-5zM557 335h5v5h-5zM632 365h5v5h-5zM387 370h5v5h-5zM1632 370h5v5h-5zM287 400h5v5h-5zM627 410h5v5h-5zM827 440h5v5h-5zM1332 445h5v5h-5zM1702 445h5v5h-5zM487 475h5v5h-5zM1602 520h5v5h-5zM1702 550h5v5h-5zM392 555h5v5h-5zM532 585h5v5h-5zM1642 585h5v5h-5zM337 590h5v5h-5zM1687 590h5v5h-5zM432 595h5v5h-5zM557 625h5v5h-5zM282 670h5v5h-5zM1622 670h5v5h-5zM1272 700h5v5h-5zM1452 700h5v5h-5zM397 705h5v5h-5zM1802 705h5v5h-5zM327 735h5v5h-5zM1357 775h5v5h-5zM632 810h5v5h-5zM1597 815h5v5h-5zM1812 815h5v5h-5zM1632 855h5v5h-5z"/><path fill="#c6ccc6" d="M1632 225h5v5h-5zM1272 255h5v5h-5zM1272 260h5v5h-5zM842 330h5v5h-5zM1662 370h5v5h-5zM862 440h5v5h-5zM382 590h5v5h-5zM422 590h5v5h-5zM1682 590h5v5h-5zM1432 625h5v5h-5zM1432 705h5v5h-5zM342 735h5v5h-5z"/><path fill="#d8ccc0" d="M1652 225h5v5h-5zM1242 260h5v5h-5zM347 400h5v5h-5zM1812 400h5v5h-5zM382 520h5v5h-5zM417 550h5v5h-5zM1642 745h5v5h-5zM1602 780h5v5h-5z"/><path fill="#d2c6ba" d="M1657 225h5v5h-5zM1362 255h5v5h-5zM1597 440h5v5h-5zM1642 480h5v5h-5zM1597 515h5v5h-5zM282 595h5v5h-5zM1597 625h5v5h-5zM322 775h5v5h-5zM1597 775h5v5h-5zM447 780h5v5h-5zM1057 815h5v5h-5zM532 855h5v5h-5z"/><path fill="#eaeacc" d="M1667 225h5v5h-5zM452 745h5v5h-5zM432 775h5v5h-5z"/><path fill="#cccccc" d="M1707 225h5v5h-5zM1837 290h5v5h-5zM1352 330h5v5h-5zM1682 555h5v5h-5zM1532 665h5v5h-5zM1837 735h5v5h-5z"/><path fill="#c0c6b4" d="M1817 225h5v5h-5zM1652 255h5v5h-5zM1687 255h5v5h-5zM1362 260h5v5h-5zM1602 330h5v5h-5zM1657 365h5v5h-5zM1452 370h5v5h-5zM1447 405h5v5h-5zM1702 405h5v5h-5zM427 440h5v5h-5zM282 445h5v5h-5zM1272 480h5v5h-5zM1812 485h5v5h-5zM532 520h5v5h-5zM1067 555h5v5h-5zM1692 555h5v5h-5zM1702 555h5v5h-5zM1702 590h5v5h-5zM1632 630h5v5h-5zM1512 665h5v5h-5zM1352 700h5v5h-5zM1662 735h5v5h-5zM1447 740h5v5h-5zM282 775h5v5h-5zM1452 775h5v5h-5zM1702 815h5v5h-5zM1702 850h5v5h-5zM1817 850h5v5h-5z"/><path fill="#c0aeba" d="M1827 225h5v5h-5z"/><path fill="#d2e4c0" d="M1847 225h5v5h-5zM1852 480h5v5h-5zM1847 670h5v5h-5z"/><path fill="#4ea24e" d="M1852 225h5v5h-5z"/><path fill="#fc8478" d="M1872 225h5v5h-5zM1872 255h5v5h-5zM1877 485h5v5h-5zM1872 670h5v5h-5z"/><path fill="#fc786c" d="M1877 225h5v5h-5zM1877 255h5v5h-5zM1877 670h5v5h-5zM1877 700h5v5h-5z"/><path fill="#e4e4e4" d="M252 255h5v5h-5zM252 260h5v5h-5zM252 445h5v5h-5zM252 515h5v5h-5zM252 590h5v5h-5zM252 665h5v5h-5zM252 700h5v5h-5zM252 705h5v5h-5zM252 815h5v5h-5z"/><path fill="#aea896" d="M287 255h5v5h-5zM1672 365h5v5h-5zM537 440h5v5h-5zM1677 440h5v5h-5zM417 740h5v5h-5z"/><path fill="#96a8a2" d="M292 255h5v5h-5zM1807 855h5v5h-5z"/><path fill="#ccd8cc" d="M297 255h5v5h-5zM392 365h5v5h-5zM1262 365h5v5h-5zM1432 520h5v5h-5zM842 625h5v5h-5zM562 775h5v5h-5zM252 810h5v5h-5z"/><path fill="#d8d8b4" d="M327 255h5v5h-5zM1247 555h5v5h-5zM477 705h5v5h-5z"/><path fill="#ccccc6" d="M332 255h5v5h-5zM437 290h5v5h-5zM297 370h5v5h-5zM482 400h5v5h-5zM1522 440h5v5h-5zM382 445h5v5h-5zM482 520h5v5h-5zM632 550h5v5h-5zM352 555h5v5h-5zM1682 625h5v5h-5zM1832 625h5v5h-5zM1697 735h5v5h-5zM832 775h5v5h-5zM1657 850h5v5h-5z"/><path fill="#c6c6ba" d="M337 255h5v5h-5zM1062 260h5v5h-5zM1252 260h5v5h-5zM1447 260h5v5h-5zM1617 290h5v5h-5zM832 295h5v5h-5zM1267 295h5v5h-5zM287 335h5v5h-5zM1262 370h5v5h-5zM1442 370h5v5h-5zM1062 405h5v5h-5zM1242 405h5v5h-5zM1647 405h5v5h-5zM622 445h5v5h-5zM1067 445h5v5h-5zM1537 445h5v5h-5zM1827 445h5v5h-5zM332 475h5v5h-5zM392 475h5v5h-5zM857 480h5v5h-5zM377 515h5v5h-5zM842 515h5v5h-5zM1037 515h5v5h-5zM467 520h5v5h-5zM842 590h5v5h-5zM1267 590h5v5h-5zM1632 590h5v5h-5zM1342 630h5v5h-5zM1447 630h5v5h-5zM1522 630h5v5h-5zM1447 665h5v5h-5zM1542 700h5v5h-5zM1267 705h5v5h-5zM1067 740h5v5h-5zM1687 740h5v5h-5zM287 780h5v5h-5zM1617 780h5v5h-5zM1422 850h5v5h-5zM1662 855h5v5h-5z"/><path fill="#d8d8ba" d="M342 255h5v5h-5zM482 595h5v5h-5z"/><path fill="#ccc0ae" d="M362 255h5v5h-5zM357 260h5v5h-5zM532 550h5v5h-5z"/><path fill="#c0ae96" d="M372 255h5v5h-5zM1707 515h5v5h-5z"/><path fill="#d8e4de" d="M377 255h5v5h-5zM562 260h5v5h-5z"/><path fill="#babaa2" d="M387 255h5v5h-5zM282 440h5v5h-5zM352 520h5v5h-5zM357 630h5v5h-5zM1697 740h5v5h-5zM1807 745h5v5h-5z"/><path fill="#b4baa8" d="M407 255h5v5h-5zM1607 260h5v5h-5zM1627 260h5v5h-5zM282 555h5v5h-5zM1627 590h5v5h-5zM1697 625h5v5h-5zM292 630h5v5h-5zM1607 850h5v5h-5z"/><path fill="#96967e" d="M412 255h5v5h-5zM627 260h5v5h-5z"/><path fill="#b4a89c" d="M422 255h5v5h-5zM452 625h5v5h-5zM1817 630h5v5h-5zM287 705h5v5h-5z"/><path fill="#a2a8a2" d="M427 255h5v5h-5zM622 255h5v5h-5zM1692 295h5v5h-5zM1807 410h5v5h-5zM1832 665h5v5h-5z"/><path fill="#a8a29c" d="M432 255h5v5h-5zM552 445h5v5h-5zM537 625h5v5h-5zM1812 625h5v5h-5zM287 630h5v5h-5zM637 705h5v5h-5zM537 740h5v5h-5z"/><path fill="#d2ded2" d="M437 255h5v5h-5z"/><path fill="#b4baa2" d="M447 255h5v5h-5zM1642 260h5v5h-5zM287 330h5v5h-5zM1687 330h5v5h-5zM402 705h5v5h-5zM537 705h5v5h-5z"/><path fill="#c6c0c0" d="M457 255h5v5h-5zM1642 410h5v5h-5zM1827 560h5v5h-5zM1537 630h5v5h-5zM1447 705h5v5h-5zM1332 775h5v5h-5z"/><path fill="#d2ccb4" d="M462 255h5v5h-5zM1667 260h5v5h-5zM282 295h5v5h-5zM367 330h5v5h-5zM337 370h5v5h-5zM462 475h5v5h-5zM532 475h5v5h-5zM322 480h5v5h-5zM387 550h5v5h-5zM397 555h5v5h-5zM367 595h5v5h-5zM532 595h5v5h-5zM462 630h5v5h-5zM387 670h5v5h-5zM412 705h5v5h-5zM457 780h5v5h-5zM1687 855h5v5h-5z"/><path fill="#969684" d="M467 255h5v5h-5zM537 665h5v5h-5zM632 665h5v5h-5zM632 775h5v5h-5z"/><path fill="#aea8a2" d="M537 255h5v5h-5zM1832 295h5v5h-5zM1702 330h5v5h-5zM332 405h5v5h-5zM622 740h5v5h-5z"/><path fill="#c6ccc0" d="M557 255h5v5h-5zM1342 260h5v5h-5zM1432 260h5v5h-5zM1537 260h10v5h-10zM1667 295h5v5h-5zM382 335h5v5h-5zM1642 335h5v5h-5zM842 370h5v5h-5zM1242 440h5v5h-5zM1447 445h5v5h-5zM472 480h5v5h-5zM532 480h5v5h-5zM1062 515h5v5h-5zM1657 590h5v5h-5zM1522 700h5v5h-5zM1682 705h5v5h-5zM1702 705h5v5h-5zM292 810h5v5h-5zM1652 810h5v5h-5zM1812 820h5v5h-5zM292 850h5v5h-5z"/><path fill="#d2d8d2" d="M562 255h5v5h-5zM1602 365h5v5h-5zM472 400h5v5h-5zM562 440h5v5h-5zM252 595h5v5h-5zM562 700h5v5h-5z"/><path fill="#d2dec0" d="M637 255h5v5h-5zM1607 770h5v5h-5z"/><path fill="#ccccba" d="M827 255h5v5h-5zM1452 255h5v5h-5zM1512 255h5v5h-5zM1697 260h5v5h-5zM407 290h5v5h-5zM1702 290h5v5h-5zM452 295h5v5h-5zM1442 295h5v5h-5zM1532 295h5v5h-5zM1062 330h5v5h-5zM1627 335h5v5h-5zM1687 335h5v5h-5zM357 370h5v5h-5zM1807 375h5v5h-5zM1597 405h5v5h-5zM367 410h5v5h-5zM637 440h5v5h-5zM1252 440h5v5h-5zM1432 440h5v5h-5zM1627 440h5v5h-5zM417 475h5v5h-5zM292 520h5v5h-5zM1632 520h5v5h-5zM462 550h5v5h-5zM1812 555h5v5h-5zM1447 590h5v5h-5zM542 595h5v5h-5zM1622 595h5v5h-5zM1252 625h5v5h-5zM1342 625h5v5h-5zM1647 630h5v5h-5zM1702 630h5v5h-5zM467 665h5v5h-5zM1657 665h5v5h-5zM1687 665h5v5h-5zM342 670h5v5h-5zM452 670h5v5h-5zM477 670h5v5h-5zM637 670h5v5h-5zM1662 670h5v5h-5zM357 700h5v5h-5zM417 700h5v5h-5zM1242 700h5v5h-5zM1242 705h5v5h-5zM1602 705h5v5h-5zM437 735h5v5h-5zM852 740h5v5h-5zM1532 775h5v5h-5zM282 780h5v5h-5zM367 780h5v5h-5zM427 780h5v5h-5zM1597 850h5v5h-5zM282 855h5v5h-5zM1622 855h5v5h-5z"/><path fill="#d2c6c6" d="M1037 255h5v5h-5zM1812 370h5v5h-5z"/><path fill="#c6c6b4" d="M1047 255h5v5h-5zM1612 255h5v5h-5zM1627 255h5v5h-5zM1672 290h5v5h-5zM422 365h5v5h-5zM1667 370h5v5h-5zM462 445h5v5h-5zM1602 445h5v5h-5zM432 475h5v5h-5zM1267 480h5v5h-5zM1702 515h5v5h-5zM1617 520h5v5h-5zM282 550h5v5h-5zM1807 550h5v5h-5zM1057 555h5v5h-5zM1242 555h5v5h-5zM1262 555h5v5h-5zM1812 560h5v5h-5zM477 590h5v5h-5zM1537 590h5v5h-5zM422 625h5v5h-5zM457 625h5v5h-5zM857 630h5v5h-5zM282 665h5v5h-5zM837 665h5v5h-5zM1267 665h5v5h-5zM1617 665h5v5h-5zM402 670h5v5h-5zM422 700h5v5h-5zM472 705h5v5h-5zM1812 705h5v5h-5zM482 735h5v5h-5zM1602 735h5v5h-5zM487 780h5v5h-5zM1642 780h5v5h-5zM362 810h5v5h-5zM857 815h5v5h-5zM1537 815h5v5h-5zM832 850h5v5h-5zM1242 850h5v5h-5zM1332 850h5v5h-5zM1632 850h5v5h-5z"/><path fill="#b4baba" d="M1057 255h5v5h-5zM1342 405h5v5h-5zM1532 700h5v5h-5zM282 705h5v5h-5zM1827 780h5v5h-5z"/><path fill="#ccc6c0" d="M1067 255h5v5h-5zM1342 255h5v5h-5zM1802 260h5v5h-5zM1657 290h5v5h-5zM837 295h5v5h-5zM1812 295h5v5h-5zM1662 365h5v5h-5zM482 410h5v5h-5zM1542 440h5v5h-5zM1682 440h5v5h-5zM1542 445h5v5h-5zM1262 515h5v5h-5zM1532 515h5v5h-5zM837 555h5v5h-5zM287 585h5v5h-5zM387 585h5v5h-5zM627 595h5v5h-5zM1642 595h5v5h-5zM1047 625h5v5h-5zM1657 630h5v5h-5zM1827 630h5v5h-5zM1642 660h5v5h-5zM1812 660h5v5h-5zM1067 700h5v5h-5zM1432 700h5v5h-5zM1832 705h5v5h-5zM1352 775h5v5h-5zM1422 775h5v5h-5z"/><path fill="#ccd2ba" d="M1252 255h5v5h-5zM367 260h5v5h-5zM1692 290h5v5h-5zM1707 290h5v5h-5zM367 335h5v5h-5zM1802 335h5v5h-5zM407 410h5v5h-5zM1362 440h5v5h-5zM1647 475h5v5h-5zM362 550h5v5h-5zM1452 625h5v5h-5zM427 630h5v5h-5zM1362 700h5v5h-5zM1627 700h5v5h-5zM1817 745h5v5h-5zM432 780h5v5h-5z"/><path fill="#b4bab4" d="M1262 255h5v5h-5zM532 260h5v5h-5zM1672 590h5v5h-5zM1672 775h5v5h-5zM1542 850h5v5h-5zM1672 850h5v5h-5z"/><path fill="#ded2c0" d="M1327 255h5v5h-5zM347 330h5v5h-5zM1327 330h5v5h-5zM397 365h5v5h-5zM1032 440h5v5h-5zM1417 440h5v5h-5zM1692 515h5v5h-5zM827 590h5v5h-5zM1237 625h5v5h-5zM1417 625h5v5h-5zM322 630h5v5h-5zM632 670h5v5h-5zM1417 700h5v5h-5zM627 735h5v5h-5zM1677 855h5v5h-5z"/><path fill="#dee4cc" d="M1337 255h5v5h-5zM297 335h5v5h-5zM1042 335h5v5h-5zM1442 335h5v5h-5zM637 365h5v5h-5zM1697 400h5v5h-5zM1442 410h5v5h-5zM1247 440h5v5h-5zM1417 480h5v5h-5zM247 510h5v5h-5zM532 510h5v5h-5zM1247 520h5v5h-5zM442 555h5v5h-5zM447 660h5v5h-5zM447 670h5v5h-5zM1357 700h5v5h-5zM422 745h5v5h-5zM342 780h5v5h-5zM1042 780h5v5h-5zM1062 780h5v5h-5zM842 810h5v5h-5zM1532 855h5v5h-5z"/><path fill="#c6baa8" d="M1352 255h5v5h-5zM462 480h5v5h-5zM1037 480h5v5h-5zM377 555h5v5h-5zM1687 625h5v5h-5z"/><path fill="#ccc6c6" d="M1522 255h5v5h-5zM852 625h5v5h-5zM1682 665h5v5h-5zM1037 700h5v5h-5zM372 735h5v5h-5zM1262 810h5v5h-5z"/><path fill="#d2c6c0" d="M1542 255h5v5h-5zM1057 330h5v5h-5zM547 365h5v5h-5zM1512 440h5v5h-5zM1512 445h5v5h-5zM1057 515h5v5h-5zM1422 515h5v5h-5zM342 555h5v5h-5zM1037 625h5v5h-5zM1242 630h5v5h-5zM1362 705h5v5h-5z"/><path fill="#f0eacc" d="M1597 255h5v5h-5zM1597 260h5v5h-5zM1597 365h5v5h-5z"/><path fill="#c0c6c0" d="M1602 255h5v5h-5zM1357 260h5v5h-5zM1682 330h5v5h-5zM1062 445h5v5h-5zM1512 775h5v5h-5zM1682 815h5v5h-5z"/><path fill="#a8baa2" d="M1607 255h5v5h-5zM1692 370h5v5h-5z"/><path fill="#b4c0a2" d="M1617 255h5v5h-5z"/><path fill="#deded8" d="M1632 255h5v5h-5zM407 260h5v5h-5zM247 400h10v5h-10zM562 550h5v5h-5zM642 555h5v5h-5zM1067 595h5v5h-5zM242 630h5v5h-5zM487 665h5v5h-5zM562 705h5v5h-5zM347 855h5v5h-5z"/><path fill="#a8ae90" d="M1647 255h5v5h-5z"/><path fill="#c6baae" d="M1667 255h5v5h-5zM1037 295h5v5h-5zM542 335h5v5h-5zM532 365h5v5h-5zM832 370h5v5h-5zM1812 410h5v5h-5zM1632 445h5v5h-5zM287 475h5v5h-5zM1657 555h5v5h-5zM542 780h5v5h-5z"/><path fill="#a29084" d="M1672 255h5v5h-5zM632 555h5v5h-5z"/><path fill="#a8c09c" d="M1677 255h5v5h-5z"/><path fill="#d8ccba" d="M1697 255h5v5h-5zM1262 480h5v5h-5zM347 555h5v5h-5zM477 630h5v5h-5zM362 665h5v5h-5zM827 810h5v5h-5zM322 850h5v5h-5zM377 850h5v5h-5z"/><path fill="#a8b4a2" d="M1702 255h5v5h-5zM352 330h5v5h-5zM377 590h5v5h-5zM352 625h5v5h-5zM292 815h5v5h-5z"/><path fill="#b4aeae" d="M1707 255h5v5h-5zM1432 370h5v5h-5zM462 440h10v5h-10zM547 440h5v5h-5zM1662 665h5v5h-5zM637 780h5v5h-5zM1707 815h5v5h-5zM382 855h5v5h-5z"/><path fill="#a896a2" d="M1807 255h5v5h-5z"/><path fill="#a8aea8" d="M1812 255h5v5h-5zM387 480h5v5h-5zM357 515h5v5h-5zM347 625h5v5h-5zM437 705h5v5h-5zM1832 850h5v5h-5z"/><path fill="#bababa" d="M1832 255h5v5h-5zM427 335h5v5h-5zM377 405h5v5h-5zM402 440h5v5h-5zM1432 480h5v5h-5zM1522 555h5v5h-5zM1057 625h5v5h-5zM1352 625h5v5h-5zM1442 625h5v5h-5zM1522 740h5v5h-5zM1542 740h5v5h-5zM1067 775h5v5h-5zM1652 775h5v5h-5z"/><path fill="#8ac07e" d="M1857 255h5v5h-5zM1852 560h5v5h-5z"/><path fill="#ffffff" d="M247 260h5v5h-5zM247 295h5v5h-5zM247 630h5v5h-5zM247 665h5v5h-5zM247 740h5v5h-5z"/><path fill="#eadec6" d="M277 260h5v5h-5zM277 335h5v5h-5zM277 370h5v5h-5zM277 445h5v5h-5zM1667 480h5v5h-5zM277 520h5v5h-5zM277 555h5v5h-5zM1667 740h5v5h-5z"/><path fill="#bac6ae" d="M282 260h5v5h-5zM372 775h5v5h-5zM1342 775h5v5h-5z"/><path fill="#babaa8" d="M287 260h5v5h-5zM1672 260h5v5h-5zM857 370h5v5h-5zM1067 405h5v5h-5zM442 440h5v5h-5zM327 555h5v5h-5zM1272 590h5v5h-5zM1662 590h5v5h-5zM1617 630h5v5h-5zM532 700h5v5h-5zM1362 775h5v5h-5zM1622 780h5v5h-5z"/><path fill="#bab4b4" d="M292 260h5v5h-5zM1827 260h5v5h-5zM1522 330h5v5h-5zM1542 330h5v5h-5zM1707 370h5v5h-5zM1057 440h5v5h-5zM347 515h5v5h-5zM1532 625h5v5h-5zM1652 625h5v5h-5zM1362 665h5v5h-5zM622 810h5v5h-5z"/><path fill="#ded2ba" d="M322 260h5v5h-5zM1617 330h5v5h-5zM487 550h5v5h-5zM1597 550h5v5h-5z"/><path fill="#b4b4a8" d="M337 260h5v5h-5zM427 260h5v5h-5zM1812 290h5v5h-5zM387 405h5v5h-5zM1662 405h5v5h-5zM1252 480h5v5h-5zM402 550h5v5h-5zM1812 550h5v5h-5zM397 590h5v5h-5zM1607 590h5v5h-5zM402 625h5v5h-5zM467 625h5v5h-5zM1662 630h5v5h-5zM1602 815h5v5h-5z"/><path fill="#ccbaba" d="M342 260h5v5h-5zM1537 405h5v5h-5zM1642 405h5v5h-5zM1037 815h5v5h-5z"/><path fill="#a2967e" d="M362 260h5v5h-5z"/><path fill="#aea890" d="M372 260h5v5h-5zM387 665h5v5h-5z"/><path fill="#c6cca8" d="M382 260h5v5h-5zM392 630h5v5h-5zM327 810h5v5h-5z"/><path fill="#a8a89c" d="M387 260h5v5h-5zM627 440h5v5h-5zM542 590h5v5h-5zM1712 625h5v5h-5zM622 665h5v5h-5zM557 775h5v5h-5z"/><path fill="#b4ae96" d="M397 260h5v5h-5zM557 295h5v5h-5zM557 480h5v5h-5zM332 555h5v5h-5zM627 625h5v5h-5zM557 740h5v5h-5z"/><path fill="#aeae9c" d="M412 260h5v5h-5zM452 440h5v5h-5zM447 590h5v5h-5zM382 630h5v5h-5z"/><path fill="#ccc6ba" d="M417 260h5v5h-5zM832 260h5v5h-5zM1612 295h5v5h-5zM1037 330h5v5h-5zM1357 330h5v5h-5zM1422 370h5v5h-5zM472 405h5v5h-5zM1332 405h5v5h-5zM1067 440h5v5h-5zM1272 440h5v5h-5zM1342 440h5v5h-5zM437 445h10v5h-10zM1047 445h5v5h-5zM1272 445h5v5h-5zM1522 445h5v5h-5zM622 475h5v5h-5zM1707 475h5v5h-5zM322 515h5v5h-5zM1357 515h5v5h-5zM1697 520h5v5h-5zM327 550h5v5h-5zM437 590h5v5h-5zM1272 625h5v5h-5zM1432 630h5v5h-5zM1597 665h5v5h-5zM1642 670h5v5h-5zM322 700h5v5h-5zM437 700h5v5h-5zM1342 700h5v5h-5zM377 705h5v5h-5zM432 705h5v5h-5zM1047 705h5v5h-5zM1272 705h5v5h-5zM292 735h5v5h-5zM352 735h5v5h-5zM1597 740h5v5h-5zM1642 740h5v5h-5zM1057 775h5v5h-5zM1242 775h5v5h-5zM1267 775h5v5h-5zM1677 780h5v5h-5zM837 815h5v5h-5zM837 850h5v5h-5z"/><path fill="#c0c0ae" d="M422 260h5v5h-5zM447 260h5v5h-5zM1357 295h5v5h-5zM387 335h5v5h-5zM407 335h5v5h-5zM407 365h5v5h-5zM342 370h5v5h-5zM422 405h5v5h-5zM1652 440h5v5h-5zM482 445h5v5h-5zM1617 445h5v5h-5zM1642 475h5v5h-5zM447 480h5v5h-5zM1422 480h5v5h-5zM1687 515h5v5h-5zM332 520h5v5h-5zM857 590h5v5h-5zM1342 590h5v5h-5zM1692 590h5v5h-5zM397 625h5v5h-5zM322 665h5v5h-5zM1542 665h5v5h-5zM1652 665h5v5h-5zM427 705h5v5h-5zM352 775h5v5h-5zM427 775h5v5h-5zM637 775h5v5h-5zM1252 775h5v5h-5zM532 780h5v5h-5zM1812 780h5v5h-5zM627 810h5v5h-5zM1267 815h5v5h-5zM1452 815h5v5h-5zM1512 815h5v5h-5z"/><path fill="#d2c6ae" d="M452 260h5v5h-5zM357 335h5v5h-5zM342 700h5v5h-5zM412 775h5v5h-5z"/><path fill="#c6c0a8" d="M462 260h5v5h-5zM1647 290h5v5h-5zM412 295h5v5h-5zM1707 330h5v5h-5zM427 370h5v5h-5zM282 405h5v5h-5zM412 555h5v5h-5zM447 630h5v5h-5zM327 665h5v5h-5zM1617 705h5v5h-5zM1062 850h5v5h-5z"/><path fill="#aea89c" d="M542 260h5v5h-5zM362 365h5v5h-5zM1817 555h5v5h-5zM637 590h5v5h-5zM1677 850h5v5h-5z"/><path fill="#c0a29c" d="M552 260h5v5h-5z"/><path fill="#baa896" d="M557 260h5v5h-5z"/><path fill="#b4a29c" d="M632 260h5v5h-5zM1662 775h5v5h-5z"/><path fill="#a2ae96" d="M637 260h5v5h-5zM552 630h5v5h-5z"/><path fill="#e4eade" d="M642 260h5v5h-5zM562 335h5v5h-5zM282 510h5v5h-5zM642 630h5v5h-5z"/><path fill="#d2d8cc" d="M842 260h5v5h-5zM462 290h5v5h-5zM642 295h5v5h-5zM297 330h5v5h-5zM382 330h5v5h-5zM1712 400h5v5h-5zM1352 405h5v5h-5zM842 445h5v5h-5zM487 515h5v5h-5zM1522 520h5v5h-5zM1067 550h5v5h-5zM1627 550h5v5h-5zM492 700h5v5h-5zM297 705h5v5h-5zM332 855h5v5h-5zM1672 855h5v5h-5z"/><path fill="#ccd8c0" d="M852 260h5v5h-5zM1042 405h5v5h-5zM1247 405h5v5h-5zM1427 405h5v5h-5zM1712 410h5v5h-5zM427 595h5v5h-5zM1617 595h5v5h-5zM1662 845h5v5h-5z"/><path fill="#e4ead2" d="M1032 260h5v5h-5zM1507 260h5v5h-5zM412 300h5v5h-5zM1042 365h5v5h-5zM1337 365h5v5h-5zM827 400h5v5h-5zM277 410h5v5h-5zM1517 410h5v5h-5zM827 445h5v5h-5zM557 475h5v5h-5zM1037 475h5v5h-5zM1827 480h5v5h-5zM387 485h5v5h-5zM852 595h5v5h-5zM537 660h5v5h-5zM1337 670h5v5h-5zM1447 700h5v5h-5zM1067 735h5v5h-5zM1522 735h5v5h-5zM1617 745h5v5h-5zM347 770h5v5h-5zM1632 810h5v5h-5zM1847 850h5v5h-5z"/><path fill="#c0c0ba" d="M1047 260h5v5h-5zM1422 330h5v5h-5zM1512 330h5v5h-5zM1657 330h5v5h-5zM1702 365h5v5h-5zM447 440h5v5h-5zM547 445h5v5h-5zM1832 445h5v5h-5zM1342 480h5v5h-5zM1362 480h5v5h-5zM1512 480h5v5h-5zM1537 480h5v5h-5zM1062 555h5v5h-5zM1642 590h5v5h-5zM1812 670h5v5h-5zM327 705h5v5h-5zM467 735h5v5h-5zM832 740h5v5h-5zM1362 740h5v5h-5zM452 775h5v5h-5zM1067 815h5v5h-5zM1037 850h5v5h-5z"/><path fill="#c6ccb4" d="M1267 260h5v5h-5zM342 295h10v5h-10zM1682 295h5v5h-5zM432 370h5v5h-5zM1047 440h5v5h-5zM1267 445h5v5h-5zM1647 445h5v5h-5zM1512 515h5v5h-5zM352 590h5v5h-5zM327 630h5v5h-5zM1062 630h5v5h-5zM1602 630h5v5h-5zM532 735h5v5h-5zM367 775h5v5h-5zM1672 780h5v5h-5z"/><path fill="#aea2a2" d="M1602 260h5v5h-5zM1642 555h5v5h-5zM437 625h5v5h-5z"/><path fill="#c0bab4" d="M1617 260h5v5h-5zM1047 370h5v5h-5zM1272 370h5v5h-5zM1542 480h5v5h-5zM1357 555h10v5h-10zM1542 590h5v5h-5zM432 665h5v5h-5zM1252 740h5v5h-5zM482 775h5v5h-5zM1662 810h5v5h-5zM1272 815h5v5h-5zM337 850h5v5h-5z"/><path fill="#baae9c" d="M1622 260h5v5h-5zM412 370h5v5h-5zM1707 480h5v5h-5zM347 550h5v5h-5zM1707 665h5v5h-5z"/><path fill="#c0baae" d="M1647 260h5v5h-5zM1542 295h5v5h-5zM1807 300h5v5h-5zM1602 335h5v5h-5zM1067 370h5v5h-5zM1342 370h5v5h-5zM1682 370h5v5h-5zM1672 445h5v5h-5zM422 480h5v5h-5zM1362 515h5v5h-5zM1642 515h5v5h-5zM1642 520h5v5h-5zM1642 550h5v5h-5zM1342 555h5v5h-5zM1512 555h5v5h-5zM632 625h5v5h-5zM282 630h5v5h-5zM372 630h5v5h-5zM332 705h5v5h-5zM1677 705h5v5h-5zM1047 740h5v5h-5zM1697 775h5v5h-5zM1647 810h5v5h-5zM1647 815h5v5h-5z"/><path fill="#a8aea2" d="M1652 260h5v5h-5zM287 550h5v5h-5zM337 625h5v5h-5zM397 665h5v5h-5zM1812 810h5v5h-5zM1627 850h5v5h-5z"/><path fill="#d2d2cc" d="M1662 260h5v5h-5zM532 405h5v5h-5zM252 410h5v5h-5zM472 475h5v5h-5zM1252 520h5v5h-5zM1262 550h5v5h-5zM337 585h5v5h-5zM1687 585h5v5h-5zM252 625h5v5h-5zM842 630h5v5h-5zM1712 660h5v5h-5zM862 705h5v5h-5zM1047 780h5v5h-5zM1522 780h5v5h-5zM332 810h5v5h-5zM1682 810h5v5h-5z"/><path fill="#b4c0ae" d="M1677 260h5v5h-5zM367 520h5v5h-5zM1627 740h5v5h-5zM1252 815h5v5h-5z"/><path fill="#c0baba" d="M1687 260h5v5h-5zM852 370h5v5h-5zM1362 370h5v5h-5zM1357 480h5v5h-5zM1712 775h5v5h-5zM852 815h5v5h-5z"/><path fill="#baaea2" d="M1702 260h5v5h-5zM1432 405h5v5h-5zM357 445h5v5h-5zM327 480h5v5h-5zM1707 550h5v5h-5zM442 665h5v5h-5z"/><path fill="#b4c0ba" d="M1707 260h5v5h-5zM292 480h5v5h-5zM1827 485h5v5h-5zM1712 630h5v5h-5z"/><path fill="#969c96" d="M1807 260h5v5h-5zM482 625h5v5h-5zM292 700h5v5h-5z"/><path fill="#9c969c" d="M1817 260h5v5h-5z"/><path fill="#aed2a2" d="M1847 260h5v5h-5zM1847 445h5v5h-5zM1847 520h5v5h-5zM1852 555h5v5h-5zM1857 625h5v5h-5zM1847 630h5v5h-5zM1852 635h5v5h-5z"/><path fill="#b4d8a8" d="M1857 260h5v5h-5zM1847 335h5v5h-5zM1847 370h5v5h-5zM1847 815h5v5h-5z"/><path fill="#f6fcea" d="M457 265h5v5h-5zM297 295h5v5h-5z"/><path fill="#d8d8d8" d="M252 290h5v5h-5z"/><path fill="#f6ead8" d="M277 290h5v5h-5zM432 550h5v5h-5zM552 745h5v5h-5zM847 780h5v5h-5zM367 845h5v5h-5z"/><path fill="#bac0a8" d="M362 290h5v5h-5zM422 330h5v5h-5zM1252 405h5v5h-5zM637 515h5v5h-5zM367 555h5v5h-5zM432 625h5v5h-5zM1647 625h5v5h-5zM432 630h5v5h-5zM1677 630h5v5h-5zM857 665h5v5h-5zM547 700h5v5h-5zM1617 700h5v5h-5zM1432 815h5v5h-5z"/><path fill="#d2ccae" d="M412 290h5v5h-5z"/><path fill="#c6c6ae" d="M532 290h5v5h-5zM377 295h5v5h-5zM397 335h5v5h-5zM1652 405h5v5h-5zM467 445h5v5h-5zM437 480h5v5h-5zM477 520h5v5h-5zM1352 555h5v5h-5zM552 700h5v5h-5zM322 740h5v5h-5zM402 780h5v5h-5zM422 780h5v5h-5zM537 780h5v5h-5z"/><path fill="#ded8d8" d="M852 290h5v5h-5zM297 780h5v5h-5z"/><path fill="#eaded8" d="M1047 290h5v5h-5z"/><path fill="#d2decc" d="M1057 290h5v5h-5zM642 405h5v5h-5zM1812 450h5v5h-5zM492 550h5v5h-5zM472 740h5v5h-5zM492 775h5v5h-5z"/><path fill="#d2e4c6" d="M1857 290h5v5h-5z"/><path fill="#fcccba" d="M1872 290h5v5h-5zM1872 635h5v5h-5z"/><path fill="#fcd2c0" d="M1877 290h5v5h-5z"/><path fill="#dee4e4" d="M252 295h5v5h-5zM247 335h5v5h-5z"/><path fill="#aebab4" d="M292 295h5v5h-5zM1607 515h5v5h-5zM1672 515h5v5h-5zM1662 550h5v5h-5z"/><path fill="#c6b4a8" d="M327 295h5v5h-5zM637 330h5v5h-5zM1687 705h5v5h-5z"/><path fill="#909690" d="M332 295h5v5h-5zM342 815h5v5h-5z"/><path fill="#a8a896" d="M362 295h5v5h-5zM1607 330h5v5h-5zM387 440h5v5h-5zM637 445h5v5h-5zM1677 590h5v5h-5zM372 625h5v5h-5zM552 775h5v5h-5zM392 850h5v5h-5zM542 850h5v5h-5z"/><path fill="#d2c0b4" d="M367 295h5v5h-5zM1702 335h5v5h-5zM1707 445h5v5h-5zM1532 555h5v5h-5z"/><path fill="#909c90" d="M372 295h5v5h-5zM552 370h5v5h-5zM332 590h5v5h-5zM547 850h5v5h-5z"/><path fill="#bab4a2" d="M382 295h5v5h-5zM1647 440h5v5h-5zM537 445h5v5h-5zM632 705h5v5h-5zM1662 740h5v5h-5z"/><path fill="#aeaea2" d="M392 295h5v5h-5z"/><path fill="#b49c96" d="M397 295h5v5h-5z"/><path fill="#a89cae" d="M402 295h5v5h-5z"/><path fill="#96a88a" d="M417 295h5v5h-5z"/><path fill="#c0c6a2" d="M427 295h5v5h-5z"/><path fill="#b4b4ae" d="M432 295h5v5h-5zM1452 405h5v5h-5zM627 520h5v5h-5zM1832 590h5v5h-5zM1047 665h5v5h-5zM1067 665h5v5h-5zM1827 670h5v5h-5zM1687 700h5v5h-5zM1362 850h5v5h-5z"/><path fill="#b4baae" d="M437 295h5v5h-5zM372 405h5v5h-5zM1712 405h5v5h-5zM362 480h5v5h-5zM457 480h5v5h-5zM542 520h5v5h-5zM1832 775h5v5h-5zM1252 850h5v5h-5z"/><path fill="#ead8ba" d="M442 295h5v5h-5z"/><path fill="#a8a2a2" d="M447 295h5v5h-5zM542 630h5v5h-5z"/><path fill="#d2d2de" d="M462 295h5v5h-5z"/><path fill="#ccc0c6" d="M532 295h5v5h-5z"/><path fill="#a28a90" d="M537 295h5v5h-5z"/><path fill="#a29690" d="M542 295h5v5h-5zM357 480h5v5h-5zM1662 700h5v5h-5z"/><path fill="#9caeae" d="M547 295h5v5h-5z"/><path fill="#909090" d="M552 295h5v5h-5zM547 405h5v5h-5z"/><path fill="#ccd8d2" d="M562 295h5v5h-5z"/><path fill="#ae9ca2" d="M622 295h5v5h-5z"/><path fill="#7e8478" d="M627 295h5v5h-5zM627 370h5v5h-5z"/><path fill="#969096" d="M632 295h5v5h-5zM627 445h5v5h-5zM357 850h5v5h-5z"/><path fill="#a89c90" d="M637 295h5v5h-5z"/><path fill="#dedec0" d="M827 295h5v5h-5zM482 440h5v5h-5zM347 705h5v5h-5zM1677 845h5v5h-5zM632 855h5v5h-5z"/><path fill="#baccc6" d="M842 295h5v5h-5zM357 665h5v5h-5z"/><path fill="#ccc0b4" d="M857 295h5v5h-5zM1442 330h5v5h-5zM1332 370h5v5h-5zM1352 370h5v5h-5zM1512 370h5v5h-5zM832 405h5v5h-5zM1622 440h5v5h-5zM857 515h5v5h-5zM1647 515h5v5h-5zM467 550h5v5h-5zM1512 590h5v5h-5zM1642 665h5v5h-5zM1632 705h5v5h-5zM1632 780h5v5h-5zM1677 810h5v5h-5zM287 845h5v5h-5z"/><path fill="#c0c6c6" d="M862 295h5v5h-5zM1682 405h5v5h-5zM852 440h5v5h-5zM532 515h5v5h-5z"/><path fill="#d2dec6" d="M1042 295h5v5h-5zM1657 300h5v5h-5zM457 670h5v5h-5z"/><path fill="#bab4ba" d="M1067 295h5v5h-5zM1067 480h5v5h-5zM1672 480h5v5h-5z"/><path fill="#d2d2d2" d="M1337 295h5v5h-5zM1802 410h5v5h-5zM1057 550h5v5h-5zM252 855h5v5h-5z"/><path fill="#bac0ae" d="M1362 295h5v5h-5zM1362 405h5v5h-5zM1702 440h5v5h-5zM1522 480h5v5h-5zM542 515h5v5h-5zM1632 555h5v5h-5zM282 700h5v5h-5zM292 705h5v5h-5zM1047 775h5v5h-5zM537 810h5v5h-5zM1662 850h5v5h-5z"/><path fill="#baccb4" d="M1432 295h5v5h-5z"/><path fill="#b4c09c" d="M1602 295h5v5h-5zM427 740h5v5h-5z"/><path fill="#96a29c" d="M1607 295h5v5h-5zM1607 625h5v5h-5zM447 740h5v5h-5z"/><path fill="#96a896" d="M1622 295h5v5h-5zM422 705h5v5h-5zM347 850h5v5h-5z"/><path fill="#96a290" d="M1627 295h5v5h-5z"/><path fill="#bac0ba" d="M1652 295h5v5h-5zM1452 555h5v5h-5zM1537 555h5v5h-5zM842 665h5v5h-5zM1272 740h5v5h-5zM1452 740h5v5h-5zM1522 775h5v5h-5zM1607 780h5v5h-5zM1512 850h5v5h-5z"/><path fill="#b4a88a" d="M1672 295h5v5h-5z"/><path fill="#aeb4ae" d="M1677 295h5v5h-5zM627 335h5v5h-5zM1627 405h5v5h-5zM332 445h5v5h-5zM452 445h5v5h-5zM622 550h5v5h-5zM1617 555h5v5h-5zM387 625h5v5h-5zM437 775h5v5h-5zM1432 850h5v5h-5z"/><path fill="#b4a890" d="M1687 295h5v5h-5zM1602 440h5v5h-5zM1602 625h5v5h-5zM1602 700h5v5h-5zM342 850h5v5h-5z"/><path fill="#9c9ca2" d="M1807 295h5v5h-5zM1807 405h5v5h-5z"/><path fill="#b4aeb4" d="M1817 295h5v5h-5zM1817 410h5v5h-5zM1522 665h5v5h-5zM622 815h5v5h-5z"/><path fill="#c6deb4" d="M1847 295h5v5h-5zM1847 410h5v5h-5zM1852 450h5v5h-5zM1847 740h5v5h-5zM1847 855h5v5h-5z"/><path fill="#bad8ae" d="M1852 295h5v5h-5zM1857 365h5v5h-5zM1847 595h5v5h-5zM1852 740h5v5h-5zM1857 810h5v5h-5z"/><path fill="#60a860" d="M1857 295h5v5h-5zM1857 665h5v5h-5zM1857 850h5v5h-5z"/><path fill="#fc605a" d="M1872 295h5v5h-5zM1872 405h5v5h-5zM1872 705h5v5h-5z"/><path fill="#fc3630" d="M1877 295h5v5h-5zM1877 370h5v5h-5z"/><path fill="#e4d8c0" d="M442 300h5v5h-5zM412 550h5v5h-5z"/><path fill="#bac6c6" d="M1812 300h5v5h-5z"/><path fill="#e4f0cc" d="M1847 300h5v5h-5zM1852 525h5v5h-5zM1852 665h5v5h-5z"/><path fill="#72b46c" d="M1852 300h5v5h-5zM1852 445h5v5h-5zM1857 555h5v5h-5zM1852 745h5v5h-5z"/><path fill="#f6fce4" d="M1857 300h5v5h-5zM377 735h5v5h-5zM1857 745h5v5h-5z"/><path fill="#fc968a" d="M1872 300h10v5h-10zM1872 745h10v5h-10z"/><path fill="#f0e4d8" d="M1667 325h5v5h-5zM1332 410h5v5h-5zM847 480h5v5h-5z"/><path fill="#eaf0d8" d="M1672 325h5v5h-5zM1802 375h5v5h-5zM497 410h5v5h-5zM1427 475h5v5h-5zM242 485h5v5h-5zM852 510h5v5h-5zM452 660h5v5h-5zM407 745h5v5h-5zM852 745h5v5h-5zM497 780h5v5h-5zM827 780h5v5h-5zM1417 780h5v5h-5zM1507 780h5v5h-5zM1852 785h5v5h-5z"/><path fill="#fffffc" d="M247 330h5v5h-5zM247 555h5v5h-5z"/><path fill="#c0aea8" d="M282 330h5v5h-5zM442 405h5v5h-5zM532 445h5v5h-5zM1707 810h5v5h-5z"/><path fill="#9ca29c" d="M292 330h5v5h-5zM462 590h5v5h-5zM1607 740h5v5h-5zM1807 815h5v5h-5z"/><path fill="#a2a296" d="M332 330h5v5h-5zM1622 330h5v5h-5zM1627 370h5v5h-5zM1817 370h5v5h-5zM422 515h5v5h-5zM632 515h5v5h-5z"/><path fill="#b4ae9c" d="M337 330h5v5h-5zM362 330h5v5h-5zM632 445h5v5h-5zM632 630h5v5h-5zM327 775h5v5h-5z"/><path fill="#b4b49c" d="M342 330h5v5h-5zM1647 370h5v5h-5zM417 445h5v5h-5zM327 590h5v5h-5zM452 630h5v5h-5zM557 705h5v5h-5zM327 740h5v5h-5zM1672 740h5v5h-5z"/><path fill="#a28a8a" d="M377 330h5v5h-5zM1622 740h5v5h-5z"/><path fill="#909c84" d="M387 330h5v5h-5z"/><path fill="#b4a8a8" d="M397 330h5v5h-5zM1817 335h5v5h-5zM337 405h5v5h-5zM1827 410h5v5h-5zM372 555h5v5h-5zM627 780h5v5h-5z"/><path fill="#a89c9c" d="M407 330h5v5h-5zM542 705h5v5h-5zM402 775h5v5h-5zM372 815h5v5h-5z"/><path fill="#aeb496" d="M417 330h5v5h-5zM477 440h5v5h-5zM1817 445h5v5h-5z"/><path fill="#968a78" d="M427 330h5v5h-5z"/><path fill="#c0ccc6" d="M532 330h5v5h-5zM562 405h5v5h-5zM1712 780h5v5h-5z"/><path fill="#a29c84" d="M537 330h5v5h-5zM537 480h5v5h-5zM627 515h5v5h-5z"/><path fill="#a2a890" d="M547 330h5v5h-5zM557 590h5v5h-5z"/><path fill="#aea884" d="M557 330h5v5h-5zM422 630h5v5h-5z"/><path fill="#ae9696" d="M622 330h5v5h-5z"/><path fill="#a2a284" d="M627 330h5v5h-5z"/><path fill="#96a296" d="M632 330h5v5h-5zM1807 520h5v5h-5zM402 700h5v5h-5zM1807 780h5v5h-5z"/><path fill="#d2d8ba" d="M827 330h5v5h-5zM457 440h5v5h-5zM347 520h5v5h-5zM552 810h5v5h-5zM1427 815h5v5h-5z"/><path fill="#c0ccb4" d="M862 330h5v5h-5zM1812 335h5v5h-5zM1682 365h5v5h-5zM1342 515h5v5h-5zM357 520h5v5h-5zM1442 555h5v5h-5zM1647 775h5v5h-5z"/><path fill="#baaeba" d="M1272 330h5v5h-5zM1047 480h5v5h-5z"/><path fill="#b4c0b4" d="M1432 330h5v5h-5zM1672 405h5v5h-5zM1617 440h5v5h-5zM1522 515h5v5h-5zM1627 555h5v5h-5zM1712 590h5v5h-5zM282 625h5v5h-5zM402 630h5v5h-5zM1452 665h5v5h-5zM1712 705h5v5h-5z"/><path fill="#f6f0d2" d="M1597 330h5v5h-5zM1667 445h5v5h-5zM442 520h5v5h-5zM1667 550h5v5h-5zM1667 630h5v5h-5zM1667 705h5v5h-5zM1667 810h5v5h-5z"/><path fill="#9ca89c" d="M1627 330h5v5h-5zM347 665h5v5h-5z"/><path fill="#c6ba9c" d="M1647 330h5v5h-5zM397 515h5v5h-5z"/><path fill="#bac6c0" d="M1652 330h5v5h-5zM1422 590h5v5h-5zM1627 630h5v5h-5zM372 850h5v5h-5z"/><path fill="#c0ccc0" d="M1662 330h5v5h-5zM862 370h5v5h-5zM1267 515h5v5h-5zM842 555h5v5h-5zM332 735h5v5h-5zM842 740h5v5h-5zM862 740h5v5h-5zM1647 850h5v5h-5z"/><path fill="#b4a8ae" d="M1692 330h5v5h-5zM1812 365h5v5h-5zM1807 485h5v5h-5zM347 740h5v5h-5z"/><path fill="#a29c9c" d="M1807 330h5v5h-5zM347 440h5v5h-5zM362 775h5v5h-5z"/><path fill="#b4aea2" d="M1812 330h5v5h-5zM292 440h5v5h-5zM1832 555h5v5h-5zM332 625h5v5h-5zM1807 625h5v5h-5zM1697 850h5v5h-5z"/><path fill="#b4b4b4" d="M1832 330h5v5h-5zM532 370h5v5h-5zM1522 405h5v5h-5zM337 480h5v5h-5zM472 555h5v5h-5zM1812 665h5v5h-5zM382 705h5v5h-5zM377 740h5v5h-5zM1522 850h5v5h-5z"/><path fill="#6cae66" d="M1857 330h5v5h-5z"/><path fill="#fc7266" d="M1872 330h5v5h-5zM1872 775h5v5h-5z"/><path fill="#fc6054" d="M1877 330h5v5h-5zM1877 775h5v5h-5z"/><path fill="#d8d2d2" d="M252 335h5v5h-5zM642 775h5v5h-5z"/><path fill="#d2d2b4" d="M292 335h5v5h-5zM1697 475h5v5h-5zM292 855h5v5h-5z"/><path fill="#ccccae" d="M327 335h5v5h-5zM362 520h5v5h-5z"/><path fill="#baccae" d="M342 335h5v5h-5z"/><path fill="#ccc6a2" d="M377 335h5v5h-5z"/><path fill="#f0f6de" d="M402 335h5v5h-5zM1682 400h5v5h-5zM1857 485h5v5h-5zM1857 660h5v5h-5z"/><path fill="#a296a8" d="M417 335h5v5h-5z"/><path fill="#b4aea8" d="M637 335h5v5h-5zM622 370h5v5h-5zM1662 480h5v5h-5zM432 515h5v5h-5zM1697 590h5v5h-5zM532 625h5v5h-5zM1642 625h5v5h-5z"/><path fill="#e4d8d2" d="M1057 335h5v5h-5z"/><path fill="#d8e4d2" d="M1447 335h5v5h-5zM642 480h5v5h-5zM452 780h5v5h-5z"/><path fill="#e4d8cc" d="M1452 335h5v5h-5zM1517 335h5v5h-5zM1652 400h5v5h-5zM537 410h5v5h-5zM1032 550h5v5h-5zM1327 550h5v5h-5zM1417 550h5v5h-5zM537 595h5v5h-5zM1602 595h5v5h-5zM857 700h5v5h-5zM1802 740h5v5h-5zM1442 845h5v5h-5zM537 855h5v5h-5z"/><path fill="#bac6b4" d="M1617 335h5v5h-5zM1267 405h5v5h-5zM1252 515h5v5h-5zM1422 665h5v5h-5zM1342 740h5v5h-5zM1357 815h5v5h-5zM1682 850h5v5h-5z"/><path fill="#969c90" d="M1807 335h5v5h-5z"/><path fill="#429c42" d="M1852 335h5v5h-5zM1852 410h5v5h-5z"/><path fill="#cce4c0" d="M1857 335h5v5h-5zM1847 480h5v5h-5z"/><path fill="#fc6c60" d="M1872 335h5v5h-5zM1872 780h5v5h-5z"/><path fill="#fc544e" d="M1877 335h5v5h-5zM1877 590h5v5h-5zM1877 595h5v5h-5zM1877 780h5v5h-5z"/><path fill="#f0f6d8" d="M1852 340h5v5h-5zM1847 560h5v5h-5zM1847 590h5v5h-5zM1857 670h5v5h-5zM1852 850h5v5h-5z"/><path fill="#e4e4de" d="M247 365h5v5h-5zM247 440h5v5h-5zM247 520h5v5h-5zM252 555h5v5h-5zM247 855h5v5h-5z"/><path fill="#ccd2cc" d="M252 365h5v5h-5zM1057 365h5v5h-5zM492 405h5v5h-5zM1617 410h5v5h-5zM252 440h5v5h-5zM547 520h5v5h-5zM297 625h5v5h-5zM1607 670h5v5h-5zM832 700h5v5h-5zM1712 735h5v5h-5zM852 775h5v5h-5zM532 850h5v5h-5z"/><path fill="#c0baa8" d="M287 365h5v5h-5zM1607 365h5v5h-5zM1657 370h5v5h-5zM1542 405h5v5h-5zM1652 445h5v5h-5zM1677 445h5v5h-5zM1652 480h5v5h-5zM537 630h5v5h-5zM1687 630h5v5h-5zM532 705h5v5h-5zM1652 705h5v5h-5zM382 740h5v5h-5zM1642 775h5v5h-5zM1687 775h5v5h-5z"/><path fill="#9ca8a2" d="M292 365h5v5h-5zM622 625h5v5h-5z"/><path fill="#dedeba" d="M427 365h5v5h-5z"/><path fill="#c6d8cc" d="M462 365h5v5h-5z"/><path fill="#aeb4ba" d="M622 365h5v5h-5zM1342 665h5v5h-5zM482 740h5v5h-5z"/><path fill="#ccd2b4" d="M1612 365h5v5h-5zM1622 410h5v5h-5zM387 555h5v5h-5z"/><path fill="#d2ccc0" d="M1687 365h5v5h-5zM1517 405h5v5h-5zM372 410h5v5h-5zM637 410h5v5h-5zM1632 410h5v5h-5zM1687 410h5v5h-5zM357 440h5v5h-5zM1452 440h5v5h-5zM832 445h5v5h-5zM1037 445h5v5h-5zM1652 475h5v5h-5zM1807 475h5v5h-5zM837 480h5v5h-5zM1352 480h5v5h-5zM1597 480h5v5h-5zM1442 515h5v5h-5zM457 520h10v5h-10zM1622 550h5v5h-5zM477 555h5v5h-5zM1042 555h5v5h-5zM1817 560h5v5h-5zM352 585h5v5h-5zM287 595h5v5h-5zM1687 595h5v5h-5zM1242 625h5v5h-5zM1837 625h5v5h-5zM412 630h5v5h-5zM472 630h5v5h-5zM1037 630h5v5h-5zM1067 630h5v5h-5zM1662 660h5v5h-5zM287 670h5v5h-5zM627 670h5v5h-5zM1422 700h5v5h-5zM1617 735h5v5h-5zM1057 740h5v5h-5zM1442 740h5v5h-5zM837 775h5v5h-5zM1262 775h5v5h-5zM1632 775h5v5h-5zM332 780h5v5h-5z"/><path fill="#fca89c" d="M1872 365h5v5h-5zM1872 560h5v5h-5z"/><path fill="#fcaea2" d="M1877 365h5v5h-5zM1877 560h5v5h-5zM1877 810h5v5h-5z"/><path fill="#fffcff" d="M247 370h5v5h-5zM247 815h5v5h-5z"/><path fill="#e4dee4" d="M252 370h5v5h-5zM252 630h5v5h-5zM252 740h5v5h-5zM252 775h5v5h-5zM247 810h5v5h-5z"/><path fill="#a8b496" d="M287 370h5v5h-5z"/><path fill="#90909c" d="M332 370h5v5h-5z"/><path fill="#8a9696" d="M372 370h5v5h-5zM1622 370h5v5h-5zM412 590h5v5h-5z"/><path fill="#baa8a2" d="M382 370h5v5h-5zM287 515h5v5h-5zM447 550h5v5h-5z"/><path fill="#9c96a2" d="M392 370h5v5h-5zM402 555h5v5h-5z"/><path fill="#ae9c90" d="M397 370h5v5h-5z"/><path fill="#a8a8a8" d="M402 370h5v5h-5zM1807 440h5v5h-5zM542 665h5v5h-5zM377 815h5v5h-5z"/><path fill="#aea8b4" d="M407 370h5v5h-5z"/><path fill="#ded2b4" d="M442 370h5v5h-5z"/><path fill="#a2a28a" d="M447 370h5v5h-5zM1677 815h5v5h-5z"/><path fill="#ae9c9c" d="M537 370h5v5h-5zM352 515h5v5h-5z"/><path fill="#96968a" d="M542 370h5v5h-5zM632 590h5v5h-5z"/><path fill="#9cc69c" d="M547 370h5v5h-5z"/><path fill="#d2e4de" d="M562 370h5v5h-5z"/><path fill="#9c9c8a" d="M632 370h5v5h-5zM637 815h5v5h-5z"/><path fill="#a2a27e" d="M637 370h5v5h-5z"/><path fill="#d8c6ba" d="M837 370h5v5h-5z"/><path fill="#ccd8ba" d="M1042 370h5v5h-5zM1652 735h5v5h-5zM1817 775h5v5h-5zM322 815h5v5h-5z"/><path fill="#bac6ba" d="M1062 370h5v5h-5zM1812 475h5v5h-5zM547 630h5v5h-5zM1627 775h5v5h-5z"/><path fill="#a8c0b4" d="M1252 370h5v5h-5z"/><path fill="#c0c0c0" d="M1357 370h5v5h-5zM1357 445h5v5h-5zM467 590h5v5h-5zM842 850h5v5h-5z"/><path fill="#a2a896" d="M1602 370h5v5h-5zM1812 440h5v5h-5zM637 630h5v5h-5zM1807 700h5v5h-5zM1817 705h5v5h-5zM537 815h5v5h-5z"/><path fill="#b4ba9c" d="M1607 370h5v5h-5zM447 665h5v5h-5z"/><path fill="#c6c6a8" d="M1612 370h5v5h-5zM387 520h5v5h-5zM362 630h5v5h-5zM1622 700h5v5h-5z"/><path fill="#ccba9c" d="M1617 370h5v5h-5z"/><path fill="#a2ae9c" d="M1642 370h5v5h-5zM1812 775h5v5h-5z"/><path fill="#a28a96" d="M1652 370h5v5h-5z"/><path fill="#aeb490" d="M1672 370h5v5h-5z"/><path fill="#a2ba9c" d="M1677 370h5v5h-5z"/><path fill="#b4a8a2" d="M1687 370h5v5h-5zM1712 480h5v5h-5zM467 700h5v5h-5z"/><path fill="#b4a296" d="M1702 370h5v5h-5z"/><path fill="#9c9ca8" d="M1807 370h5v5h-5zM622 440h5v5h-5z"/><path fill="#baaeb4" d="M1832 370h5v5h-5zM1262 440h5v5h-5zM1272 515h5v5h-5z"/><path fill="#96c68a" d="M1852 370h5v5h-5zM1852 375h5v5h-5zM1852 815h5v5h-5zM1852 820h5v5h-5z"/><path fill="#7eba78" d="M1857 370h5v5h-5zM1852 630h5v5h-5z"/><path fill="#f6ead2" d="M442 375h5v5h-5z"/><path fill="#fcbaa8" d="M1872 375h5v5h-5z"/><path fill="#fcbaae" d="M1877 375h5v5h-5zM1877 820h5v5h-5z"/><path fill="#eaf0e4" d="M297 400h5v5h-5zM642 520h5v5h-5zM402 660h5v5h-5zM297 665h5v5h-5z"/><path fill="#f6f6d8" d="M337 400h5v5h-5z"/><path fill="#dedee4" d="M252 405h5v5h-5zM252 850h5v5h-5z"/><path fill="#849090" d="M292 405h5v5h-5z"/><path fill="#c6ccd2" d="M297 405h5v5h-5zM1607 735h5v5h-5z"/><path fill="#a29c90" d="M342 405h5v5h-5z"/><path fill="#a8bab4" d="M347 405h5v5h-5zM407 405h5v5h-5zM292 555h5v5h-5zM362 850h5v5h-5z"/><path fill="#aeb49c" d="M352 405h5v5h-5zM457 445h5v5h-5zM292 775h5v5h-5z"/><path fill="#9ca890" d="M357 405h5v5h-5zM287 740h5v5h-5z"/><path fill="#a28484" d="M367 405h5v5h-5z"/><path fill="#c0b4a8" d="M382 405h5v5h-5zM1047 405h5v5h-5zM532 440h5v5h-5zM377 445h5v5h-5zM1452 515h5v5h-5zM1697 515h5v5h-5zM457 775h5v5h-5zM542 775h5v5h-5zM1642 810h5v5h-5z"/><path fill="#aea28a" d="M392 405h5v5h-5zM342 625h5v5h-5zM1707 700h5v5h-5zM477 740h5v5h-5zM337 815h5v5h-5zM287 850h5v5h-5z"/><path fill="#a2a29c" d="M397 405h5v5h-5zM1812 515h5v5h-5zM1807 595h5v5h-5zM1622 775h5v5h-5zM1607 815h5v5h-5z"/><path fill="#84907e" d="M417 405h5v5h-5z"/><path fill="#a8a88a" d="M427 405h5v5h-5zM387 850h5v5h-5zM637 850h5v5h-5z"/><path fill="#96907e" d="M432 405h5v5h-5zM287 625h5v5h-5z"/><path fill="#c0b4a2" d="M447 405h5v5h-5zM1687 445h5v5h-5zM1602 480h5v5h-5zM1602 550h5v5h-5zM367 705h5v5h-5zM1602 740h5v5h-5zM1707 740h5v5h-5zM1602 810h5v5h-5z"/><path fill="#baaeae" d="M452 405h5v5h-5zM532 555h5v5h-5zM347 630h5v5h-5zM1827 855h5v5h-5z"/><path fill="#a8a296" d="M467 405h5v5h-5zM1662 440h5v5h-5zM427 480h5v5h-5zM402 515h5v5h-5zM557 815h5v5h-5z"/><path fill="#9c9684" d="M482 405h5v5h-5zM367 480h5v5h-5zM387 515h5v5h-5zM447 555h5v5h-5zM342 665h5v5h-5z"/><path fill="#a89c8a" d="M537 405h5v5h-5zM367 445h5v5h-5zM432 445h5v5h-5zM447 700h5v5h-5z"/><path fill="#b4ae90" d="M542 405h5v5h-5z"/><path fill="#aea284" d="M557 405h5v5h-5z"/><path fill="#8a8a7e" d="M627 405h5v5h-5z"/><path fill="#8a9084" d="M632 405h5v5h-5z"/><path fill="#d8c6b4" d="M837 405h5v5h-5z"/><path fill="#c6c6c6" d="M862 405h5v5h-5zM1062 705h5v5h-5zM1522 705h5v5h-5zM532 740h5v5h-5zM1812 745h5v5h-5z"/><path fill="#a2b4ba" d="M1607 405h5v5h-5z"/><path fill="#8a8a84" d="M1622 405h5v5h-5zM1622 590h5v5h-5z"/><path fill="#eadec0" d="M1667 405h5v5h-5zM1667 590h5v5h-5zM1667 665h5v5h-5zM1667 850h5v5h-5z"/><path fill="#a2a89c" d="M1677 405h5v5h-5zM417 665h5v5h-5zM367 740h5v5h-5z"/><path fill="#ccc0a8" d="M1692 405h5v5h-5zM552 440h5v5h-5zM322 625h5v5h-5zM387 700h5v5h-5z"/><path fill="#bab490" d="M1707 405h5v5h-5z"/><path fill="#aea8a8" d="M1832 405h5v5h-5zM1607 480h5v5h-5zM417 625h5v5h-5zM367 665h5v5h-5z"/><path fill="#e4f0d2" d="M1847 405h5v5h-5zM1857 410h5v5h-5zM1857 475h5v5h-5zM1857 855h5v5h-5z"/><path fill="#5aa85a" d="M1857 405h5v5h-5zM1857 480h5v5h-5zM1852 485h5v5h-5zM1852 705h5v5h-5z"/><path fill="#d2d2ae" d="M392 410h5v5h-5z"/><path fill="#ded8ba" d="M557 410h5v5h-5zM442 515h5v5h-5z"/><path fill="#eaded2" d="M1362 410h5v5h-5zM1697 410h5v5h-5zM1597 520h5v5h-5zM1807 710h5v5h-5zM482 770h5v5h-5z"/><path fill="#fc726c" d="M1872 410h5v5h-5zM1872 515h5v5h-5zM1872 855h5v5h-5z"/><path fill="#ccdecc" d="M297 440h5v5h-5z"/><path fill="#848a8a" d="M332 440h5v5h-5z"/><path fill="#9ca896" d="M352 440h5v5h-5zM547 515h5v5h-5z"/><path fill="#a8a2a8" d="M412 440h5v5h-5zM337 665h5v5h-5z"/><path fill="#eaf6e4" d="M437 440h5v5h-5z"/><path fill="#aebaba" d="M1352 440h5v5h-5zM1712 665h5v5h-5z"/><path fill="#90a296" d="M1607 440h5v5h-5z"/><path fill="#f6eacc" d="M1667 440h5v5h-5zM477 625h5v5h-5zM1667 625h5v5h-5zM1667 700h5v5h-5z"/><path fill="#b4a2a8" d="M1672 440h5v5h-5zM287 555h5v5h-5z"/><path fill="#a8a890" d="M1707 440h5v5h-5zM372 515h5v5h-5z"/><path fill="#9c9cae" d="M1712 440h5v5h-5z"/><path fill="#eae4de" d="M1817 440h5v5h-5zM1832 475h5v5h-5z"/><path fill="#9ccc90" d="M1857 440h5v5h-5z"/><path fill="#fc9084" d="M1872 440h5v5h-5z"/><path fill="#fc8a7e" d="M1877 440h5v5h-5zM1872 485h5v5h-5z"/><path fill="#fffcfc" d="M247 445h5v5h-5z"/><path fill="#c6d2b4" d="M292 445h5v5h-5zM857 740h5v5h-5zM1062 775h5v5h-5z"/><path fill="#96a8a8" d="M362 445h5v5h-5z"/><path fill="#c0d2c0" d="M372 445h5v5h-5zM372 590h5v5h-5zM1512 700h5v5h-5z"/><path fill="#c6d2ba" d="M397 445h5v5h-5zM1452 630h5v5h-5zM857 705h5v5h-5z"/><path fill="#c0b4ae" d="M412 445h5v5h-5zM1067 590h5v5h-5zM1452 590h5v5h-5zM467 630h5v5h-5zM632 700h5v5h-5z"/><path fill="#aec0b4" d="M427 445h5v5h-5zM1812 595h5v5h-5zM1607 775h5v5h-5zM1812 855h5v5h-5z"/><path fill="#b4b496" d="M542 445h5v5h-5z"/><path fill="#d2c0ba" d="M857 445h5v5h-5zM1332 480h5v5h-5zM1242 515h5v5h-5zM417 775h5v5h-5z"/><path fill="#d8dec0" d="M1442 445h5v5h-5zM342 585h5v5h-5zM1652 595h5v5h-5zM382 735h5v5h-5zM1597 810h5v5h-5z"/><path fill="#90968a" d="M1622 445h5v5h-5z"/><path fill="#b4ccc6" d="M1627 445h5v5h-5z"/><path fill="#b4c6ae" d="M1712 445h5v5h-5zM467 555h5v5h-5zM1657 815h5v5h-5z"/><path fill="#c0d2ba" d="M1802 445h5v5h-5z"/><path fill="#9c9c96" d="M1807 445h5v5h-5zM537 515h5v5h-5zM352 700h5v5h-5z"/><path fill="#a2cc96" d="M1857 445h5v5h-5z"/><path fill="#fc665a" d="M1872 445h5v5h-5zM1872 480h5v5h-5zM1872 520h5v5h-5zM1872 815h5v5h-5z"/><path fill="#fc423c" d="M1877 445h5v5h-5zM1877 480h5v5h-5z"/><path fill="#fcdecc" d="M1872 450h10v5h-10zM1872 475h10v5h-10z"/><path fill="#f6f0e4" d="M1632 475h5v5h-5z"/><path fill="#bacca8" d="M1672 475h5v5h-5z"/><path fill="#fcfffc" d="M247 480h5v5h-5zM247 705h5v5h-5zM247 850h5v5h-5z"/><path fill="#aea290" d="M332 480h5v5h-5zM462 740h5v5h-5z"/><path fill="#9c968a" d="M342 480h5v5h-5zM537 590h5v5h-5zM332 665h5v5h-5z"/><path fill="#9cb4a2" d="M347 480h5v5h-5zM1817 740h5v5h-5z"/><path fill="#b4c0c0" d="M372 480h5v5h-5zM452 555h5v5h-5z"/><path fill="#c0c09c" d="M377 480h5v5h-5zM457 705h5v5h-5z"/><path fill="#bac0a2" d="M382 480h5v5h-5zM1707 555h5v5h-5z"/><path fill="#a2a8a8" d="M397 480h5v5h-5zM402 590h5v5h-5zM1642 815h5v5h-5z"/><path fill="#c0b496" d="M402 480h5v5h-5z"/><path fill="#968a7e" d="M417 480h5v5h-5zM382 625h5v5h-5zM462 625h5v5h-5zM552 665h5v5h-5z"/><path fill="#8a9c96" d="M432 480h5v5h-5z"/><path fill="#bab496" d="M452 480h5v5h-5zM342 630h5v5h-5z"/><path fill="#9c9090" d="M482 480h5v5h-5z"/><path fill="#a2a88a" d="M542 480h5v5h-5zM1707 625h5v5h-5z"/><path fill="#96a89c" d="M547 480h5v5h-5z"/><path fill="#8a968a" d="M552 480h5v5h-5z"/><path fill="#ccd8d8" d="M562 480h5v5h-5z"/><path fill="#a2aea2" d="M622 480h5v5h-5zM382 555h5v5h-5zM382 775h5v5h-5zM1817 815h5v5h-5z"/><path fill="#7e7e7e" d="M627 480h5v5h-5z"/><path fill="#a8968a" d="M632 480h5v5h-5z"/><path fill="#969c9c" d="M637 480h5v5h-5z"/><path fill="#d2e4cc" d="M1337 480h5v5h-5z"/><path fill="#c6b4ae" d="M1617 480h5v5h-5zM857 850h5v5h-5z"/><path fill="#a8907e" d="M1622 480h5v5h-5z"/><path fill="#b4c6c0" d="M1627 480h5v5h-5z"/><path fill="#b4b48a" d="M1677 480h5v5h-5z"/><path fill="#a29c96" d="M1807 480h5v5h-5z"/><path fill="#a8b4a8" d="M1817 480h5v5h-5zM467 515h5v5h-5zM1432 590h5v5h-5zM482 630h5v5h-5zM372 665h5v5h-5zM1677 665h5v5h-5zM1607 810h5v5h-5zM282 815h5v5h-5z"/><path fill="#a8a8a2" d="M1832 480h5v5h-5zM292 625h5v5h-5zM1817 780h5v5h-5z"/><path fill="#ccb4ae" d="M282 515h5v5h-5zM452 740h5v5h-5z"/><path fill="#9cb4a8" d="M292 515h5v5h-5zM1607 555h5v5h-5z"/><path fill="#9ca27e" d="M342 515h5v5h-5z"/><path fill="#a29ca2" d="M367 515h5v5h-5zM1672 625h5v5h-5z"/><path fill="#d2cca8" d="M427 515h5v5h-5z"/><path fill="#849696" d="M447 515h5v5h-5z"/><path fill="#ae9c8a" d="M477 515h5v5h-5z"/><path fill="#a8b4ae" d="M482 515h5v5h-5z"/><path fill="#aea296" d="M552 515h5v5h-5z"/><path fill="#a8a28a" d="M557 515h5v5h-5zM537 555h5v5h-5zM1677 625h5v5h-5zM462 665h5v5h-5z"/><path fill="#c6d8c6" d="M562 515h5v5h-5zM1627 520h5v5h-5zM1532 550h5v5h-5zM842 705h5v5h-5zM547 780h5v5h-5z"/><path fill="#96a2a2" d="M622 515h5v5h-5z"/><path fill="#c0bac0" d="M1047 515h5v5h-5zM1267 740h5v5h-5z"/><path fill="#b4c6b4" d="M1432 515h5v5h-5zM1252 555h5v5h-5z"/><path fill="#c0b49c" d="M1602 515h5v5h-5zM487 555h5v5h-5zM1707 590h5v5h-5zM557 630h5v5h-5zM397 740h5v5h-5zM1602 775h5v5h-5z"/><path fill="#a89696" d="M1622 515h5v5h-5zM437 630h5v5h-5z"/><path fill="#ae9ca8" d="M1662 515h5v5h-5z"/><path fill="#f0e4c6" d="M1667 515h5v5h-5zM1667 775h5v5h-5z"/><path fill="#aec0ba" d="M1712 515h5v5h-5z"/><path fill="#9c9696" d="M1807 515h5v5h-5zM547 590h5v5h-5zM1807 740h5v5h-5z"/><path fill="#72b472" d="M1857 515h5v5h-5z"/><path fill="#ccd2d2" d="M252 520h5v5h-5z"/><path fill="#c6baba" d="M447 520h5v5h-5zM537 550h5v5h-5z"/><path fill="#d8d2b4" d="M557 520h5v5h-5zM342 590h5v5h-5zM412 700h5v5h-5zM442 740h5v5h-5z"/><path fill="#e4d2c6" d="M1242 520h5v5h-5z"/><path fill="#e4e4c6" d="M1427 520h5v5h-5z"/><path fill="#9cae9c" d="M1817 520h5v5h-5z"/><path fill="#aebaa8" d="M1827 520h5v5h-5zM467 775h5v5h-5z"/><path fill="#4e9c4e" d="M1852 520h5v5h-5z"/><path fill="#c0d8ae" d="M1857 520h5v5h-5z"/><path fill="#fcf0de" d="M1872 525h5v5h-5z"/><path fill="#d2ccd2" d="M252 550h5v5h-5z"/><path fill="#a8a290" d="M332 550h5v5h-5zM632 740h5v5h-5z"/><path fill="#b4ccae" d="M337 550h5v5h-5z"/><path fill="#aeae96" d="M352 550h5v5h-5zM1642 705h5v5h-5z"/><path fill="#d2cccc" d="M1352 550h5v5h-5zM532 665h5v5h-5zM297 815h5v5h-5zM637 855h5v5h-5z"/><path fill="#a2a2b4" d="M1607 550h5v5h-5z"/><path fill="#a8baae" d="M1672 550h5v5h-5z"/><path fill="#aec6ba" d="M1712 550h5v5h-5z"/><path fill="#cce4ba" d="M1857 550h5v5h-5zM1852 710h5v5h-5zM1857 780h5v5h-5z"/><path fill="#fcc0ae" d="M1872 550h5v5h-5z"/><path fill="#fcc6b4" d="M1877 550h5v5h-5z"/><path fill="#dec6ba" d="M322 555h5v5h-5z"/><path fill="#84967e" d="M362 555h5v5h-5z"/><path fill="#8aa290" d="M422 555h5v5h-5z"/><path fill="#c0ba90" d="M427 555h5v5h-5z"/><path fill="#969690" d="M437 555h5v5h-5z"/><path fill="#c0ae90" d="M457 555h5v5h-5z"/><path fill="#968496" d="M462 555h5v5h-5z"/><path fill="#a89c84" d="M542 555h5v5h-5zM637 740h5v5h-5z"/><path fill="#9ca2a8" d="M547 555h5v5h-5z"/><path fill="#9c8a8a" d="M552 555h5v5h-5zM332 700h5v5h-5z"/><path fill="#ae9684" d="M557 555h5v5h-5z"/><path fill="#d2ded8" d="M562 555h5v5h-5z"/><path fill="#b4a2ba" d="M622 555h5v5h-5z"/><path fill="#907872" d="M627 555h5v5h-5z"/><path fill="#9c9084" d="M637 555h5v5h-5z"/><path fill="#ccbab4" d="M857 555h5v5h-5zM1652 590h5v5h-5zM1532 815h5v5h-5z"/><path fill="#c6c6cc" d="M862 555h5v5h-5zM1712 595h5v5h-5z"/><path fill="#baba9c" d="M1602 555h5v5h-5z"/><path fill="#f0f0d2" d="M1612 555h5v5h-5zM1612 705h5v5h-5zM1612 815h5v5h-5z"/><path fill="#967884" d="M1622 555h5v5h-5z"/><path fill="#a8ae96" d="M1652 555h5v5h-5z"/><path fill="#9ca296" d="M1662 555h5v5h-5z"/><path fill="#aebaa2" d="M1672 555h5v5h-5zM547 625h5v5h-5zM482 700h5v5h-5z"/><path fill="#9ca884" d="M1677 555h5v5h-5z"/><path fill="#c6c0a2" d="M1697 555h5v5h-5z"/><path fill="#a2b4a8" d="M1712 555h5v5h-5zM1607 665h5v5h-5zM1672 815h5v5h-5z"/><path fill="#a2a2a2" d="M1807 555h5v5h-5zM622 590h5v5h-5z"/><path fill="#c0deae" d="M1847 555h5v5h-5z"/><path fill="#fc3636" d="M1877 555h5v5h-5z"/><path fill="#d8e4cc" d="M1262 585h5v5h-5zM442 630h5v5h-5z"/><path fill="#e4d2cc" d="M1352 585h5v5h-5z"/><path fill="#fcffff" d="M247 590h5v5h-5zM247 775h5v5h-5z"/><path fill="#b4a284" d="M287 590h5v5h-5z"/><path fill="#ae96a2" d="M362 590h5v5h-5z"/><path fill="#a89684" d="M367 590h5v5h-5zM432 590h5v5h-5z"/><path fill="#bac6a8" d="M392 590h5v5h-5z"/><path fill="#8a908a" d="M452 590h5v5h-5zM627 850h5v5h-5z"/><path fill="#d2c6cc" d="M532 590h5v5h-5z"/><path fill="#908a84" d="M552 590h5v5h-5zM342 740h5v5h-5z"/><path fill="#bac6cc" d="M562 590h5v5h-5z"/><path fill="#9c8a84" d="M627 590h5v5h-5z"/><path fill="#c0aeae" d="M1522 590h5v5h-5zM1607 705h5v5h-5zM1662 705h5v5h-5z"/><path fill="#a2aeae" d="M1812 590h5v5h-5z"/><path fill="#dee4de" d="M247 595h5v5h-5zM562 630h5v5h-5z"/><path fill="#aeaeba" d="M1827 595h5v5h-5z"/><path fill="#429642" d="M1852 595h5v5h-5z"/><path fill="#f0fcea" d="M442 625h5v5h-5z"/><path fill="#b4ba8a" d="M447 625h5v5h-5z"/><path fill="#c6d2cc" d="M492 625h5v5h-5zM1682 740h5v5h-5zM1802 780h5v5h-5z"/><path fill="#babac0" d="M1262 625h5v5h-5z"/><path fill="#baa8a8" d="M1617 625h5v5h-5z"/><path fill="#a2969c" d="M1662 625h5v5h-5zM1807 775h5v5h-5z"/><path fill="#fc9c8a" d="M1872 625h5v5h-5z"/><path fill="#fc9c90" d="M1877 625h5v5h-5z"/><path fill="#aebac0" d="M387 630h5v5h-5z"/><path fill="#96908a" d="M397 630h5v5h-5zM332 775h5v5h-5z"/><path fill="#aec0a8" d="M417 630h5v5h-5zM457 665h5v5h-5z"/><path fill="#baccba" d="M457 630h5v5h-5z"/><path fill="#8a9684" d="M627 630h5v5h-5z"/><path fill="#deccc0" d="M1422 630h5v5h-5zM532 660h5v5h-5zM837 740h5v5h-5z"/><path fill="#9c8a7e" d="M1622 630h5v5h-5zM452 665h5v5h-5z"/><path fill="#a29ca8" d="M1807 630h5v5h-5z"/><path fill="#8ac084" d="M1857 630h5v5h-5z"/><path fill="#fc3c36" d="M1877 630h5v5h-5z"/><path fill="#fcccc0" d="M1877 635h5v5h-5z"/><path fill="#b4a28a" d="M287 665h5v5h-5zM1707 775h5v5h-5z"/><path fill="#baa890" d="M352 665h5v5h-5z"/><path fill="#9cb4ae" d="M382 665h5v5h-5z"/><path fill="#969ca2" d="M392 665h5v5h-5zM402 740h5v5h-5z"/><path fill="#9096a2" d="M402 665h5v5h-5z"/><path fill="#a2907e" d="M412 665h5v5h-5z"/><path fill="#7e7e78" d="M427 665h5v5h-5z"/><path fill="#a29684" d="M477 665h5v5h-5zM447 775h5v5h-5z"/><path fill="#8a8a90" d="M547 665h5v5h-5z"/><path fill="#c0c6cc" d="M562 665h5v5h-5zM1357 740h5v5h-5z"/><path fill="#9c8a72" d="M627 665h5v5h-5z"/><path fill="#9cae96" d="M637 665h5v5h-5z"/><path fill="#c0ccae" d="M1357 665h5v5h-5z"/><path fill="#c6b4ba" d="M1432 665h5v5h-5z"/><path fill="#848a84" d="M1622 665h5v5h-5zM1622 850h5v5h-5z"/><path fill="#aea2ae" d="M1627 665h5v5h-5zM1712 815h5v5h-5z"/><path fill="#aea2a8" d="M1697 665h5v5h-5zM1672 810h5v5h-5z"/><path fill="#9c9c9c" d="M1807 665h5v5h-5z"/><path fill="#dee4c6" d="M462 670h5v5h-5zM367 700h5v5h-5z"/><path fill="#d8ccae" d="M532 670h5v5h-5z"/><path fill="#baa2a2" d="M1807 670h5v5h-5z"/><path fill="#54a254" d="M1852 670h5v5h-5z"/><path fill="#d8ded8" d="M297 700h5v5h-5zM642 815h5v5h-5z"/><path fill="#a8baa8" d="M337 700h5v5h-5zM1652 815h5v5h-5z"/><path fill="#9ca88a" d="M347 700h5v5h-5z"/><path fill="#ccccd2" d="M452 700h5v5h-5z"/><path fill="#a8a8ae" d="M537 700h5v5h-5zM1832 740h5v5h-5z"/><path fill="#9ca2ae" d="M622 700h5v5h-5zM1712 700h5v5h-5z"/><path fill="#aec0a2" d="M627 700h5v5h-5zM382 850h5v5h-5z"/><path fill="#d8cccc" d="M842 700h5v5h-5z"/><path fill="#90a896" d="M1607 700h5v5h-5z"/><path fill="#aeae90" d="M1642 700h5v5h-5zM362 740h5v5h-5z"/><path fill="#c0ba9c" d="M1647 700h5v5h-5zM352 850h5v5h-5z"/><path fill="#96ae9c" d="M1672 700h5v5h-5z"/><path fill="#a8ae8a" d="M1677 700h5v5h-5z"/><path fill="#ccb4ba" d="M1702 700h5v5h-5z"/><path fill="#84c07e" d="M1857 700h5v5h-5z"/><path fill="#fc7e78" d="M1872 700h5v5h-5z"/><path fill="#cccca8" d="M357 705h5v5h-5z"/><path fill="#9096a8" d="M362 705h5v5h-5z"/><path fill="#aec09c" d="M372 705h5v5h-5z"/><path fill="#c6b49c" d="M417 705h5v5h-5z"/><path fill="#a28a84" d="M627 705h5v5h-5z"/><path fill="#def0d8" d="M642 705h5v5h-5z"/><path fill="#d8c6c6" d="M837 705h5v5h-5z"/><path fill="#9c967e" d="M1622 705h5v5h-5zM537 850h5v5h-5z"/><path fill="#a89ca8" d="M1807 705h5v5h-5z"/><path fill="#a8d29c" d="M1847 705h5v5h-5zM1857 705h5v5h-5z"/><path fill="#fc3c3c" d="M1877 705h5v5h-5zM1877 740h5v5h-5z"/><path fill="#fcead2" d="M1872 710h5v5h-5z"/><path fill="#fcead8" d="M1877 710h5v5h-5z"/><path fill="#eae4c6" d="M397 735h5v5h-5z"/><path fill="#b4b4ba" d="M1812 735h5v5h-5zM1362 815h5v5h-5zM1047 850h5v5h-5z"/><path fill="#fcd2c6" d="M1872 735h5v5h-5z"/><path fill="#fcd8c6" d="M1877 735h5v5h-5z"/><path fill="#a2baa8" d="M292 740h5v5h-5z"/><path fill="#9ca8a8" d="M332 740h5v5h-5z"/><path fill="#b4a290" d="M352 740h5v5h-5z"/><path fill="#9caea8" d="M357 740h5v5h-5z"/><path fill="#9ca284" d="M387 740h5v5h-5z"/><path fill="#a2c0c0" d="M392 740h5v5h-5z"/><path fill="#908a8a" d="M422 740h5v5h-5z"/><path fill="#909096" d="M432 740h5v5h-5z"/><path fill="#a29c8a" d="M542 740h5v5h-5z"/><path fill="#96848a" d="M552 740h5v5h-5z"/><path fill="#c6d8d2" d="M562 740h5v5h-5z"/><path fill="#787878" d="M627 740h5v5h-5z"/><path fill="#ccbaa2" d="M1617 740h5v5h-5z"/><path fill="#aec090" d="M1677 740h5v5h-5z"/><path fill="#a2b4ae" d="M1712 740h5v5h-5z"/><path fill="#66ae60" d="M1857 740h5v5h-5z"/><path fill="#eaf0d2" d="M1847 745h5v5h-5z"/><path fill="#a2968a" d="M287 775h5v5h-5z"/><path fill="#d2d8d8" d="M297 775h5v5h-5zM562 815h5v5h-5z"/><path fill="#b4a8b4" d="M347 775h5v5h-5z"/><path fill="#9cb49c" d="M422 775h5v5h-5z"/><path fill="#8a9096" d="M462 775h5v5h-5z"/><path fill="#c6c0c6" d="M532 775h5v5h-5z"/><path fill="#9ca2a2" d="M547 775h5v5h-5z"/><path fill="#9696a2" d="M622 775h5v5h-5z"/><path fill="#969c84" d="M627 775h5v5h-5z"/><path fill="#c0d2cc" d="M842 775h5v5h-5z"/><path fill="#e4d2c0" d="M1692 775h5v5h-5z"/><path fill="#6cae6c" d="M1857 775h5v5h-5z"/><path fill="#d2c6d2" d="M252 780h5v5h-5z"/><path fill="#e4eae4" d="M562 780h5v5h-5z"/><path fill="#ccbaa8" d="M1652 780h5v5h-5z"/><path fill="#deccba" d="M1707 780h5v5h-5z"/><path fill="#b4d2a8" d="M1847 780h5v5h-5z"/><path fill="#489c48" d="M1852 780h5v5h-5z"/><path fill="#c0a89c" d="M287 810h5v5h-5z"/><path fill="#a2b4b4" d="M1712 810h5v5h-5zM367 815h5v5h-5z"/><path fill="#fcae9c" d="M1872 810h5v5h-5z"/><path fill="#9c908a" d="M287 815h5v5h-5z"/><path fill="#a8c0ae" d="M332 815h5v5h-5z"/><path fill="#e4eacc" d="M357 815h5v5h-5z"/><path fill="#a89090" d="M362 815h5v5h-5z"/><path fill="#968a84" d="M542 815h5v5h-5z"/><path fill="#a2a8b4" d="M547 815h5v5h-5z"/><path fill="#90848a" d="M552 815h5v5h-5z"/><path fill="#7e847e" d="M627 815h5v5h-5z"/><path fill="#ccc6cc" d="M842 815h5v5h-5z"/><path fill="#ccbac0" d="M1447 815h5v5h-5zM862 850h5v5h-5z"/><path fill="#8a8a72" d="M1622 815h5v5h-5z"/><path fill="#a8c6b4" d="M1627 815h5v5h-5z"/><path fill="#9ca28a" d="M1662 815h5v5h-5z"/><path fill="#c0a8a2" d="M1697 815h5v5h-5z"/><path fill="#78b472" d="M1857 815h5v5h-5z"/><path fill="#fc3030" d="M1877 815h5v5h-5z"/><path fill="#fcb4a8" d="M1872 820h5v5h-5z"/><path fill="#8aa88a" d="M332 850h5v5h-5z"/><path fill="#9c8484" d="M552 850h5v5h-5z"/><path fill="#9c907e" d="M557 850h5v5h-5z"/><path fill="#bacccc" d="M562 850h5v5h-5z"/><path fill="#ae969c" d="M622 850h5v5h-5z"/><path fill="#969078" d="M632 850h5v5h-5z"/><path fill="#b4a8c0" d="M1452 850h5v5h-5z"/><path fill="#c0ba96" d="M1707 850h5v5h-5z"/><path fill="#90969c" d="M1807 850h5v5h-5z"/><path fill="#fc4e48" d="M1877 850h5v5h-5z"/><path fill="#d8deba" d="M387 855h5v5h-5z"/><path fill="#90a29c" d="M392 855h5v5h-5z"/><path fill="#429c48" d="M1852 855h5v5h-5z"/></svg>
<div class="a" style="left:231px;top:166px;width:1662px;height:32px;border:3px solid #007bff;box-shadow:2px 2px 4px rgba(0,0,0,.42), inset 2px 2px 4px rgba(0,0,0,.34);"></div>
<div class="a" style="left:235.7px;top:170.6px;width:29.8px;height:29.8px;border-radius:15px;background:#007bff;"></div>
<span class="t" style="left:245.60px;top:175.40px;font-size:16.3px;color:#fff;">8</span>
<span class="t" style="left:279.80px;top:175.60px;font-size:12.2px;color:#212121;letter-spacing:-0.237px;">210</span>
<span class="t" style="left:325.10px;top:175.60px;font-size:12.2px;color:#212121;letter-spacing:-0.456px;">demo_cleaner_invoice_89_25012...</span>
<span class="t" style="left:530.80px;top:175.60px;font-size:12.2px;color:#212121;letter-spacing:-0.822px;">Owner</span>
<span class="t" style="left:620.90px;top:175.60px;font-size:12.2px;color:#212121;letter-spacing:-0.811px;">New</span>
<span class="t" style="left:828.20px;top:175.60px;font-size:12.2px;color:#757575;letter-spacing:-0.602px;word-spacing:0.96px;">Not Set</span>
<span class="t" style="left:1033.80px;top:175.60px;font-size:12.2px;color:#757575;letter-spacing:-0.602px;word-spacing:0.96px;">Not Set</span>
<span class="t" style="left:1239.40px;top:175.60px;font-size:12.2px;color:#757575;letter-spacing:-0.602px;word-spacing:0.96px;">Not Set</span>
<span class="t" style="left:1329.40px;top:175.60px;font-size:12.2px;color:#757575;letter-spacing:-0.602px;word-spacing:0.96px;">Not Set</span>
<span class="t" style="left:1419.70px;top:175.60px;font-size:12.2px;color:#757575;letter-spacing:-0.602px;word-spacing:0.96px;">Not Set</span>
<span class="t" style="left:1509.70px;top:175.60px;font-size:12.2px;color:#757575;letter-spacing:-0.602px;word-spacing:0.96px;">Not Set</span>
<span class="t" style="left:1599.30px;top:175.60px;font-size:12.2px;color:#212121;letter-spacing:-0.377px;word-spacing:0.60px;">25 Jan, 2023 11:52:47</span>
<svg style="left:0;top:0" width="1899" height="210"><g transform="translate(0,0.2)"><path d="M1808 192.200a3.700 3.700 0 0 1-.7-7.300a5.200 5.200 0 0 1 10-1.400a4.400 4.400 0 0 1 .4 8.700z" fill="#8e8e8e"/><path d="M1811.700 184.600h2.600v2.900h2.200l-3.500 3.500l-3.500-3.500h2.200z" fill="#fffde8"/><path d="M1827 193l1-4l8-8l3 3l-8 8z" fill="#9a9a9a"/><path d="M1837 180l1-1a1 1 0 0 1 1.400 0l1.600 1.600a1 1 0 0 1 0 1.400l-1 1z" fill="#9a9a9a"/><path d="M1829.500 189.800l6.800-6.800" stroke="#c8c8c8" stroke-width=".8"/><path d="M1827 193l.5-2l1.500 1.500z" fill="#fffde8"/><path d="M1850 187l4 4l8-8.200" fill="none" stroke="#0c7d14" stroke-width="3"/><path d="M1873.400 182.900l8.300 8.300M1881.700 182.900l-8.300 8.300" fill="none" stroke="#ff0a0a" stroke-width="3.300"/></g></svg>
</div></body></html>
